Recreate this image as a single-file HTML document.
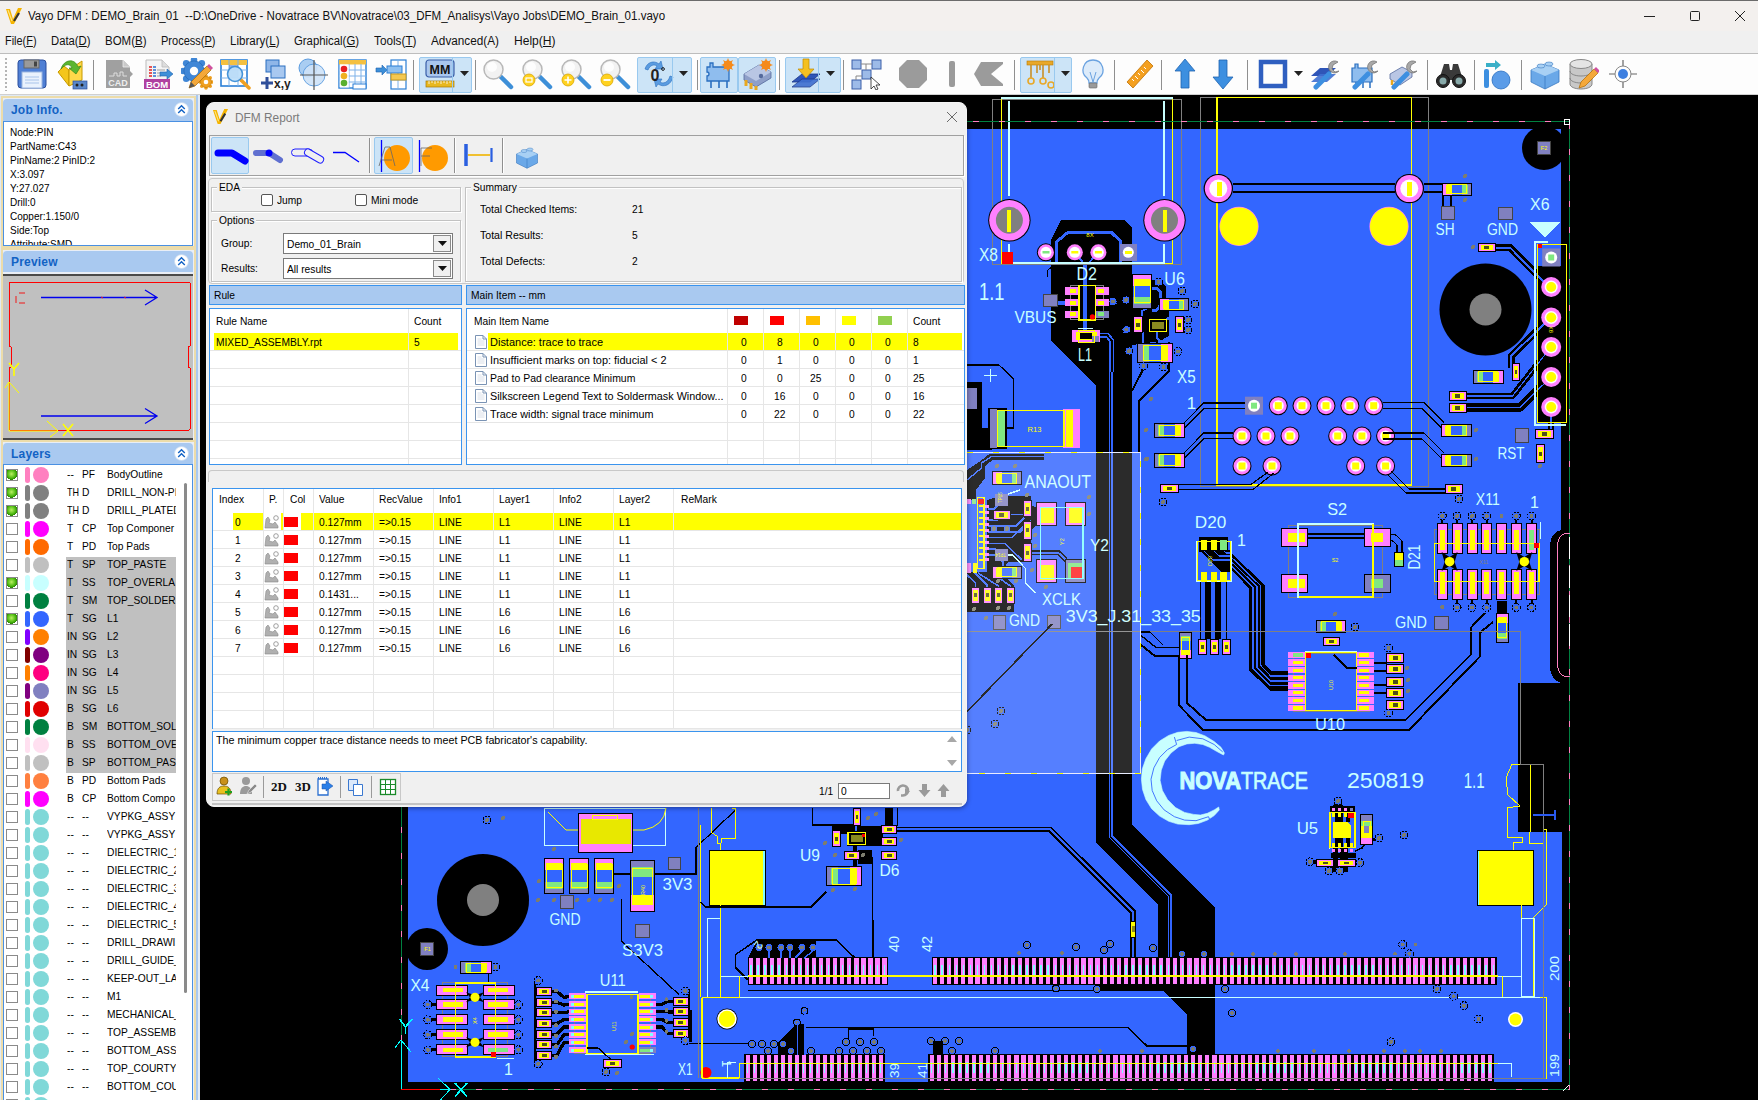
<!DOCTYPE html>
<html><head><meta charset="utf-8"><title>Vayo DFM</title><style>
*{box-sizing:border-box;margin:0;padding:0}
html,body{width:1758px;height:1100px;overflow:hidden;background:#000;font-family:"Liberation Sans",sans-serif;font-size:11px;color:#000}
.abs{position:absolute}
#title{position:absolute;left:0;top:0;width:1758px;height:31px;background:#f3f0ee;border-top:1px solid #6b6b6b}
#title .t{position:absolute;left:28px;top:8px;font-size:12.4px;white-space:nowrap;color:#111}
#menu{position:absolute;left:0;top:31px;width:1758px;height:22px;background:#f0f0f0}
#menu span{position:absolute;top:3px;font-size:12.3px;white-space:nowrap;color:#111}
#menu u{text-decoration:underline}
#tb{position:absolute;left:0;top:53px;width:1758px;height:42px;background:#fdfdfd;border-top:1px solid #bdbdbd;border-bottom:1px solid #d0d0d0}
#tb .sep{position:absolute;top:6px;width:1px;height:30px;background:#8f8f8f}
#tb .hl{position:absolute;top:3px;height:36px;background:#cce4f7;border:1px solid #99c9ef;border-radius:2px}
#tb svg{position:absolute;top:4px}
#left{position:absolute;left:0;top:95px;width:200px;height:1005px;background:#dfe9f5}
#canvas{position:absolute;left:200px;top:95px;width:1558px;height:1005px;background:#000;overflow:hidden}
</style></head><body>
<div id="title"><svg class="abs" style="left:5px;top:6px" width="18" height="18" viewBox="0 0 18 18"><path d="M1 2 L5 2 L8 12 L13 1 L17 1 L9 17 L6 17Z" fill="#f5b400"/><path d="M3 3 L7 14" stroke="#ffe680" stroke-width="1.2"/><path d="M9 14 L14 6" stroke="#333" stroke-width="2.2"/></svg><span class="abs" style="left:28px;top:8px;font-size:12.5px;line-height:15px;color:#111;white-space:nowrap;transform-origin:0 0;transform:scaleX(0.9241);">Vayo DFM : DEMO_Brain_01&nbsp; --D:\OneDrive - Novatrace BV\Novatrace\03_DFM_Analisys\Vayo Jobs\DEMO_Brain_01.vayo</span><svg class="abs" style="left:1630px;top:0" width="128" height="30" viewBox="0 0 128 30"><path d="M14 15.5h11" stroke="#222" stroke-width="1"/><rect x="60.5" y="10.5" width="9" height="9" rx="1" fill="none" stroke="#222" stroke-width="1"/><path d="M105 10l10 10M115 10l-10 10" stroke="#222" stroke-width="1"/></svg></div><div id="menu"><span class="abs" style="left:5px;top:3px;font-size:12.5px;line-height:15px;color:#111;white-space:nowrap;transform-origin:0 0;transform:scaleX(0.8726);">File(<u>F</u>)</span><span class="abs" style="left:51px;top:3px;font-size:12.5px;line-height:15px;color:#111;white-space:nowrap;transform-origin:0 0;transform:scaleX(0.9028);">Data(<u>D</u>)</span><span class="abs" style="left:105px;top:3px;font-size:12.5px;line-height:15px;color:#111;white-space:nowrap;transform-origin:0 0;transform:scaleX(0.9195);">BOM(<u>B</u>)</span><span class="abs" style="left:161px;top:3px;font-size:12.5px;line-height:15px;color:#111;white-space:nowrap;transform-origin:0 0;transform:scaleX(0.8817);">Process(<u>P</u>)</span><span class="abs" style="left:230px;top:3px;font-size:12.5px;line-height:15px;color:#111;white-space:nowrap;transform-origin:0 0;transform:scaleX(0.9256);">Library(<u>L</u>)</span><span class="abs" style="left:294px;top:3px;font-size:12.5px;line-height:15px;color:#111;white-space:nowrap;transform-origin:0 0;transform:scaleX(0.9086);">Graphical(<u>G</u>)</span><span class="abs" style="left:373.5px;top:3px;font-size:12.5px;line-height:15px;color:#111;white-space:nowrap;transform-origin:0 0;transform:scaleX(0.9415);">Tools(<u>T</u>)</span><span class="abs" style="left:431px;top:3px;font-size:12.5px;line-height:15px;color:#111;white-space:nowrap;transform-origin:0 0;transform:scaleX(0.9411);">Advanced(A)</span><span class="abs" style="left:513.5px;top:3px;font-size:12.5px;line-height:15px;color:#111;white-space:nowrap;transform-origin:0 0;transform:scaleX(0.9638);">Help(<u>H</u>)</span></div><div id="tb"><div class="abs" style="left:5px;top:4px;width:2px;height:33px;background:repeating-linear-gradient(#b5b5b5 0 2px,transparent 2px 4px)"></div><div class="hl" style="left:419px;width:53px"></div><div class="hl" style="left:637px;width:55px"></div><div class="hl" style="left:700px;width:38px"></div><div class="hl" style="left:738px;width:38px"></div><div class="hl" style="left:785px;width:56px"></div><div class="hl" style="left:1020px;width:52px"></div><div class="sep" style="left:93px"></div><div class="sep" style="left:413px"></div><div class="sep" style="left:475px"></div><div class="sep" style="left:697px"></div><div class="sep" style="left:779px"></div><div class="sep" style="left:843px"></div><div class="sep" style="left:1014px"></div><div class="sep" style="left:1114px"></div><div class="sep" style="left:1161px"></div><div class="sep" style="left:1247px"></div><div class="sep" style="left:1427px"></div><div class="sep" style="left:1474px"></div><div class="sep" style="left:1521px"></div><svg viewBox="0 0 32 32" width="32" height="32" style="left:16px;"><rect x="2" y="2" width="28" height="28" rx="3" fill="#4f7fd4" stroke="#2b4f9e"/><rect x="8" y="2" width="15" height="8" fill="#9a9a9a" stroke="#666"/><rect x="18" y="3.5" width="3" height="5" fill="#444"/><rect x="6" y="14" width="20" height="16" fill="#eaf2fd" stroke="#9db7e0"/><path d="M9 19h14M9 22h14M9 25h14" stroke="#a9c4ea" stroke-width="1"/></svg><svg viewBox="0 0 32 32" width="32" height="32" style="left:56px;"><path d="M2 14 L13 28 L13 12 L8 8 Z" fill="#f4c61c" stroke="#c79a00"/><path d="M13 28 L26 22 L26 3 L13 12 Z" fill="#ffd94a" stroke="#c79a00"/><path d="M5 11 C8 1 19 0 22 9 L25 8 L20 16 L13 10 L16 10 C14 5 9 6 5 11Z" fill="#5cb531" stroke="#3a8a17" stroke-width=".7"/><rect x="17" y="23" width="14" height="8" fill="#5b88c9" stroke="#2b4f9e" stroke-width=".7"/><circle cx="21" cy="27" r="1.5" fill="#222"/><circle cx="26" cy="27" r="1.5" fill="#222"/></svg><svg viewBox="0 0 32 32" width="32" height="32" style="left:103px;"><path d="M3 2 H20 L27 9 V13 L30 16 L27 19 V30 H3Z" fill="#a0a0a0"/><path d="M20 2 V9 H27" fill="#c9c9c9" stroke="#eee" stroke-width=".8"/><text x="15" y="28" font-size="9" font-weight="bold" fill="#eee" text-anchor="middle" font-family="Liberation Sans">CAD</text><path d="M6 18h5v-3h3v3h3v-4h3v4h4" stroke="#ddd" fill="none"/></svg><svg viewBox="0 0 32 32" width="32" height="32" style="left:142px;"><path d="M4 2 H20 L27 9 V22 H4Z" fill="#f4f4f4" stroke="#bbb"/><path d="M20 2 V9 H27" fill="#ddd" stroke="#bbb" stroke-width=".8"/><path d="M7 9h3M7 12h3M7 15h3M7 18h3" stroke="#e02020" stroke-width="1.5"/><path d="M11 9h3M11 12h3M11 15h3M11 18h3" stroke="#2a6fd0" stroke-width="1.5"/><path d="M15 12h8M15 15h4M15 18h4" stroke="#bbb" stroke-width="1.5"/><path d="M18 14h7v-3l6 5-6 5v-3h-7z" fill="#3d8fd8" stroke="#1f63b0" stroke-width=".6"/><rect x="2" y="21" width="26" height="10" fill="#b040a0"/><text x="15" y="29.5" font-size="9.5" font-weight="bold" fill="#fff" text-anchor="middle" font-family="Liberation Sans">BOM</text></svg><svg viewBox="0 0 32 32" width="32" height="32" style="left:181px;"><circle cx="24.0" cy="13.0" r="3.3" fill="#3f86d6"/><circle cx="20.8" cy="20.8" r="3.3" fill="#3f86d6"/><circle cx="13.0" cy="24.0" r="3.3" fill="#3f86d6"/><circle cx="5.2" cy="20.8" r="3.3" fill="#3f86d6"/><circle cx="2.0" cy="13.0" r="3.3" fill="#3f86d6"/><circle cx="5.2" cy="5.2" r="3.3" fill="#3f86d6"/><circle cx="13.0" cy="2.0" r="3.3" fill="#3f86d6"/><circle cx="20.8" cy="5.2" r="3.3" fill="#3f86d6"/><circle cx="13" cy="13" r="10.1" fill="#3f86d6" stroke="#1f63b0" stroke-width=".6"/><circle cx="13" cy="13" r="4.2" fill="#fdfdfd"/><circle cx="31.0" cy="24.0" r="1.8" fill="#f0a020"/><circle cx="29.2" cy="28.2" r="1.8" fill="#f0a020"/><circle cx="25.0" cy="30.0" r="1.8" fill="#f0a020"/><circle cx="20.8" cy="28.2" r="1.8" fill="#f0a020"/><circle cx="19.0" cy="24.0" r="1.8" fill="#f0a020"/><circle cx="20.8" cy="19.8" r="1.8" fill="#f0a020"/><circle cx="25.0" cy="18.0" r="1.8" fill="#f0a020"/><circle cx="29.2" cy="19.8" r="1.8" fill="#f0a020"/><circle cx="25" cy="24" r="5.5" fill="#f0a020" stroke="#c07800" stroke-width=".6"/><circle cx="25" cy="24" r="2.3" fill="#fdfdfd"/><path d="M8 30 L10 24 L26 8 L30 12 L14 28Z" fill="#f4a83a" stroke="#b06a00" stroke-width=".7"/><path d="M26 8 L28 6 L32 10 L30 12Z" fill="#d050a0"/><path d="M8 30 L10 24 L14 28Z" fill="#555"/></svg><svg viewBox="0 0 32 32" width="32" height="32" style="left:219px;"><rect x="2" y="2" width="26" height="26" fill="#fff" stroke="#2a7fd6" stroke-width="1.6"/><rect x="2" y="2" width="26" height="5" fill="#f4c040"/><path d="M10 2v26M19 2v26M2 12h26M2 20h26" stroke="#7fb2e8" stroke-width="1"/><rect x="10" y="7" width="9" height="13" fill="#3f6fc0" opacity=".55"/><line x1="22" y1="22" x2="30" y2="30" stroke="#f0a020" stroke-width="3.5" stroke-linecap="round"/><circle cx="16" cy="16" r="7.5" fill="#bfe0fa" stroke="#3d8fd8" stroke-width="1.6" opacity=".95"/></svg><svg viewBox="0 0 32 32" width="32" height="32" style="left:259px;"><rect x="7" y="2" width="13" height="12" fill="#8fb6e8" stroke="#2a6fc0"/><rect x="12" y="8" width="14" height="12" fill="#a8c8f0" stroke="#2a6fc0"/><path d="M8 19v12M2 25h12" stroke="#2f4f9a" stroke-width="3"/><text x="15" y="30" font-size="12" font-weight="bold" fill="#222" font-family="Liberation Sans">x,y</text></svg><svg viewBox="0 0 32 32" width="32" height="32" style="left:297px;"><circle cx="11" cy="10" r="9" fill="#a9cdf2" stroke="#5b9ce0"/><circle cx="17" cy="17" r="11" fill="#cfe3f8" stroke="#5b9ce0" opacity=".9"/><path d="M17 2v30M3 17h28" stroke="#555" stroke-width="1.2"/></svg><svg viewBox="0 0 32 32" width="32" height="32" style="left:336px;"><rect x="3" y="2" width="27" height="28" fill="#fff" stroke="#2a7fd6" stroke-width="1.4"/><rect x="3" y="2" width="27" height="4.5" fill="#f4c040"/><path d="M13 6v24M19 6v24M25 6v24M3 12h27M3 18h27M3 24h27" stroke="#7fb2e8" stroke-width="1"/><rect x="3.7" y="6.5" width="9" height="23" fill="#fff"/><circle cx="8" cy="11" r="3.3" fill="#e82020"/><circle cx="8" cy="18" r="3.3" fill="#f0b020"/><circle cx="8" cy="25" r="3.3" fill="#58b030"/><rect x="17" y="26" width="13" height="5" fill="#fff" stroke="#2a7fd6"/></svg><svg viewBox="0 0 32 32" width="32" height="32" style="left:375px;"><path d="M1 10h6v-3l5 5-5 5v-3h-6z" fill="#3d8fd8" stroke="#1f63b0" stroke-width=".6"/><rect x="16" y="2" width="15" height="29" fill="#fff" stroke="#2a7fd6" stroke-width="1.2"/><path d="M23 2v29M16 22h15" stroke="#7fb2e8"/><rect x="12" y="8" width="15" height="7" fill="#8ec0f0" stroke="#2a7fd6"/><rect x="16" y="16" width="15" height="6" fill="#f4c850" stroke="#c89a20"/></svg><svg viewBox="0 0 32 32" width="32" height="32" style="left:424px;"><rect x="2" y="2" width="28" height="17" rx="3" fill="#a9c6ee" stroke="#3a5fa8" stroke-width="1.2"/><text x="16" y="15.5" font-size="12.5" font-weight="bold" fill="#111" text-anchor="middle" font-family="Liberation Sans">MM</text><rect x="2" y="23" width="28" height="6" fill="#e8b820" stroke="#a87800" stroke-width=".7"/><path d="M5 23v3M8 23v2M11 23v3M14 23v2M17 23v3M20 23v2M23 23v3M26 23v2" stroke="#fff" stroke-width=".8"/></svg><svg viewBox="0 0 32 32" width="32" height="32" style="left:482px;"><line x1="17" y1="17" x2="29" y2="29" stroke="#3d8fd8" stroke-width="4.5" stroke-linecap="round"/><circle cx="11.5" cy="11.5" r="9.5" fill="#f2f2f2" stroke="#b8b8b8" stroke-width="1.5"/><circle cx="10" cy="9" r="5" fill="#fff" opacity=".8"/></svg><svg viewBox="0 0 32 32" width="32" height="32" style="left:521px;"><line x1="17" y1="17" x2="29" y2="29" stroke="#3d8fd8" stroke-width="4.5" stroke-linecap="round"/><circle cx="11.5" cy="11.5" r="9.5" fill="#f2f2f2" stroke="#b8b8b8" stroke-width="1.5"/><circle cx="10" cy="9" r="5" fill="#fff" opacity=".8"/><circle cx="8" cy="22" r="6" fill="#ffd21f" stroke="#d9a400" stroke-width=".8"/><rect x="5" y="20" width="6" height="4" fill="none" stroke="#fff" stroke-width="1.2"/></svg><svg viewBox="0 0 32 32" width="32" height="32" style="left:560px;"><line x1="17" y1="17" x2="29" y2="29" stroke="#3d8fd8" stroke-width="4.5" stroke-linecap="round"/><circle cx="11.5" cy="11.5" r="9.5" fill="#f2f2f2" stroke="#b8b8b8" stroke-width="1.5"/><circle cx="10" cy="9" r="5" fill="#fff" opacity=".8"/><circle cx="8" cy="22" r="6" fill="#ffd21f" stroke="#d9a400" stroke-width=".8"/><path d="M8 18.5v7M4.5 22h7" stroke="#fff" stroke-width="1.6"/></svg><svg viewBox="0 0 32 32" width="32" height="32" style="left:599px;"><line x1="17" y1="17" x2="29" y2="29" stroke="#3d8fd8" stroke-width="4.5" stroke-linecap="round"/><circle cx="11.5" cy="11.5" r="9.5" fill="#f2f2f2" stroke="#b8b8b8" stroke-width="1.5"/><circle cx="10" cy="9" r="5" fill="#fff" opacity=".8"/><circle cx="8" cy="22" r="6" fill="#ffd21f" stroke="#d9a400" stroke-width=".8"/><path d="M4.5 22h7" stroke="#fff" stroke-width="1.8"/></svg><svg viewBox="0 0 32 32" width="32" height="32" style="left:642px;"><path d="M3 11 C5 4 12 2 17 6 L19 3 L21 11 L13 11 L15 8 C12 6 8 7 6 12Z" fill="#5b9ce0" stroke="#2a6fc0" stroke-width=".6"/><path d="M31 19 C29 27 22 30 16 26 L14 29 L12 21 L20 21 L18 24 C21 26 26 25 28 18Z" fill="#5b9ce0" stroke="#2a6fc0" stroke-width=".6"/><text x="13" y="23" font-size="16" font-weight="bold" fill="#222" text-anchor="middle" font-family="Liberation Sans">0</text><circle cx="21" cy="11" r="1.4" fill="none" stroke="#222" stroke-width="1"/></svg><svg viewBox="0 0 32 32" width="32" height="32" style="left:703px;"><path d="M4 9h3v-4h3v4h16v14h-16v0h-6v-5a2 2 0 0 0 0-4z" fill="#8fbdee" stroke="#2a6fc0" stroke-width="1.3"/><path d="M8 23v7M16 23v7M24 23v7" stroke="#2a6fc0" stroke-width="1.6"/><g fill="#f58a1a"><circle cx="25" cy="7" r="4.5"/><path d="M25 0l1.5 4h-3zM25 14l1.5-4h-3zM18 7l4-1.5v3zM32 7l-4-1.5v3zM20 2l4 2-2 2zM30 2l-4 2 2 2zM20 12l4-2-2-2zM30 12l-4-2 2-2z"/></g></svg><svg viewBox="0 0 32 32" width="32" height="32" style="left:741px;"><path d="M3 16 L18 7 L30 14 L30 20 L15 29 L3 22Z" fill="#8e9fc8" stroke="#556a9c" stroke-width=".8"/><path d="M3 16 L18 7 L30 14 L15 23Z" fill="#b9c6e4"/><path d="M5 22v6M10 25v6M15 28v4" stroke="#e8a820" stroke-width="3"/><circle cx="20" cy="18" r="2.2" fill="#556a9c"/><g fill="#f58a1a"><circle cx="25" cy="7" r="4.5"/><path d="M25 0l1.5 4h-3zM25 14l1.5-4h-3zM18 7l4-1.5v3zM32 7l-4-1.5v3zM20 2l4 2-2 2zM30 2l-4 2 2 2zM20 12l4-2-2-2zM30 12l-4-2 2-2z"/></g></svg><svg viewBox="0 0 32 32" width="32" height="32" style="left:790px;"><path d="M2 24 L12 16 L30 16 L20 24Z" fill="#2f55b8" stroke="#1b3688" stroke-width=".8"/><path d="M2 29 L12 21 L30 21 L20 29Z" fill="#3f6fd0" stroke="#1b3688" stroke-width=".8" opacity=".9"/><path d="M13 1h6v10h5l-8 9-8-9h5z" fill="#f4c020" stroke="#c08a00" stroke-width=".7"/></svg><svg viewBox="0 0 32 32" width="32" height="32" style="left:850px;"><rect x="2" y="2" width="9" height="9" fill="#9dbbe8" stroke="#3a5fa8"/><rect x="22" y="2" width="9" height="9" fill="#9dbbe8" stroke="#3a5fa8"/><rect x="12" y="12" width="9" height="9" fill="#9dbbe8" stroke="#3a5fa8"/><rect x="2" y="22" width="9" height="9" fill="#9dbbe8" stroke="#3a5fa8"/><path d="M11 6h11M16 6v6M6 22v-4h6" stroke="#888" fill="none"/><path d="M21 19 L21 31 L24 28 L26 32 L28 31 L26 27 L30 27Z" fill="#fff" stroke="#222" stroke-width=".8"/></svg><svg viewBox="0 0 32 32" width="32" height="32" style="left:897px;"><path d="M10 2h12l8 8v12l-8 8h-12l-8-8v-12z" fill="#9b9b9b"/></svg><svg viewBox="0 0 32 32" width="32" height="32" style="left:936px;"><rect x="13" y="3" width="6" height="26" rx="2" fill="#9b9b9b"/></svg><svg viewBox="0 0 32 32" width="32" height="32" style="left:973px;"><path d="M8 4h22v24h-22l-7-12z" fill="#9b9b9b"/><path d="M18 16 L30 6 V26Z" fill="#fdfdfd"/></svg><svg viewBox="0 0 32 32" width="32" height="32" style="left:1024px;"><rect x="3" y="3" width="26" height="4" fill="#e8a828" stroke="#b87800" stroke-width=".6"/><path d="M7 7v13M13 7v8M19 7v13M25 7v8M16 7v5" stroke="#c89028" stroke-width="1.6" fill="none"/><circle cx="7" cy="23" r="3" fill="none" stroke="#e8a828" stroke-width="1.6"/><circle cx="19" cy="23" r="3" fill="none" stroke="#e8a828" stroke-width="1.6"/><circle cx="27" cy="27" r="3" fill="none" stroke="#e8a828" stroke-width="1.6"/></svg><svg viewBox="0 0 32 32" width="32" height="32" style="left:1077px;"><path d="M16 2a10 10 0 0 0-6 18c1 1 2 3 2 5h8c0-2 1-4 2-5a10 10 0 0 0-6-18z" fill="#dcebfa" stroke="#6aa2e0" stroke-width="1.3"/><path d="M13 14l3 10 3-10" stroke="#6aa2e0" fill="none"/><rect x="12" y="25" width="8" height="5" rx="1" fill="#9a9a9a" stroke="#666" stroke-width=".6"/></svg><svg viewBox="0 0 32 32" width="32" height="32" style="left:1123px;"><path d="M4 24 L24 2 L30 8 L10 30Z" fill="#f4a020" stroke="#c07000" stroke-width=".8"/><path d="M9 21l2 2M12 18l3 3M15 15l2 2M18 12l3 3M21 9l2 2" stroke="#fff" stroke-width="1"/></svg><svg viewBox="0 0 32 32" width="32" height="32" style="left:1169px;"><path d="M16 1 L26 13 H20 V30 H12 V13 H6Z" fill="#3d8fe0" stroke="#1f63b0" stroke-width=".8"/></svg><svg viewBox="0 0 32 32" width="32" height="32" style="left:1207px;"><path d="M16 31 L26 19 H20 V2 H12 V19 H6Z" fill="#3d8fe0" stroke="#1f63b0" stroke-width=".8"/></svg><svg viewBox="0 0 32 32" width="32" height="32" style="left:1257px;"><rect x="4" y="4" width="24" height="24" fill="#fdfdfd" stroke="#2f5fc0" stroke-width="4.5"/></svg><svg viewBox="0 0 32 32" width="32" height="32" style="left:1310px;"><path d="M1 18 L10 10 L26 10 L17 18Z" fill="#2f55b8"/><path d="M1 24 L10 16 L26 16 L17 24Z" fill="#3f6fd0" opacity=".9"/><path d="M30 5 a7 7 0 1 0 -9 9 L8 28 a2.5 2.5 0 0 0 4 4 L25 18" fill="none"/><path d="M19 16 L6 29" stroke="#3d8fe0" stroke-width="5" stroke-linecap="round"/><path d="M28 4 a6 6 0 1 0 1 9 l-4 1 l-3-3 l1-4z" fill="#a8a8a8" stroke="#777" stroke-width=".8"/></svg><svg viewBox="0 0 32 32" width="32" height="32" style="left:1349px;"><path d="M3 10h3v-4h3v4h14v14h-20z" fill="#8fbdee" stroke="#2a6fc0" stroke-width="1.2"/><path d="M7 24v6M14 24v6M21 24v6" stroke="#2a6fc0" stroke-width="1.5"/><path d="M30 5 a7 7 0 1 0 -9 9 L8 28 a2.5 2.5 0 0 0 4 4 L25 18" fill="none"/><path d="M19 16 L6 29" stroke="#3d8fe0" stroke-width="5" stroke-linecap="round"/><path d="M28 4 a6 6 0 1 0 1 9 l-4 1 l-3-3 l1-4z" fill="#a8a8a8" stroke="#777" stroke-width=".8"/></svg><svg viewBox="0 0 32 32" width="32" height="32" style="left:1388px;"><path d="M2 16 L14 9 L24 14 L24 19 L12 27 L2 21Z" fill="#b9c6e4" stroke="#556a9c" stroke-width=".8"/><path d="M4 22v5M8 24v5" stroke="#e8a820" stroke-width="2.5"/><path d="M30 5 a7 7 0 1 0 -9 9 L8 28 a2.5 2.5 0 0 0 4 4 L25 18" fill="none"/><path d="M19 16 L6 29" stroke="#3d8fe0" stroke-width="5" stroke-linecap="round"/><path d="M28 4 a6 6 0 1 0 1 9 l-4 1 l-3-3 l1-4z" fill="#a8a8a8" stroke="#777" stroke-width=".8"/></svg><svg viewBox="0 0 32 32" width="32" height="32" style="left:1435px;"><path d="M4 22 L9 6 L14 6 L15 12 L17 12 L18 6 L23 6 L28 22Z" fill="#3a3a3a"/><circle cx="8" cy="23" r="6.5" fill="#2a2a2a" stroke="#111"/><circle cx="24" cy="23" r="6.5" fill="#2a2a2a" stroke="#111"/><circle cx="8" cy="23" r="3.5" fill="#8aa"/><circle cx="24" cy="23" r="3.5" fill="#8aa"/></svg><svg viewBox="0 0 32 32" width="32" height="32" style="left:1481px;"><rect x="3" y="11" width="5" height="19" rx="2" fill="#3d8fe0"/><path d="M5 5h9v-3l6 5-6 5v-3h-9z" fill="#3ab0c8"/><circle cx="20" cy="22" r="9" fill="#5b9ce8" stroke="#2a6fc0" stroke-width=".8"/></svg><svg viewBox="0 0 32 32" width="32" height="32" style="left:1529px;"><path d="M2 12 L16 6 L30 12 L30 24 L16 31 L2 24Z" fill="#6aa8e8" stroke="#3a78c0" stroke-width=".8"/><path d="M2 12 L16 18 L30 12 L16 6Z" fill="#a8d0f4"/><path d="M16 18V31" stroke="#3a78c0" stroke-width=".8"/><ellipse cx="12" cy="8" rx="4" ry="2" fill="#a8d0f4" stroke="#3a78c0" stroke-width=".6"/><ellipse cx="20" cy="6" rx="4" ry="2" fill="#a8d0f4" stroke="#3a78c0" stroke-width=".6"/></svg><svg viewBox="0 0 32 32" width="32" height="32" style="left:1567px;"><path d="M3 6v20c0 3 5 5 11 5s11-2 11-5V6" fill="#c8c8c8" stroke="#888"/><ellipse cx="14" cy="6" rx="11" ry="4.5" fill="#e4e4e4" stroke="#888"/><path d="M3 13c0 3 5 5 11 5s11-2 11-5M3 20c0 3 5 5 11 5s11-2 11-5" stroke="#888" fill="none"/><path d="M12 30 L14 24 L27 11 L31 15 L18 28Z" fill="#f4a83a" stroke="#b06a00" stroke-width=".7"/><path d="M27 11l2-2 4 4-2 2z" fill="#d050a0"/></svg><svg viewBox="0 0 32 32" width="32" height="32" style="left:1607px;"><path d="M16 2v28M2 16h28" stroke="#666" stroke-width="1.2"/><circle cx="16" cy="16" r="8" fill="#fdfdfd" stroke="#888" stroke-width="1"/><circle cx="16" cy="16" r="5" fill="#3d7fe0"/></svg><svg class="abs" style="left:460px;top:17px" width="9" height="6"><path d="M0 0h9L4.5 5z" fill="#222"/></svg><svg class="abs" style="left:679px;top:17px" width="9" height="6"><path d="M0 0h9L4.5 5z" fill="#222"/></svg><svg class="abs" style="left:826px;top:17px" width="9" height="6"><path d="M0 0h9L4.5 5z" fill="#222"/></svg><svg class="abs" style="left:1061px;top:17px" width="9" height="6"><path d="M0 0h9L4.5 5z" fill="#222"/></svg><svg class="abs" style="left:1294px;top:17px" width="9" height="6"><path d="M0 0h9L4.5 5z" fill="#222"/></svg><div class="abs" style="left:452px;top:4px;width:1px;height:34px;background:#99c9ef"></div><div class="abs" style="left:672px;top:4px;width:1px;height:34px;background:#99c9ef"></div><div class="abs" style="left:818px;top:4px;width:1px;height:34px;background:#99c9ef"></div><div class="abs" style="left:1054px;top:4px;width:1px;height:34px;background:#99c9ef"></div></div>
<div id="left"><div class="abs" style="left:196px;top:0;width:2px;height:1005px;background:#a9c9f0"></div><div class="abs" style="left:1px;top:1px;width:195px;height:152px;border:2px solid #ecdcaa;background:#e9eef6"></div><div class="abs" style="left:3px;top:4px;width:190px;height:22px;background:#a9c9f0;border-radius:4px 4px 0 0"></div><span class="abs" style="left:11px;top:8px;font-size:12px;font-weight:bold;color:#1262c4;white-space:nowrap;letter-spacing:.2px">Job Info.</span><svg class="abs" style="left:174px;top:7px" width="15" height="15" viewBox="0 0 15 15"><circle cx="7.5" cy="7.5" r="7" fill="#fff" stroke="#c5d8f0" stroke-width=".8"/><path d="M4.2 7 L7.5 3.8 L10.8 7M4.2 11 L7.5 7.8 L10.8 11" fill="none" stroke="#1262c4" stroke-width="1.4"/></svg><div class="abs" style="left:3px;top:26px;width:190px;height:125px;background:#fff;border:1px solid #4a90e2;overflow:hidden"><div class="abs" style="left:6px;top:4px;white-space:nowrap;line-height:13px;transform-origin:0 0;transform:scaleX(.91)">Node:PIN</div><div class="abs" style="left:6px;top:18px;white-space:nowrap;line-height:13px;transform-origin:0 0;transform:scaleX(.91)">PartName:C43</div><div class="abs" style="left:6px;top:32px;white-space:nowrap;line-height:13px;transform-origin:0 0;transform:scaleX(.91)">PinName:2 PinID:2</div><div class="abs" style="left:6px;top:46px;white-space:nowrap;line-height:13px;transform-origin:0 0;transform:scaleX(.91)">X:3.097</div><div class="abs" style="left:6px;top:60px;white-space:nowrap;line-height:13px;transform-origin:0 0;transform:scaleX(.91)">Y:27.027</div><div class="abs" style="left:6px;top:74px;white-space:nowrap;line-height:13px;transform-origin:0 0;transform:scaleX(.91)">Drill:0</div><div class="abs" style="left:6px;top:88px;white-space:nowrap;line-height:13px;transform-origin:0 0;transform:scaleX(.91)">Copper:1.150/0</div><div class="abs" style="left:6px;top:102px;white-space:nowrap;line-height:13px;transform-origin:0 0;transform:scaleX(.91)">Side:Top</div><div class="abs" style="left:6px;top:116px;white-space:nowrap;line-height:13px;transform-origin:0 0;transform:scaleX(.91)">Attribute:SMD</div></div><div class="abs" style="left:1px;top:153px;width:195px;height:194px;border:2px solid #ecdcaa;background:#e9eef6"></div><div class="abs" style="left:3px;top:156px;width:190px;height:21px;background:#a9c9f0;border-radius:4px 4px 0 0"></div><span class="abs" style="left:11px;top:160px;font-size:12px;font-weight:bold;color:#1262c4;white-space:nowrap;letter-spacing:.2px">Preview</span><svg class="abs" style="left:174px;top:159px" width="15" height="15" viewBox="0 0 15 15"><circle cx="7.5" cy="7.5" r="7" fill="#fff" stroke="#c5d8f0" stroke-width=".8"/><path d="M4.2 7 L7.5 3.8 L10.8 7M4.2 11 L7.5 7.8 L10.8 11" fill="none" stroke="#1262c4" stroke-width="1.4"/></svg><div class="abs" style="left:3px;top:179px;width:190px;height:166px;background:#c0c0c0;border-top:2px solid #4a4a4a;border-bottom:2px solid #4a4a4a"><svg width="190" height="162" viewBox="3 276 190 162" class="abs" style="left:0;top:0"><path d="M10 282 H189 a1 1 0 0 1 1 1 V346 l-2 1 V367 l2 1 V429 a1 1 0 0 1 -1 1 H10 a1 1 0 0 1 -1 -1 V368 l2-1 V347 l-2-1 V283 a1 1 0 0 1 1-1z" fill="none" stroke="#ff0000" stroke-width="1" shape-rendering="crispEdges"/><path d="M41 297.5H157M145 290l12 7.5-12 7.5M41 416H157M145 408.500l12 7.500-12 7.500" fill="none" stroke="#0000ee" stroke-width="1.3"/><path d="M16 296v7M19 293h6M19 303h6M101 297l2 1M124 297l2 1" stroke="#f01818" stroke-width="1" fill="none"/><path d="M9 431V382M5 388l4-6 10 11M9 431H58M47 421l11 10-8 6" fill="none" stroke="#ffff00" stroke-width="1"/><path d="M9 363l5 6 5-6M14 369v7" fill="none" stroke="#ffff00" stroke-width="1.6"/><path d="M63 424l10 12M73 424l-10 12" fill="none" stroke="#ffff00" stroke-width="1.6"/></svg></div><div class="abs" style="left:1px;top:345px;width:195px;height:670px;border:2px solid #ecdcaa;background:#e9eef6"></div><div class="abs" style="left:3px;top:348px;width:190px;height:21px;background:#a9c9f0;border-radius:4px 4px 0 0"></div><span class="abs" style="left:11px;top:352px;font-size:12px;font-weight:bold;color:#1262c4;white-space:nowrap;letter-spacing:.2px">Layers</span><svg class="abs" style="left:174px;top:351px" width="15" height="15" viewBox="0 0 15 15"><circle cx="7.5" cy="7.5" r="7" fill="#fff" stroke="#c5d8f0" stroke-width=".8"/><path d="M4.2 7 L7.5 3.8 L10.8 7M4.2 11 L7.5 7.8 L10.8 11" fill="none" stroke="#1262c4" stroke-width="1.4"/></svg><div class="abs" style="left:3px;top:369px;width:190px;height:640px;background:#fff;border-left:1px solid #4a90e2;border-right:1px solid #4a90e2;border-top:1px solid #4a90e2;overflow:hidden"><div class="abs" style="left:62px;top:92px;width:110px;height:216px;background:#c0c0c0"></div><div class="abs" style="left:2px;top:4px;width:12px;height:12px;border:1px solid #8a8a8a;background:radial-gradient(circle at 45% 40%,#b8f060 0,#58c018 45%,#2a8a00 70%,#fff 72%)"></div><div class="abs" style="left:21px;top:2px;width:5px;height:16px;border-radius:2.5px;background:#ff80c0"></div><div class="abs" style="left:29px;top:2px;width:16px;height:16px;border-radius:8px;background:#ff80c0"></div><span class="abs" style="left:63px;top:3px;line-height:13px;white-space:nowrap;transform-origin:0 0;transform:scaleX(.93)">--</span><span class="abs" style="left:78px;top:3px;line-height:13px;white-space:nowrap;transform-origin:0 0;transform:scaleX(.93)">PF</span><span class="abs" style="left:103px;top:3px;line-height:13px;white-space:nowrap;width:74px;overflow:hidden;transform-origin:0 0;transform:scaleX(.93)">BodyOutline</span><div class="abs" style="left:2px;top:22px;width:12px;height:12px;border:1px solid #8a8a8a;background:radial-gradient(circle at 45% 40%,#b8f060 0,#58c018 45%,#2a8a00 70%,#fff 72%)"></div><div class="abs" style="left:21px;top:20px;width:5px;height:16px;border-radius:2.5px;background:#808080"></div><div class="abs" style="left:29px;top:20px;width:16px;height:16px;border-radius:8px;background:#808080"></div><span class="abs" style="left:63px;top:21px;line-height:13px;white-space:nowrap;transform-origin:0 0;transform:scaleX(.82)">TH</span><span class="abs" style="left:78px;top:21px;line-height:13px;white-space:nowrap;transform-origin:0 0;transform:scaleX(.93)">D</span><span class="abs" style="left:103px;top:21px;line-height:13px;white-space:nowrap;width:74px;overflow:hidden;transform-origin:0 0;transform:scaleX(.93)">DRILL_NON-PL</span><div class="abs" style="left:2px;top:40px;width:12px;height:12px;border:1px solid #8a8a8a;background:radial-gradient(circle at 45% 40%,#b8f060 0,#58c018 45%,#2a8a00 70%,#fff 72%)"></div><div class="abs" style="left:21px;top:38px;width:5px;height:16px;border-radius:2.5px;background:#808080"></div><div class="abs" style="left:29px;top:38px;width:16px;height:16px;border-radius:8px;background:#808080"></div><span class="abs" style="left:63px;top:39px;line-height:13px;white-space:nowrap;transform-origin:0 0;transform:scaleX(.82)">TH</span><span class="abs" style="left:78px;top:39px;line-height:13px;white-space:nowrap;transform-origin:0 0;transform:scaleX(.93)">D</span><span class="abs" style="left:103px;top:39px;line-height:13px;white-space:nowrap;width:74px;overflow:hidden;transform-origin:0 0;transform:scaleX(.93)">DRILL_PLATED</span><div class="abs" style="left:2px;top:58px;width:12px;height:12px;border:1px solid #8a8a8a;background:#fff"></div><div class="abs" style="left:21px;top:56px;width:5px;height:16px;border-radius:2.5px;background:#ff00ff"></div><div class="abs" style="left:29px;top:56px;width:16px;height:16px;border-radius:8px;background:#ff00ff"></div><span class="abs" style="left:63px;top:57px;line-height:13px;white-space:nowrap;transform-origin:0 0;transform:scaleX(.93)">T</span><span class="abs" style="left:78px;top:57px;line-height:13px;white-space:nowrap;transform-origin:0 0;transform:scaleX(.93)">CP</span><span class="abs" style="left:103px;top:57px;line-height:13px;white-space:nowrap;width:74px;overflow:hidden;transform-origin:0 0;transform:scaleX(.93)">Top Componer</span><div class="abs" style="left:2px;top:76px;width:12px;height:12px;border:1px solid #8a8a8a;background:#fff"></div><div class="abs" style="left:21px;top:74px;width:5px;height:16px;border-radius:2.5px;background:#ff6a00"></div><div class="abs" style="left:29px;top:74px;width:16px;height:16px;border-radius:8px;background:#ff6a00"></div><span class="abs" style="left:63px;top:75px;line-height:13px;white-space:nowrap;transform-origin:0 0;transform:scaleX(.93)">T</span><span class="abs" style="left:78px;top:75px;line-height:13px;white-space:nowrap;transform-origin:0 0;transform:scaleX(.93)">PD</span><span class="abs" style="left:103px;top:75px;line-height:13px;white-space:nowrap;width:74px;overflow:hidden;transform-origin:0 0;transform:scaleX(.93)">Top Pads</span><div class="abs" style="left:2px;top:94px;width:12px;height:12px;border:1px solid #8a8a8a;background:#fff"></div><div class="abs" style="left:21px;top:92px;width:5px;height:16px;border-radius:2.5px;background:#c0c0c0"></div><div class="abs" style="left:29px;top:92px;width:16px;height:16px;border-radius:8px;background:#c0c0c0"></div><span class="abs" style="left:63px;top:93px;line-height:13px;white-space:nowrap;transform-origin:0 0;transform:scaleX(.93)">T</span><span class="abs" style="left:78px;top:93px;line-height:13px;white-space:nowrap;transform-origin:0 0;transform:scaleX(.93)">SP</span><span class="abs" style="left:103px;top:93px;line-height:13px;white-space:nowrap;width:74px;overflow:hidden;transform-origin:0 0;transform:scaleX(.93)">TOP_PASTE</span><div class="abs" style="left:2px;top:112px;width:12px;height:12px;border:1px solid #8a8a8a;background:radial-gradient(circle at 45% 40%,#b8f060 0,#58c018 45%,#2a8a00 70%,#fff 72%)"></div><div class="abs" style="left:21px;top:110px;width:5px;height:16px;border-radius:2.5px;background:#c8ffff"></div><div class="abs" style="left:29px;top:110px;width:16px;height:16px;border-radius:8px;background:#c8ffff"></div><span class="abs" style="left:63px;top:111px;line-height:13px;white-space:nowrap;transform-origin:0 0;transform:scaleX(.93)">T</span><span class="abs" style="left:78px;top:111px;line-height:13px;white-space:nowrap;transform-origin:0 0;transform:scaleX(.93)">SS</span><span class="abs" style="left:103px;top:111px;line-height:13px;white-space:nowrap;width:74px;overflow:hidden;transform-origin:0 0;transform:scaleX(.93)">TOP_OVERLA</span><div class="abs" style="left:2px;top:130px;width:12px;height:12px;border:1px solid #8a8a8a;background:#fff"></div><div class="abs" style="left:21px;top:128px;width:5px;height:16px;border-radius:2.5px;background:#008040"></div><div class="abs" style="left:29px;top:128px;width:16px;height:16px;border-radius:8px;background:#008040"></div><span class="abs" style="left:63px;top:129px;line-height:13px;white-space:nowrap;transform-origin:0 0;transform:scaleX(.93)">T</span><span class="abs" style="left:78px;top:129px;line-height:13px;white-space:nowrap;transform-origin:0 0;transform:scaleX(.93)">SM</span><span class="abs" style="left:103px;top:129px;line-height:13px;white-space:nowrap;width:74px;overflow:hidden;transform-origin:0 0;transform:scaleX(.93)">TOP_SOLDER</span><div class="abs" style="left:2px;top:148px;width:12px;height:12px;border:1px solid #8a8a8a;background:radial-gradient(circle at 45% 40%,#b8f060 0,#58c018 45%,#2a8a00 70%,#fff 72%)"></div><div class="abs" style="left:21px;top:146px;width:5px;height:16px;border-radius:2.5px;background:#3366ff"></div><div class="abs" style="left:29px;top:146px;width:16px;height:16px;border-radius:8px;background:#3366ff"></div><span class="abs" style="left:63px;top:147px;line-height:13px;white-space:nowrap;transform-origin:0 0;transform:scaleX(.93)">T</span><span class="abs" style="left:78px;top:147px;line-height:13px;white-space:nowrap;transform-origin:0 0;transform:scaleX(.93)">SG</span><span class="abs" style="left:103px;top:147px;line-height:13px;white-space:nowrap;width:74px;overflow:hidden;transform-origin:0 0;transform:scaleX(.93)">L1</span><div class="abs" style="left:2px;top:166px;width:12px;height:12px;border:1px solid #8a8a8a;background:#fff"></div><div class="abs" style="left:21px;top:164px;width:5px;height:16px;border-radius:2.5px;background:#8000ff"></div><div class="abs" style="left:29px;top:164px;width:16px;height:16px;border-radius:8px;background:#ff8000"></div><span class="abs" style="left:63px;top:165px;line-height:13px;white-space:nowrap;transform-origin:0 0;transform:scaleX(.93)">IN</span><span class="abs" style="left:78px;top:165px;line-height:13px;white-space:nowrap;transform-origin:0 0;transform:scaleX(.93)">SG</span><span class="abs" style="left:103px;top:165px;line-height:13px;white-space:nowrap;width:74px;overflow:hidden;transform-origin:0 0;transform:scaleX(.93)">L2</span><div class="abs" style="left:2px;top:184px;width:12px;height:12px;border:1px solid #8a8a8a;background:#fff"></div><div class="abs" style="left:21px;top:182px;width:5px;height:16px;border-radius:2.5px;background:#800000"></div><div class="abs" style="left:29px;top:182px;width:16px;height:16px;border-radius:8px;background:#800080"></div><span class="abs" style="left:63px;top:183px;line-height:13px;white-space:nowrap;transform-origin:0 0;transform:scaleX(.93)">IN</span><span class="abs" style="left:78px;top:183px;line-height:13px;white-space:nowrap;transform-origin:0 0;transform:scaleX(.93)">SG</span><span class="abs" style="left:103px;top:183px;line-height:13px;white-space:nowrap;width:74px;overflow:hidden;transform-origin:0 0;transform:scaleX(.93)">L3</span><div class="abs" style="left:2px;top:202px;width:12px;height:12px;border:1px solid #8a8a8a;background:#fff"></div><div class="abs" style="left:21px;top:200px;width:5px;height:16px;border-radius:2.5px;background:#ff8000"></div><div class="abs" style="left:29px;top:200px;width:16px;height:16px;border-radius:8px;background:#ff0080"></div><span class="abs" style="left:63px;top:201px;line-height:13px;white-space:nowrap;transform-origin:0 0;transform:scaleX(.93)">IN</span><span class="abs" style="left:78px;top:201px;line-height:13px;white-space:nowrap;transform-origin:0 0;transform:scaleX(.93)">SG</span><span class="abs" style="left:103px;top:201px;line-height:13px;white-space:nowrap;width:74px;overflow:hidden;transform-origin:0 0;transform:scaleX(.93)">L4</span><div class="abs" style="left:2px;top:220px;width:12px;height:12px;border:1px solid #8a8a8a;background:#fff"></div><div class="abs" style="left:21px;top:218px;width:5px;height:16px;border-radius:2.5px;background:#800080"></div><div class="abs" style="left:29px;top:218px;width:16px;height:16px;border-radius:8px;background:#8080c0"></div><span class="abs" style="left:63px;top:219px;line-height:13px;white-space:nowrap;transform-origin:0 0;transform:scaleX(.93)">IN</span><span class="abs" style="left:78px;top:219px;line-height:13px;white-space:nowrap;transform-origin:0 0;transform:scaleX(.93)">SG</span><span class="abs" style="left:103px;top:219px;line-height:13px;white-space:nowrap;width:74px;overflow:hidden;transform-origin:0 0;transform:scaleX(.93)">L5</span><div class="abs" style="left:2px;top:238px;width:12px;height:12px;border:1px solid #8a8a8a;background:#fff"></div><div class="abs" style="left:21px;top:236px;width:5px;height:16px;border-radius:2.5px;background:#e00000"></div><div class="abs" style="left:29px;top:236px;width:16px;height:16px;border-radius:8px;background:#e00000"></div><span class="abs" style="left:63px;top:237px;line-height:13px;white-space:nowrap;transform-origin:0 0;transform:scaleX(.93)">B</span><span class="abs" style="left:78px;top:237px;line-height:13px;white-space:nowrap;transform-origin:0 0;transform:scaleX(.93)">SG</span><span class="abs" style="left:103px;top:237px;line-height:13px;white-space:nowrap;width:74px;overflow:hidden;transform-origin:0 0;transform:scaleX(.93)">L6</span><div class="abs" style="left:2px;top:256px;width:12px;height:12px;border:1px solid #8a8a8a;background:#fff"></div><div class="abs" style="left:21px;top:254px;width:5px;height:16px;border-radius:2.5px;background:#008040"></div><div class="abs" style="left:29px;top:254px;width:16px;height:16px;border-radius:8px;background:#008040"></div><span class="abs" style="left:63px;top:255px;line-height:13px;white-space:nowrap;transform-origin:0 0;transform:scaleX(.93)">B</span><span class="abs" style="left:78px;top:255px;line-height:13px;white-space:nowrap;transform-origin:0 0;transform:scaleX(.93)">SM</span><span class="abs" style="left:103px;top:255px;line-height:13px;white-space:nowrap;width:74px;overflow:hidden;transform-origin:0 0;transform:scaleX(.93)">BOTTOM_SOL</span><div class="abs" style="left:2px;top:274px;width:12px;height:12px;border:1px solid #8a8a8a;background:#fff"></div><div class="abs" style="left:21px;top:272px;width:5px;height:16px;border-radius:2.5px;background:#ffe0f0"></div><div class="abs" style="left:29px;top:272px;width:16px;height:16px;border-radius:8px;background:#ffe0f0"></div><span class="abs" style="left:63px;top:273px;line-height:13px;white-space:nowrap;transform-origin:0 0;transform:scaleX(.93)">B</span><span class="abs" style="left:78px;top:273px;line-height:13px;white-space:nowrap;transform-origin:0 0;transform:scaleX(.93)">SS</span><span class="abs" style="left:103px;top:273px;line-height:13px;white-space:nowrap;width:74px;overflow:hidden;transform-origin:0 0;transform:scaleX(.93)">BOTTOM_OVE</span><div class="abs" style="left:2px;top:292px;width:12px;height:12px;border:1px solid #8a8a8a;background:#fff"></div><div class="abs" style="left:21px;top:290px;width:5px;height:16px;border-radius:2.5px;background:#c0c0c0"></div><div class="abs" style="left:29px;top:290px;width:16px;height:16px;border-radius:8px;background:#c0c0c0"></div><span class="abs" style="left:63px;top:291px;line-height:13px;white-space:nowrap;transform-origin:0 0;transform:scaleX(.93)">B</span><span class="abs" style="left:78px;top:291px;line-height:13px;white-space:nowrap;transform-origin:0 0;transform:scaleX(.93)">SP</span><span class="abs" style="left:103px;top:291px;line-height:13px;white-space:nowrap;width:74px;overflow:hidden;transform-origin:0 0;transform:scaleX(.93)">BOTTOM_PAS</span><div class="abs" style="left:2px;top:310px;width:12px;height:12px;border:1px solid #8a8a8a;background:#fff"></div><div class="abs" style="left:21px;top:308px;width:5px;height:16px;border-radius:2.5px;background:#ff8040"></div><div class="abs" style="left:29px;top:308px;width:16px;height:16px;border-radius:8px;background:#ff8040"></div><span class="abs" style="left:63px;top:309px;line-height:13px;white-space:nowrap;transform-origin:0 0;transform:scaleX(.93)">B</span><span class="abs" style="left:78px;top:309px;line-height:13px;white-space:nowrap;transform-origin:0 0;transform:scaleX(.93)">PD</span><span class="abs" style="left:103px;top:309px;line-height:13px;white-space:nowrap;width:74px;overflow:hidden;transform-origin:0 0;transform:scaleX(.93)">Bottom Pads</span><div class="abs" style="left:2px;top:328px;width:12px;height:12px;border:1px solid #8a8a8a;background:#fff"></div><div class="abs" style="left:21px;top:326px;width:5px;height:16px;border-radius:2.5px;background:#ff00ff"></div><div class="abs" style="left:29px;top:326px;width:16px;height:16px;border-radius:8px;background:#ff00ff"></div><span class="abs" style="left:63px;top:327px;line-height:13px;white-space:nowrap;transform-origin:0 0;transform:scaleX(.93)">B</span><span class="abs" style="left:78px;top:327px;line-height:13px;white-space:nowrap;transform-origin:0 0;transform:scaleX(.93)">CP</span><span class="abs" style="left:103px;top:327px;line-height:13px;white-space:nowrap;width:74px;overflow:hidden;transform-origin:0 0;transform:scaleX(.93)">Bottom Compo</span><div class="abs" style="left:2px;top:346px;width:12px;height:12px;border:1px solid #8a8a8a;background:#fff"></div><div class="abs" style="left:21px;top:344px;width:5px;height:16px;border-radius:2.5px;background:#80d8d8"></div><div class="abs" style="left:29px;top:344px;width:16px;height:16px;border-radius:8px;background:#80d8d8"></div><span class="abs" style="left:63px;top:345px;line-height:13px;white-space:nowrap;transform-origin:0 0;transform:scaleX(.93)">--</span><span class="abs" style="left:78px;top:345px;line-height:13px;white-space:nowrap;transform-origin:0 0;transform:scaleX(.93)">--</span><span class="abs" style="left:103px;top:345px;line-height:13px;white-space:nowrap;width:74px;overflow:hidden;transform-origin:0 0;transform:scaleX(.93)">VYPKG_ASSY</span><div class="abs" style="left:2px;top:364px;width:12px;height:12px;border:1px solid #8a8a8a;background:#fff"></div><div class="abs" style="left:21px;top:362px;width:5px;height:16px;border-radius:2.5px;background:#80d8d8"></div><div class="abs" style="left:29px;top:362px;width:16px;height:16px;border-radius:8px;background:#80d8d8"></div><span class="abs" style="left:63px;top:363px;line-height:13px;white-space:nowrap;transform-origin:0 0;transform:scaleX(.93)">--</span><span class="abs" style="left:78px;top:363px;line-height:13px;white-space:nowrap;transform-origin:0 0;transform:scaleX(.93)">--</span><span class="abs" style="left:103px;top:363px;line-height:13px;white-space:nowrap;width:74px;overflow:hidden;transform-origin:0 0;transform:scaleX(.93)">VYPKG_ASSY</span><div class="abs" style="left:2px;top:382px;width:12px;height:12px;border:1px solid #8a8a8a;background:#fff"></div><div class="abs" style="left:21px;top:380px;width:5px;height:16px;border-radius:2.5px;background:#80d8d8"></div><div class="abs" style="left:29px;top:380px;width:16px;height:16px;border-radius:8px;background:#80d8d8"></div><span class="abs" style="left:63px;top:381px;line-height:13px;white-space:nowrap;transform-origin:0 0;transform:scaleX(.93)">--</span><span class="abs" style="left:78px;top:381px;line-height:13px;white-space:nowrap;transform-origin:0 0;transform:scaleX(.93)">--</span><span class="abs" style="left:103px;top:381px;line-height:13px;white-space:nowrap;width:74px;overflow:hidden;transform-origin:0 0;transform:scaleX(.93)">DIELECTRIC_1</span><div class="abs" style="left:2px;top:400px;width:12px;height:12px;border:1px solid #8a8a8a;background:#fff"></div><div class="abs" style="left:21px;top:398px;width:5px;height:16px;border-radius:2.5px;background:#80d8d8"></div><div class="abs" style="left:29px;top:398px;width:16px;height:16px;border-radius:8px;background:#80d8d8"></div><span class="abs" style="left:63px;top:399px;line-height:13px;white-space:nowrap;transform-origin:0 0;transform:scaleX(.93)">--</span><span class="abs" style="left:78px;top:399px;line-height:13px;white-space:nowrap;transform-origin:0 0;transform:scaleX(.93)">--</span><span class="abs" style="left:103px;top:399px;line-height:13px;white-space:nowrap;width:74px;overflow:hidden;transform-origin:0 0;transform:scaleX(.93)">DIELECTRIC_2</span><div class="abs" style="left:2px;top:418px;width:12px;height:12px;border:1px solid #8a8a8a;background:#fff"></div><div class="abs" style="left:21px;top:416px;width:5px;height:16px;border-radius:2.5px;background:#80d8d8"></div><div class="abs" style="left:29px;top:416px;width:16px;height:16px;border-radius:8px;background:#80d8d8"></div><span class="abs" style="left:63px;top:417px;line-height:13px;white-space:nowrap;transform-origin:0 0;transform:scaleX(.93)">--</span><span class="abs" style="left:78px;top:417px;line-height:13px;white-space:nowrap;transform-origin:0 0;transform:scaleX(.93)">--</span><span class="abs" style="left:103px;top:417px;line-height:13px;white-space:nowrap;width:74px;overflow:hidden;transform-origin:0 0;transform:scaleX(.93)">DIELECTRIC_3</span><div class="abs" style="left:2px;top:436px;width:12px;height:12px;border:1px solid #8a8a8a;background:#fff"></div><div class="abs" style="left:21px;top:434px;width:5px;height:16px;border-radius:2.5px;background:#80d8d8"></div><div class="abs" style="left:29px;top:434px;width:16px;height:16px;border-radius:8px;background:#80d8d8"></div><span class="abs" style="left:63px;top:435px;line-height:13px;white-space:nowrap;transform-origin:0 0;transform:scaleX(.93)">--</span><span class="abs" style="left:78px;top:435px;line-height:13px;white-space:nowrap;transform-origin:0 0;transform:scaleX(.93)">--</span><span class="abs" style="left:103px;top:435px;line-height:13px;white-space:nowrap;width:74px;overflow:hidden;transform-origin:0 0;transform:scaleX(.93)">DIELECTRIC_4</span><div class="abs" style="left:2px;top:454px;width:12px;height:12px;border:1px solid #8a8a8a;background:#fff"></div><div class="abs" style="left:21px;top:452px;width:5px;height:16px;border-radius:2.5px;background:#80d8d8"></div><div class="abs" style="left:29px;top:452px;width:16px;height:16px;border-radius:8px;background:#80d8d8"></div><span class="abs" style="left:63px;top:453px;line-height:13px;white-space:nowrap;transform-origin:0 0;transform:scaleX(.93)">--</span><span class="abs" style="left:78px;top:453px;line-height:13px;white-space:nowrap;transform-origin:0 0;transform:scaleX(.93)">--</span><span class="abs" style="left:103px;top:453px;line-height:13px;white-space:nowrap;width:74px;overflow:hidden;transform-origin:0 0;transform:scaleX(.93)">DIELECTRIC_5</span><div class="abs" style="left:2px;top:472px;width:12px;height:12px;border:1px solid #8a8a8a;background:#fff"></div><div class="abs" style="left:21px;top:470px;width:5px;height:16px;border-radius:2.5px;background:#80d8d8"></div><div class="abs" style="left:29px;top:470px;width:16px;height:16px;border-radius:8px;background:#80d8d8"></div><span class="abs" style="left:63px;top:471px;line-height:13px;white-space:nowrap;transform-origin:0 0;transform:scaleX(.93)">--</span><span class="abs" style="left:78px;top:471px;line-height:13px;white-space:nowrap;transform-origin:0 0;transform:scaleX(.93)">--</span><span class="abs" style="left:103px;top:471px;line-height:13px;white-space:nowrap;width:74px;overflow:hidden;transform-origin:0 0;transform:scaleX(.93)">DRILL_DRAWI</span><div class="abs" style="left:2px;top:490px;width:12px;height:12px;border:1px solid #8a8a8a;background:#fff"></div><div class="abs" style="left:21px;top:488px;width:5px;height:16px;border-radius:2.5px;background:#80d8d8"></div><div class="abs" style="left:29px;top:488px;width:16px;height:16px;border-radius:8px;background:#80d8d8"></div><span class="abs" style="left:63px;top:489px;line-height:13px;white-space:nowrap;transform-origin:0 0;transform:scaleX(.93)">--</span><span class="abs" style="left:78px;top:489px;line-height:13px;white-space:nowrap;transform-origin:0 0;transform:scaleX(.93)">--</span><span class="abs" style="left:103px;top:489px;line-height:13px;white-space:nowrap;width:74px;overflow:hidden;transform-origin:0 0;transform:scaleX(.93)">DRILL_GUIDE_</span><div class="abs" style="left:2px;top:508px;width:12px;height:12px;border:1px solid #8a8a8a;background:#fff"></div><div class="abs" style="left:21px;top:506px;width:5px;height:16px;border-radius:2.5px;background:#80d8d8"></div><div class="abs" style="left:29px;top:506px;width:16px;height:16px;border-radius:8px;background:#80d8d8"></div><span class="abs" style="left:63px;top:507px;line-height:13px;white-space:nowrap;transform-origin:0 0;transform:scaleX(.93)">--</span><span class="abs" style="left:78px;top:507px;line-height:13px;white-space:nowrap;transform-origin:0 0;transform:scaleX(.93)">--</span><span class="abs" style="left:103px;top:507px;line-height:13px;white-space:nowrap;width:74px;overflow:hidden;transform-origin:0 0;transform:scaleX(.93)">KEEP-OUT_LA</span><div class="abs" style="left:2px;top:526px;width:12px;height:12px;border:1px solid #8a8a8a;background:#fff"></div><div class="abs" style="left:21px;top:524px;width:5px;height:16px;border-radius:2.5px;background:#80d8d8"></div><div class="abs" style="left:29px;top:524px;width:16px;height:16px;border-radius:8px;background:#80d8d8"></div><span class="abs" style="left:63px;top:525px;line-height:13px;white-space:nowrap;transform-origin:0 0;transform:scaleX(.93)">--</span><span class="abs" style="left:78px;top:525px;line-height:13px;white-space:nowrap;transform-origin:0 0;transform:scaleX(.93)">--</span><span class="abs" style="left:103px;top:525px;line-height:13px;white-space:nowrap;width:74px;overflow:hidden;transform-origin:0 0;transform:scaleX(.93)">M1</span><div class="abs" style="left:2px;top:544px;width:12px;height:12px;border:1px solid #8a8a8a;background:#fff"></div><div class="abs" style="left:21px;top:542px;width:5px;height:16px;border-radius:2.5px;background:#80d8d8"></div><div class="abs" style="left:29px;top:542px;width:16px;height:16px;border-radius:8px;background:#80d8d8"></div><span class="abs" style="left:63px;top:543px;line-height:13px;white-space:nowrap;transform-origin:0 0;transform:scaleX(.93)">--</span><span class="abs" style="left:78px;top:543px;line-height:13px;white-space:nowrap;transform-origin:0 0;transform:scaleX(.93)">--</span><span class="abs" style="left:103px;top:543px;line-height:13px;white-space:nowrap;width:74px;overflow:hidden;transform-origin:0 0;transform:scaleX(.93)">MECHANICAL_</span><div class="abs" style="left:2px;top:562px;width:12px;height:12px;border:1px solid #8a8a8a;background:#fff"></div><div class="abs" style="left:21px;top:560px;width:5px;height:16px;border-radius:2.5px;background:#80d8d8"></div><div class="abs" style="left:29px;top:560px;width:16px;height:16px;border-radius:8px;background:#80d8d8"></div><span class="abs" style="left:63px;top:561px;line-height:13px;white-space:nowrap;transform-origin:0 0;transform:scaleX(.93)">--</span><span class="abs" style="left:78px;top:561px;line-height:13px;white-space:nowrap;transform-origin:0 0;transform:scaleX(.93)">--</span><span class="abs" style="left:103px;top:561px;line-height:13px;white-space:nowrap;width:74px;overflow:hidden;transform-origin:0 0;transform:scaleX(.93)">TOP_ASSEMB</span><div class="abs" style="left:2px;top:580px;width:12px;height:12px;border:1px solid #8a8a8a;background:#fff"></div><div class="abs" style="left:21px;top:578px;width:5px;height:16px;border-radius:2.5px;background:#80d8d8"></div><div class="abs" style="left:29px;top:578px;width:16px;height:16px;border-radius:8px;background:#80d8d8"></div><span class="abs" style="left:63px;top:579px;line-height:13px;white-space:nowrap;transform-origin:0 0;transform:scaleX(.93)">--</span><span class="abs" style="left:78px;top:579px;line-height:13px;white-space:nowrap;transform-origin:0 0;transform:scaleX(.93)">--</span><span class="abs" style="left:103px;top:579px;line-height:13px;white-space:nowrap;width:74px;overflow:hidden;transform-origin:0 0;transform:scaleX(.93)">BOTTOM_ASS</span><div class="abs" style="left:2px;top:598px;width:12px;height:12px;border:1px solid #8a8a8a;background:#fff"></div><div class="abs" style="left:21px;top:596px;width:5px;height:16px;border-radius:2.5px;background:#80d8d8"></div><div class="abs" style="left:29px;top:596px;width:16px;height:16px;border-radius:8px;background:#80d8d8"></div><span class="abs" style="left:63px;top:597px;line-height:13px;white-space:nowrap;transform-origin:0 0;transform:scaleX(.93)">--</span><span class="abs" style="left:78px;top:597px;line-height:13px;white-space:nowrap;transform-origin:0 0;transform:scaleX(.93)">--</span><span class="abs" style="left:103px;top:597px;line-height:13px;white-space:nowrap;width:74px;overflow:hidden;transform-origin:0 0;transform:scaleX(.93)">TOP_COURTY</span><div class="abs" style="left:2px;top:616px;width:12px;height:12px;border:1px solid #8a8a8a;background:#fff"></div><div class="abs" style="left:21px;top:614px;width:5px;height:16px;border-radius:2.5px;background:#80d8d8"></div><div class="abs" style="left:29px;top:614px;width:16px;height:16px;border-radius:8px;background:#80d8d8"></div><span class="abs" style="left:63px;top:615px;line-height:13px;white-space:nowrap;transform-origin:0 0;transform:scaleX(.93)">--</span><span class="abs" style="left:78px;top:615px;line-height:13px;white-space:nowrap;transform-origin:0 0;transform:scaleX(.93)">--</span><span class="abs" style="left:103px;top:615px;line-height:13px;white-space:nowrap;width:74px;overflow:hidden;transform-origin:0 0;transform:scaleX(.93)">BOTTOM_COU</span><div class="abs" style="left:2px;top:634px;width:12px;height:12px;border:1px solid #8a8a8a;background:#fff"></div><div class="abs" style="left:21px;top:632px;width:5px;height:16px;border-radius:2.5px;background:#80d8d8"></div><div class="abs" style="left:29px;top:632px;width:16px;height:16px;border-radius:8px;background:#80d8d8"></div><span class="abs" style="left:63px;top:633px;line-height:13px;white-space:nowrap;transform-origin:0 0;transform:scaleX(.93)">--</span><span class="abs" style="left:78px;top:633px;line-height:13px;white-space:nowrap;transform-origin:0 0;transform:scaleX(.93)">--</span><span class="abs" style="left:103px;top:633px;line-height:13px;white-space:nowrap;width:74px;overflow:hidden;transform-origin:0 0;transform:scaleX(.93)">X</span><div class="abs" style="left:180px;top:18px;width:3px;height:510px;background:#8a8a8a;border-radius:1.5px"></div></div></div>
<div id="canvas"><svg class="abs" style="left:0;top:0" width="1558" height="1005" viewBox="200 95 1558 1005" shape-rendering="crispEdges" font-family="Liberation Sans, sans-serif"><path d="M408 129 H1561 V530 Q1551 532 1550 545 V668 Q1551 680 1561 683 H1518 V832 H1562 V1082 H408Z" fill="#3366ff"/><g shape-rendering="auto"><circle cx="1544" cy="148" r="22" fill="#000"/><circle cx="427" cy="949" r="21" fill="#000"/><rect x="1561" y="120" width="12" height="60" fill="#000"/><rect x="395" y="920" width="13" height="60" fill="#000"/><circle cx="1485.500" cy="309.500" r="46" fill="#000"/><circle cx="1485.500" cy="309.500" r="16" fill="#808080"/><circle cx="483" cy="900" r="46" fill="#000"/><circle cx="483" cy="900" r="16" fill="#808080"/></g><path d="M1061 220 H1124 L1132 228 V825 L1215 908 V1054 H1187 V1014 L1164 992 V985 H1158 V905 L1096 843 V386 L1051 341 V240Z" fill="#000"/><rect x="1096" y="983" width="70" height="8" fill="#000"/><path d="M1109 372 V838 L1168 897 V958 H1172 V895 L1113 836 V372Z" fill="#3366ff"/><path d="M1110.500 372 V837 L1169.500 896 V958" fill="none" stroke="#000" stroke-width="1"/><path d="M1132.0 275.0 L1153.0 277.0 L1168.0 285.0 L1169.0 336.0 L1160.0 341.0 L1132.0 345.0Z" fill="#000"/><path d="M1158.0 340.0 L1132.0 391.0" fill="none" stroke="#000" stroke-width="2"/><path d="M1169.0 342.0 L1169.0 371.0 L1139.0 401.0 L1139.0 452.0" fill="none" stroke="#000" stroke-width="2"/><path d="M1062.0 258.0 L1047.0 271.0 L1047.0 277.0" fill="none" stroke="#000" stroke-width="1"/><path d="M1150.0 278.5 L1161.0 278.5 L1167.7 285.5 L1167.7 298.0" fill="none" stroke="#3366ff" stroke-width="3.5"/><path d="M1150.0 288.0 L1156.5 288.0 L1160.0 291.5 L1160.0 306.0 L1156.5 310.0 L1152.0 310.0" fill="none" stroke="#3366ff" stroke-width="3"/><path d="M1166.0 320.0 L1172.0 316.0 L1176.0 316.0" fill="none" stroke="#3366ff" stroke-width="2.5"/><path d="M1157.0 332.0 L1157.0 338.0 L1162.0 343.0" fill="none" stroke="#3366ff" stroke-width="2.5"/><path d="M1142.0 317.0 L1142.0 311.0 L1150.0 307.0" fill="none" stroke="#3366ff" stroke-width="2"/><path d="M1143.0 332.0 L1143.0 343.0" fill="none" stroke="#3366ff" stroke-width="2"/><rect x="1082.5" y="264.0" width="4.5" height="68.0" fill="#3366ff"/><path d="M1056.8 264.0 L1056.8 241.5 L1067.8 232.5 L1111.5 232.5 L1120.8 241.5 L1120.8 264.0" fill="none" stroke="#3366ff" stroke-width="3"/><path d="M1074.8 252.0 L1084.0 264.0" fill="none" stroke="#3366ff" stroke-width="2"/><path d="M1098.4 252.0 L1088.0 264.0" fill="none" stroke="#3366ff" stroke-width="2"/><path d="M1056.0 302.7 L1066.0 302.7" fill="none" stroke="#3366ff" stroke-width="4"/><path d="M1100.0 333.6 L1108.0 333.6 L1113.6 340.0 L1113.6 372.0" fill="none" stroke="#3366ff" stroke-width="1.6"/><path d="M1100.0 337.0 L1106.4 337.0 L1110.0 341.3 L1110.0 372.0" fill="none" stroke="#3366ff" stroke-width="1.6"/><rect x="992.5" y="99.5" width="189.0" height="165.0" fill="none" stroke="#808080" stroke-width="1"/><rect x="1001.5" y="98.5" width="171.0" height="165.0" fill="none" stroke="#ffff00" stroke-width="1.4"/><rect x="1008.0" y="101.0" width="2.0" height="95.0" fill="#c8ffff"/><rect x="1163.0" y="101.0" width="2.0" height="95.0" fill="#c8ffff"/><rect x="1001.0" y="97.0" width="172.0" height="2.0" fill="#c8ffff"/><rect x="1009.0" y="262.0" width="156.0" height="2.0" fill="#c8ffff"/><rect x="1008.0" y="244.0" width="2.0" height="19.0" fill="#c8ffff"/><rect x="1163.0" y="244.0" width="2.0" height="19.0" fill="#c8ffff"/><g shape-rendering="auto"><circle cx="1009.4" cy="220.3" r="21.2" fill="#000"/><circle cx="1009.4" cy="220.3" r="20.2" fill="#ff80ff"/><circle cx="1009.4" cy="220.3" r="13.5" fill="#808080"/></g><rect x="1007.4" y="209.5" width="4.0" height="22.0" fill="#ffff00"/><g shape-rendering="auto"><circle cx="1164.5" cy="220.3" r="21.2" fill="#000"/><circle cx="1164.5" cy="220.3" r="20.2" fill="#ff80ff"/><circle cx="1164.5" cy="220.3" r="13.5" fill="#808080"/></g><rect x="1162.5" y="209.5" width="4.0" height="22.0" fill="#ffff00"/><g shape-rendering="auto"><circle cx="1045.9" cy="252.3" r="9.0" fill="#000"/><circle cx="1045.9" cy="252.3" r="8.0" fill="#ff80ff"/><circle cx="1045.9" cy="252.3" r="5.5" fill="#fff"/><rect x="1042.5" y="251.0" width="7.0" height="2.5" fill="#80e880"/><circle cx="1074.8" cy="252.3" r="8.0" fill="#ff80ff"/><circle cx="1074.8" cy="252.3" r="5.5" fill="#fff"/><rect x="1071.3" y="251.0" width="7.0" height="2.5" fill="#ffff00"/><circle cx="1098.4" cy="252.3" r="8.0" fill="#ff80ff"/><circle cx="1098.4" cy="252.3" r="5.5" fill="#fff"/><rect x="1094.9" y="251.0" width="7.0" height="2.5" fill="#ffff00"/></g><rect x="1120.0" y="244.0" width="17.0" height="17.0" fill="#8080c0"/><g shape-rendering="auto"><circle cx="1128.3" cy="252.3" r="5.5" fill="#fff"/></g><rect x="1125.0" y="251.0" width="7.0" height="2.5" fill="#ffff00"/><rect x="1002.0" y="252.3" width="11.0" height="11.7" fill="#ff0000"/><text x="979.0" y="261.0" font-size="18" fill="#c8ffff" textLength="19.0" lengthAdjust="spacingAndGlyphs" shape-rendering="auto">X8</text><text x="1076.5" y="280.0" font-size="18" fill="#c8ffff" textLength="20.5" lengthAdjust="spacingAndGlyphs" shape-rendering="auto">D2</text><text x="1164.3" y="284.5" font-size="18" fill="#c8ffff" textLength="20.5" lengthAdjust="spacingAndGlyphs" shape-rendering="auto">U6</text><text x="1078.0" y="361.0" font-size="18" fill="#c8ffff" textLength="14.0" lengthAdjust="spacingAndGlyphs" shape-rendering="auto">L1</text><text x="979.0" y="300.0" font-size="24" fill="#c8ffff" textLength="25.5" lengthAdjust="spacingAndGlyphs" shape-rendering="auto">1.1</text><text x="1014.5" y="323.0" font-size="16.5" fill="#c8ffff" textLength="42.0" lengthAdjust="spacingAndGlyphs" shape-rendering="auto">VBUS</text><text x="1177.0" y="383.0" font-size="18" fill="#c8ffff" textLength="18.6" lengthAdjust="spacingAndGlyphs" shape-rendering="auto">X5</text><text x="1186.8" y="409.0" font-size="17" fill="#c8ffff" shape-rendering="auto">1</text><text x="1090.0" y="237.0" font-size="6" fill="#ffff00" text-anchor="middle" shape-rendering="auto">8X</text><rect x="1070.5" y="285.8" width="32.6" height="34.1" fill="none" stroke="#808080" stroke-width="1"/><rect x="1064.8" y="287.3" width="12.9" height="7.4" fill="#ff80ff"/><rect x="1070.0" y="289.0" width="6.0" height="4.0" fill="#ffff00"/><rect x="1096.0" y="287.3" width="12.8" height="7.4" fill="#ff80ff"/><rect x="1098.0" y="289.0" width="6.0" height="4.0" fill="#ffff00"/><rect x="1064.8" y="299.0" width="12.9" height="7.4" fill="#ff80ff"/><rect x="1070.0" y="300.7" width="6.0" height="4.0" fill="#ffff00"/><rect x="1096.0" y="299.0" width="12.8" height="7.4" fill="#ff80ff"/><rect x="1098.0" y="300.7" width="6.0" height="4.0" fill="#ffff00"/><rect x="1064.8" y="310.6" width="12.9" height="7.4" fill="#ff80ff"/><rect x="1070.0" y="312.3" width="6.0" height="4.0" fill="#ffff00"/><rect x="1096.0" y="310.6" width="12.8" height="7.4" fill="#8080c0"/><rect x="1098.0" y="312.3" width="6.0" height="4.0" fill="#80e880"/><rect x="1078.9" y="285.8" width="16.4" height="34.1" fill="none" stroke="#ffff00" stroke-width="1.3"/><g shape-rendering="auto"><circle cx="1092.4" cy="316.9" r="2.6" fill="#ff0000"/></g><rect x="1044.0" y="295.0" width="12.6" height="11.4" fill="#8080c0"/><rect x="1043.5" y="294.5" width="13.6" height="12.4" fill="none" stroke="#444" stroke-width="1"/><rect x="1072.3" y="330.0" width="27.7" height="12.0" fill="#ff80ff"/><rect x="1076.0" y="332.0" width="21.0" height="8.0" fill="#ffff00"/><rect x="1080.0" y="333.0" width="12.0" height="6.0" fill="#000"/><rect x="1092.0" y="336.0" width="7.0" height="6.0" fill="#8080c0"/><rect x="1078.5" y="330.5" width="16.0" height="12.0" fill="none" stroke="#ffff00" stroke-width="1"/><rect x="1078.0" y="327.5" width="15.0" height="1.2" fill="#c8ffff"/><rect x="1132.0" y="274.0" width="20.0" height="35.0" fill="#000"/><rect x="1133.0" y="285.6" width="18.0" height="11.9" fill="#3366ff"/><rect x="1133.0" y="275.0" width="18.0" height="10.6" fill="#ff80ff"/><rect x="1134.0" y="278.7" width="16.0" height="6.9" fill="#ffff00"/><rect x="1133.0" y="297.4" width="18.0" height="10.6" fill="#8080c0"/><rect x="1134.0" y="297.4" width="16.0" height="6.3" fill="#80e880"/><rect x="1134.0" y="280.3" width="16.0" height="22.5" fill="none" stroke="#ffff00" stroke-width="1"/><rect x="1159.0" y="298.0" width="30.0" height="13.0" fill="#000"/><rect x="1169.0" y="299.0" width="10.1" height="11.0" fill="#3366ff"/><rect x="1160.0" y="299.0" width="9.0" height="11.0" fill="#ff80ff"/><rect x="1163.1" y="300.0" width="5.8" height="9.0" fill="#ffff00"/><rect x="1179.0" y="299.0" width="9.0" height="11.0" fill="#8080c0"/><rect x="1179.0" y="300.0" width="5.4" height="9.0" fill="#80e880"/><rect x="1164.5" y="300.0" width="18.9" height="9.0" fill="none" stroke="#ffff00" stroke-width="1"/><rect x="1133.3" y="316.3" width="9.7" height="17.0" fill="#000"/><rect x="1134.3" y="317.3" width="7.7" height="15.0" fill="#ff80ff"/><rect x="1135.3" y="319.3" width="5.7" height="11.0" fill="#ffff00"/><rect x="1136.3" y="322.8" width="3.7" height="4.0" fill="#50501a"/><rect x="1174.9" y="316.0" width="8.8" height="17.0" fill="#000"/><rect x="1175.9" y="317.0" width="6.8" height="15.0" fill="#ff80ff"/><rect x="1176.9" y="319.0" width="4.8" height="11.0" fill="#ffff00"/><rect x="1177.9" y="322.5" width="2.8" height="4.0" fill="#50501a"/><rect x="1149.3" y="319.4" width="17.4" height="12.2" fill="#000"/><rect x="1149.8" y="319.9" width="16.4" height="11.2" fill="none" stroke="#ffff00" stroke-width="1.2"/><rect x="1152.0" y="322.0" width="12.0" height="7.0" fill="#8a8a20"/><rect x="1137.4" y="343.0" width="35.4" height="19.6" fill="#000"/><rect x="1149.1" y="344.0" width="12.0" height="17.6" fill="#3366ff"/><rect x="1138.4" y="344.0" width="10.7" height="17.6" fill="#8080c0"/><rect x="1142.7" y="345.0" width="6.4" height="15.6" fill="#80e880"/><rect x="1161.1" y="344.0" width="10.7" height="17.6" fill="#ff80ff"/><rect x="1161.1" y="345.0" width="6.9" height="15.6" fill="#ffff00"/><rect x="1143.7" y="345.0" width="22.8" height="15.6" fill="none" stroke="#ffff00" stroke-width="1"/><circle cx="1113.0" cy="301.5" r="4" fill="#3366ff" stroke="#000" stroke-width="1" stroke-dasharray="2 1.2"/><circle cx="1113.0" cy="301.5" r="2.0" fill="#7d7d6e"/><circle cx="1126.0" cy="300.0" r="4" fill="#3366ff" stroke="#000" stroke-width="1" stroke-dasharray="2 1.2"/><circle cx="1126.0" cy="300.0" r="2.0" fill="#7d7d6e"/><circle cx="1126.5" cy="329.5" r="4" fill="#3366ff" stroke="#000" stroke-width="1" stroke-dasharray="2 1.2"/><circle cx="1126.5" cy="329.5" r="2.0" fill="#7d7d6e"/><circle cx="1158.5" cy="282.0" r="4" fill="#3366ff" stroke="#000" stroke-width="1" stroke-dasharray="2 1.2"/><circle cx="1158.5" cy="282.0" r="2.0" fill="#7d7d6e"/><circle cx="1182.0" cy="291.0" r="4" fill="#3366ff" stroke="#000" stroke-width="1" stroke-dasharray="2 1.2"/><circle cx="1182.0" cy="291.0" r="2.0" fill="#7d7d6e"/><circle cx="1195.0" cy="304.0" r="4" fill="#3366ff" stroke="#000" stroke-width="1" stroke-dasharray="2 1.2"/><circle cx="1195.0" cy="304.0" r="2.0" fill="#7d7d6e"/><circle cx="1188.0" cy="320.0" r="4" fill="#3366ff" stroke="#000" stroke-width="1" stroke-dasharray="2 1.2"/><circle cx="1188.0" cy="320.0" r="2.0" fill="#7d7d6e"/><circle cx="1188.0" cy="330.0" r="4" fill="#3366ff" stroke="#000" stroke-width="1" stroke-dasharray="2 1.2"/><circle cx="1188.0" cy="330.0" r="2.0" fill="#7d7d6e"/><circle cx="1129.0" cy="351.0" r="4" fill="#3366ff" stroke="#000" stroke-width="1" stroke-dasharray="2 1.2"/><circle cx="1129.0" cy="351.0" r="2.0" fill="#7d7d6e"/><circle cx="1178.0" cy="351.5" r="4" fill="#3366ff" stroke="#000" stroke-width="1" stroke-dasharray="2 1.2"/><circle cx="1178.0" cy="351.5" r="2.0" fill="#7d7d6e"/><circle cx="1143.5" cy="366.0" r="4" fill="#3366ff" stroke="#000" stroke-width="1" stroke-dasharray="2 1.2"/><circle cx="1143.5" cy="366.0" r="2.0" fill="#7d7d6e"/><circle cx="1163.5" cy="367.0" r="4" fill="#3366ff" stroke="#000" stroke-width="1" stroke-dasharray="2 1.2"/><circle cx="1163.5" cy="367.0" r="2.0" fill="#7d7d6e"/><rect x="1200.2" y="97.5" width="227.8" height="389.0" fill="none" stroke="#808080" stroke-width="1"/><rect x="1217.0" y="97.5" width="194.8" height="387.5" fill="none" stroke="#ffff00" stroke-width="1.3"/><rect x="1233.0" y="183.4" width="161.6" height="2.0" fill="#000"/><rect x="1233.0" y="190.9" width="161.6" height="2.0" fill="#000"/><rect x="1423.5" y="183.4" width="19.0" height="2.0" fill="#000"/><rect x="1423.5" y="190.9" width="19.0" height="2.0" fill="#000"/><g shape-rendering="auto"><circle cx="1218.3" cy="188.6" r="14.7" fill="#000"/><circle cx="1218.3" cy="188.6" r="13.5" fill="#ff80ff"/><circle cx="1218.3" cy="188.6" r="9.0" fill="#fff"/><circle cx="1409.3" cy="188.6" r="14.7" fill="#000"/><circle cx="1409.3" cy="188.6" r="13.5" fill="#ff80ff"/><circle cx="1409.3" cy="188.6" r="9.0" fill="#fff"/><circle cx="1239.0" cy="226.4" r="19.6" fill="#ff80ff"/><circle cx="1239.0" cy="226.4" r="19.0" fill="#ffff00"/><circle cx="1389.0" cy="226.4" r="19.6" fill="#ff80ff"/><circle cx="1389.0" cy="226.4" r="19.0" fill="#ffff00"/></g><rect x="1216.5" y="181.5" width="5.5" height="14.0" fill="#ffff00"/><rect x="1406.7" y="181.5" width="5.6" height="14.0" fill="#ffff00"/><rect x="1441.5" y="182.5" width="30.9" height="13.2" fill="#000"/><rect x="1451.7" y="183.5" width="10.4" height="11.2" fill="#3366ff"/><rect x="1442.5" y="183.5" width="9.2" height="11.2" fill="#ff80ff"/><rect x="1445.7" y="184.5" width="6.0" height="9.2" fill="#ffff00"/><rect x="1462.2" y="183.5" width="9.2" height="11.2" fill="#8080c0"/><rect x="1462.2" y="184.5" width="5.5" height="9.2" fill="#80e880"/><rect x="1447.2" y="184.5" width="19.6" height="9.2" fill="none" stroke="#ffff00" stroke-width="1"/><rect x="1442.4" y="195.0" width="2.0" height="11.0" fill="#000"/><rect x="1449.9" y="195.0" width="2.0" height="11.0" fill="#000"/><rect x="1441.5" y="206.5" width="12.0" height="12.0" fill="#8080c0"/><rect x="1441.0" y="206.0" width="13.0" height="13.0" fill="none" stroke="#444" stroke-width="1"/><rect x="1499.0" y="207.5" width="12.7" height="11.2" fill="#8080c0"/><rect x="1498.5" y="207.0" width="13.7" height="12.2" fill="none" stroke="#444" stroke-width="1"/><text x="1435.6" y="234.5" font-size="16" fill="#c8ffff" textLength="19.0" lengthAdjust="spacingAndGlyphs" shape-rendering="auto">SH</text><text x="1487.0" y="235.0" font-size="16" fill="#c8ffff" textLength="31.0" lengthAdjust="spacingAndGlyphs" shape-rendering="auto">GND</text><text x="1530.0" y="210.0" font-size="16" fill="#c8ffff" textLength="19.5" lengthAdjust="spacingAndGlyphs" shape-rendering="auto">X6</text><path d="M1529.0 222.0 L1560.0 222.0 L1544.5 237.5Z" fill="#c8ffff"/><circle cx="1465.0" cy="176.0" r="2.0" fill="#7d7d6e"/><circle cx="1465.0" cy="200.0" r="2.0" fill="#7d7d6e"/><circle cx="1473.0" cy="247.0" r="2.0" fill="#7d7d6e"/><rect x="1538.0" y="266.0" width="24.0" height="157.0" fill="#000"/><path d="M1495.0 247.5 L1510.0 247.5 L1543.0 281.0 L1551.0 287.0" fill="none" stroke="#000" stroke-width="7.0" stroke-linejoin="round"/><path d="M1495.0 247.5 L1510.0 247.5 L1543.0 281.0 L1551.0 287.0" fill="none" stroke="#3366ff" stroke-width="2" stroke-linejoin="round"/><path d="M1551.0 317.5 L1511.0 356.0 L1511.0 368.0" fill="none" stroke="#000" stroke-width="7.0" stroke-linejoin="round"/><path d="M1551.0 317.5 L1511.0 356.0 L1511.0 368.0" fill="none" stroke="#3366ff" stroke-width="2" stroke-linejoin="round"/><path d="M1466.0 396.0 L1512.5 396.0 L1551.0 347.0" fill="none" stroke="#000" stroke-width="6.4" stroke-linejoin="round"/><path d="M1466.0 396.0 L1512.5 396.0 L1551.0 347.0" fill="none" stroke="#3366ff" stroke-width="1.2" stroke-linejoin="round"/><path d="M1466.0 407.5 L1520.0 407.5 L1551.0 377.0" fill="none" stroke="#000" stroke-width="8.4" stroke-linejoin="round"/><path d="M1466.0 407.5 L1520.0 407.5 L1551.0 377.0" fill="none" stroke="#3366ff" stroke-width="1.2" stroke-linejoin="round"/><path d="M1551.0 407.0 L1551.0 432.0" fill="none" stroke="#000" stroke-width="6" stroke-linejoin="round"/><path d="M1551.0 407.0 L1551.0 432.0" fill="none" stroke="#3366ff" stroke-width="2" stroke-linejoin="round"/><rect x="1534.0" y="241.0" width="2.0" height="184.0" fill="#c8ffff"/><rect x="1534.0" y="423.5" width="32.0" height="2.0" fill="#c8ffff"/><rect x="1534.0" y="241.0" width="14.0" height="2.0" fill="#c8ffff"/><rect x="1537.5" y="244.2" width="29.0" height="178.3" fill="none" stroke="#ffff00" stroke-width="1.2"/><g shape-rendering="auto"><rect x="1542.2" y="248.5" width="18.0" height="18.0" fill="#8080c0"/><circle cx="1551.2" cy="257.5" r="6.0" fill="#fff"/><rect x="1548.2" y="254.5" width="6.0" height="6.0" fill="#80e880"/><circle cx="1551.2" cy="287.0" r="10.0" fill="#ff80ff"/><circle cx="1551.2" cy="287.0" r="6.5" fill="#fff"/><circle cx="1551.2" cy="287.0" r="5.0" fill="#ffff00"/><circle cx="1551.2" cy="317.5" r="10.0" fill="#ff80ff"/><circle cx="1551.2" cy="317.5" r="6.5" fill="#fff"/><circle cx="1551.2" cy="317.5" r="5.0" fill="#ffff00"/><circle cx="1551.2" cy="347.0" r="10.0" fill="#ff80ff"/><circle cx="1551.2" cy="347.0" r="6.5" fill="#fff"/><circle cx="1551.2" cy="347.0" r="5.0" fill="#ffff00"/><circle cx="1551.2" cy="377.0" r="10.0" fill="#ff80ff"/><circle cx="1551.2" cy="377.0" r="6.5" fill="#fff"/><circle cx="1551.2" cy="377.0" r="5.0" fill="#ffff00"/><circle cx="1551.2" cy="407.0" r="10.0" fill="#ff80ff"/><circle cx="1551.2" cy="407.0" r="6.5" fill="#fff"/><circle cx="1551.2" cy="407.0" r="5.0" fill="#ffff00"/></g><rect x="1538.0" y="244.0" width="4.0" height="4.0" fill="#ff0000"/><text x="1553.0" y="333.0" font-size="6" fill="#ffff00" transform="rotate(-90 1553.0 333.0)" shape-rendering="auto">9X</text><rect x="1477.7" y="242.7" width="18.3" height="9.3" fill="#000"/><rect x="1478.7" y="243.7" width="16.3" height="7.3" fill="#ff80ff"/><rect x="1480.7" y="244.7" width="12.3" height="5.3" fill="#ffff00"/><rect x="1484.3" y="245.7" width="5.0" height="3.3" fill="#50501a"/><rect x="1472.7" y="369.5" width="30.8" height="14.0" fill="#000"/><rect x="1482.9" y="370.5" width="10.4" height="12.0" fill="#3366ff"/><rect x="1473.7" y="370.5" width="9.2" height="12.0" fill="#8080c0"/><rect x="1477.4" y="371.5" width="5.5" height="10.0" fill="#80e880"/><rect x="1493.3" y="370.5" width="9.2" height="12.0" fill="#ff80ff"/><rect x="1493.3" y="371.5" width="6.0" height="10.0" fill="#ffff00"/><rect x="1478.3" y="371.5" width="19.5" height="10.0" fill="none" stroke="#ffff00" stroke-width="1"/><rect x="1511.5" y="362.7" width="8.2" height="18.3" fill="#000"/><rect x="1512.5" y="363.7" width="6.2" height="16.3" fill="#ff80ff"/><rect x="1513.5" y="365.7" width="4.2" height="12.3" fill="#ffff00"/><rect x="1514.5" y="369.9" width="2.2" height="4.0" fill="#50501a"/><rect x="1448.5" y="391.0" width="18.5" height="10.0" fill="#000"/><rect x="1449.5" y="392.0" width="16.5" height="8.0" fill="#ff80ff"/><rect x="1451.5" y="393.0" width="12.5" height="6.0" fill="#ffff00"/><rect x="1455.2" y="394.0" width="5.0" height="4.0" fill="#50501a"/><rect x="1448.5" y="403.0" width="18.5" height="10.0" fill="#000"/><rect x="1449.5" y="404.0" width="16.5" height="8.0" fill="#ff80ff"/><rect x="1451.5" y="405.0" width="12.5" height="6.0" fill="#ffff00"/><rect x="1455.2" y="406.0" width="5.0" height="4.0" fill="#50501a"/><rect x="1441.0" y="423.5" width="31.0" height="13.5" fill="#000"/><rect x="1451.3" y="424.5" width="10.4" height="11.5" fill="#3366ff"/><rect x="1442.0" y="424.5" width="9.3" height="11.5" fill="#ff80ff"/><rect x="1445.2" y="425.5" width="6.0" height="9.5" fill="#ffff00"/><rect x="1461.7" y="424.5" width="9.3" height="11.5" fill="#8080c0"/><rect x="1461.7" y="425.5" width="5.6" height="9.5" fill="#80e880"/><rect x="1446.7" y="425.5" width="19.6" height="9.5" fill="none" stroke="#ffff00" stroke-width="1"/><rect x="1516.0" y="429.0" width="12.0" height="13.0" fill="#8080c0"/><rect x="1515.5" y="428.5" width="13.0" height="14.0" fill="none" stroke="#444" stroke-width="1"/><rect x="1535.0" y="429.0" width="19.0" height="10.0" fill="#000"/><rect x="1536.0" y="430.0" width="17.0" height="8.0" fill="#ff80ff"/><rect x="1538.0" y="431.0" width="13.0" height="6.0" fill="#ffff00"/><rect x="1542.0" y="432.0" width="5.0" height="4.0" fill="#50501a"/><text x="1497.5" y="459.0" font-size="16" fill="#c8ffff" textLength="27.0" lengthAdjust="spacingAndGlyphs" shape-rendering="auto">RST</text><rect x="1536.0" y="444.0" width="9.0" height="19.0" fill="#000"/><rect x="1537.0" y="445.0" width="7.0" height="17.0" fill="#ff80ff"/><rect x="1538.0" y="447.0" width="5.0" height="13.0" fill="#ffff00"/><rect x="1539.0" y="451.5" width="3.0" height="4.0" fill="#50501a"/><circle cx="1540.0" cy="466.0" r="2.0" fill="#7d7d6e"/><g shape-rendering="auto"><rect x="1245.0" y="396.7" width="18.0" height="18.0" fill="#8080c0"/><circle cx="1254.0" cy="405.7" r="6.0" fill="#fff"/><rect x="1251.0" y="402.7" width="6.0" height="6.0" fill="#80e880"/><circle cx="1278.3" cy="405.7" r="9.5" fill="#000"/><circle cx="1278.3" cy="405.7" r="8.5" fill="#ff80ff"/><circle cx="1278.3" cy="405.7" r="5.5" fill="#fff"/><rect x="1274.8" y="402.2" width="7.0" height="7.0" fill="#ffff00"/><circle cx="1302.0" cy="405.7" r="9.5" fill="#000"/><circle cx="1302.0" cy="405.7" r="8.5" fill="#ff80ff"/><circle cx="1302.0" cy="405.7" r="5.5" fill="#fff"/><rect x="1298.5" y="402.2" width="7.0" height="7.0" fill="#ffff00"/><circle cx="1326.0" cy="405.7" r="9.5" fill="#000"/><circle cx="1326.0" cy="405.7" r="8.5" fill="#ff80ff"/><circle cx="1326.0" cy="405.7" r="5.5" fill="#fff"/><rect x="1322.5" y="402.2" width="7.0" height="7.0" fill="#ffff00"/><circle cx="1349.9" cy="405.7" r="9.5" fill="#000"/><circle cx="1349.9" cy="405.7" r="8.5" fill="#ff80ff"/><circle cx="1349.9" cy="405.7" r="5.5" fill="#fff"/><rect x="1346.4" y="402.2" width="7.0" height="7.0" fill="#ffff00"/><circle cx="1373.7" cy="405.7" r="9.5" fill="#000"/><circle cx="1373.7" cy="405.7" r="8.5" fill="#ff80ff"/><circle cx="1373.7" cy="405.7" r="5.5" fill="#fff"/><rect x="1370.2" y="402.2" width="7.0" height="7.0" fill="#ffff00"/><circle cx="1242.0" cy="436.0" r="9.5" fill="#000"/><circle cx="1242.0" cy="436.0" r="8.5" fill="#ff80ff"/><circle cx="1242.0" cy="436.0" r="5.5" fill="#fff"/><rect x="1238.5" y="432.5" width="7.0" height="7.0" fill="#ffff00"/><circle cx="1266.0" cy="436.0" r="9.5" fill="#000"/><circle cx="1266.0" cy="436.0" r="8.5" fill="#ff80ff"/><circle cx="1266.0" cy="436.0" r="5.5" fill="#fff"/><rect x="1262.5" y="432.5" width="7.0" height="7.0" fill="#ffff00"/><circle cx="1290.0" cy="436.0" r="9.5" fill="#000"/><circle cx="1290.0" cy="436.0" r="8.5" fill="#ff80ff"/><circle cx="1290.0" cy="436.0" r="5.5" fill="#fff"/><rect x="1286.5" y="432.5" width="7.0" height="7.0" fill="#ffff00"/><circle cx="1337.7" cy="436.0" r="9.5" fill="#000"/><circle cx="1337.7" cy="436.0" r="8.5" fill="#ff80ff"/><circle cx="1337.7" cy="436.0" r="5.5" fill="#fff"/><rect x="1334.2" y="432.5" width="7.0" height="7.0" fill="#ffff00"/><circle cx="1361.9" cy="436.0" r="9.5" fill="#000"/><circle cx="1361.9" cy="436.0" r="8.5" fill="#ff80ff"/><circle cx="1361.9" cy="436.0" r="5.5" fill="#fff"/><rect x="1358.4" y="432.5" width="7.0" height="7.0" fill="#ffff00"/><circle cx="1385.6" cy="436.0" r="9.5" fill="#000"/><circle cx="1385.6" cy="436.0" r="8.5" fill="#ff80ff"/><circle cx="1385.6" cy="436.0" r="5.5" fill="#fff"/><rect x="1382.1" y="432.5" width="7.0" height="7.0" fill="#ffff00"/><circle cx="1242.0" cy="466.0" r="9.5" fill="#000"/><circle cx="1242.0" cy="466.0" r="8.5" fill="#ff80ff"/><circle cx="1242.0" cy="466.0" r="5.5" fill="#fff"/><rect x="1238.5" y="462.5" width="7.0" height="7.0" fill="#ffff00"/><circle cx="1272.0" cy="466.0" r="9.5" fill="#000"/><circle cx="1272.0" cy="466.0" r="8.5" fill="#ff80ff"/><circle cx="1272.0" cy="466.0" r="5.5" fill="#fff"/><rect x="1268.5" y="462.5" width="7.0" height="7.0" fill="#ffff00"/><circle cx="1355.7" cy="466.0" r="9.5" fill="#000"/><circle cx="1355.7" cy="466.0" r="8.5" fill="#ff80ff"/><circle cx="1355.7" cy="466.0" r="5.5" fill="#fff"/><rect x="1352.2" y="462.5" width="7.0" height="7.0" fill="#ffff00"/><circle cx="1385.6" cy="466.0" r="9.5" fill="#000"/><circle cx="1385.6" cy="466.0" r="8.5" fill="#ff80ff"/><circle cx="1385.6" cy="466.0" r="5.5" fill="#fff"/><rect x="1382.1" y="462.5" width="7.0" height="7.0" fill="#ffff00"/></g><path d="M1245.0 403.0 L1203.8 403.0 L1183.0 424.0" fill="none" stroke="#000" stroke-width="1.2"/><path d="M1245.0 408.6 L1203.8 408.6 L1183.0 429.6" fill="none" stroke="#000" stroke-width="1.2"/><path d="M1233.0 433.0 L1203.8 433.0 L1183.0 454.0" fill="none" stroke="#000" stroke-width="1.2"/><path d="M1233.0 438.6 L1203.8 438.6 L1183.0 459.6" fill="none" stroke="#000" stroke-width="1.2"/><path d="M1178.0 484.5 L1251.0 484.5 L1268.0 472.0" fill="none" stroke="#000" stroke-width="1.2"/><path d="M1178.0 489.5 L1253.0 489.5 L1274.0 473.0" fill="none" stroke="#000" stroke-width="1.2"/><path d="M1383.0 402.7 L1424.0 402.7 L1444.0 422.7" fill="none" stroke="#000" stroke-width="1.4"/><path d="M1383.0 408.7 L1422.0 408.7 L1442.0 428.7" fill="none" stroke="#000" stroke-width="1.4"/><path d="M1383.0 433.0 L1424.0 433.0 L1444.0 453.0" fill="none" stroke="#000" stroke-width="1.4"/><path d="M1383.0 439.0 L1422.0 439.0 L1442.0 459.0" fill="none" stroke="#000" stroke-width="1.4"/><path d="M1391.0 471.0 L1409.0 489.0 L1446.0 489.0" fill="none" stroke="#000" stroke-width="1.4"/><path d="M1388.0 475.0 L1406.0 493.0 L1446.0 493.0" fill="none" stroke="#000" stroke-width="1.4"/><path d="M1385.6 466.0 L1310.0 466.0 L1290.0 486.0" fill="none" stroke="#000" stroke-width="0"/><rect x="1153.5" y="423.0" width="31.5" height="14.5" fill="#000"/><rect x="1163.9" y="424.0" width="10.6" height="12.5" fill="#3366ff"/><rect x="1154.5" y="424.0" width="9.4" height="12.5" fill="#8080c0"/><rect x="1158.3" y="425.0" width="5.7" height="10.5" fill="#80e880"/><rect x="1174.6" y="424.0" width="9.4" height="12.5" fill="#ff80ff"/><rect x="1174.6" y="425.0" width="6.1" height="10.5" fill="#ffff00"/><rect x="1159.2" y="425.0" width="20.0" height="10.5" fill="none" stroke="#ffff00" stroke-width="1"/><rect x="1153.5" y="452.5" width="31.5" height="15.0" fill="#000"/><rect x="1163.9" y="453.5" width="10.6" height="13.0" fill="#3366ff"/><rect x="1154.5" y="453.5" width="9.4" height="13.0" fill="#8080c0"/><rect x="1158.3" y="454.5" width="5.7" height="11.0" fill="#80e880"/><rect x="1174.6" y="453.5" width="9.4" height="13.0" fill="#ff80ff"/><rect x="1174.6" y="454.5" width="6.1" height="11.0" fill="#ffff00"/><rect x="1159.2" y="454.5" width="20.0" height="11.0" fill="none" stroke="#ffff00" stroke-width="1"/><rect x="1160.3" y="484.0" width="18.4" height="9.0" fill="#000"/><rect x="1161.3" y="485.0" width="16.4" height="7.0" fill="#ff80ff"/><rect x="1163.3" y="486.0" width="12.4" height="5.0" fill="#ffff00"/><rect x="1167.0" y="487.0" width="5.0" height="3.0" fill="#50501a"/><circle cx="1163.0" cy="502.0" r="4" fill="#3366ff" stroke="#000" stroke-width="1" stroke-dasharray="2 1.2"/><circle cx="1163.0" cy="502.0" r="2.0" fill="#7d7d6e"/><rect x="1440.7" y="423.5" width="31.3" height="13.5" fill="#000"/><rect x="1451.1" y="424.5" width="10.5" height="11.5" fill="#3366ff"/><rect x="1441.7" y="424.5" width="9.4" height="11.5" fill="#ff80ff"/><rect x="1445.0" y="425.5" width="6.1" height="9.5" fill="#ffff00"/><rect x="1461.6" y="424.5" width="9.4" height="11.5" fill="#8080c0"/><rect x="1461.6" y="425.5" width="5.6" height="9.5" fill="#80e880"/><rect x="1446.4" y="425.5" width="19.9" height="9.5" fill="none" stroke="#ffff00" stroke-width="1"/><rect x="1440.7" y="453.5" width="31.3" height="13.5" fill="#000"/><rect x="1451.1" y="454.5" width="10.5" height="11.5" fill="#3366ff"/><rect x="1441.7" y="454.5" width="9.4" height="11.5" fill="#ff80ff"/><rect x="1445.0" y="455.5" width="6.1" height="9.5" fill="#ffff00"/><rect x="1461.6" y="454.5" width="9.4" height="11.5" fill="#8080c0"/><rect x="1461.6" y="455.5" width="5.6" height="9.5" fill="#80e880"/><rect x="1446.4" y="455.5" width="19.9" height="9.5" fill="none" stroke="#ffff00" stroke-width="1"/><rect x="1444.6" y="484.0" width="18.4" height="10.0" fill="#000"/><rect x="1445.6" y="485.0" width="16.4" height="8.0" fill="#ff80ff"/><rect x="1447.6" y="486.0" width="12.4" height="6.0" fill="#ffff00"/><rect x="1451.3" y="487.0" width="5.0" height="4.0" fill="#50501a"/><circle cx="1459.0" cy="499.0" r="4" fill="#3366ff" stroke="#000" stroke-width="1" stroke-dasharray="2 1.2"/><circle cx="1459.0" cy="499.0" r="2.0" fill="#7d7d6e"/><circle cx="1146.0" cy="430.0" r="2.0" fill="#7d7d6e"/><circle cx="1146.0" cy="459.0" r="2.0" fill="#7d7d6e"/><circle cx="1476.0" cy="430.0" r="2.0" fill="#7d7d6e"/><circle cx="1476.0" cy="459.0" r="2.0" fill="#7d7d6e"/><circle cx="1151.0" cy="399.0" r="2.0" fill="#7d7d6e"/><rect x="1199.4" y="537.0" width="28.2" height="15.0" fill="#000"/><path d="M1201.0 550.0 L1230.8 550.0 L1230.8 572.0 L1222.0 572.0 L1202.0 553.0Z" fill="#000"/><path d="M1204.0 551.0 L1213.0 560.0 L1231.0 560.0" fill="none" stroke="#3366ff" stroke-width="1.3"/><path d="M1214.0 551.0 L1219.0 556.0 L1231.0 556.0" fill="none" stroke="#3366ff" stroke-width="1.3"/><path d="M1224.0 551.0 L1226.0 553.0 L1231.0 553.0" fill="none" stroke="#3366ff" stroke-width="1.3"/><rect x="1200.3" y="581.0" width="27.0" height="57.5" fill="#000"/><rect x="1201.3" y="581.0" width="3.9" height="57.5" fill="#3366ff"/><rect x="1211.0" y="581.0" width="4.0" height="57.5" fill="#3366ff"/><rect x="1221.0" y="581.0" width="4.6" height="57.5" fill="#3366ff"/><path d="M1230.8 552.7 L1264.5 584.6 L1264.5 664.0 L1271.4 671.3 L1288.0 671.3 L1288.0 690.5 L1269.8 690.5 L1249.3 670.5 L1249.3 588.7 L1230.8 569.0Z" fill="#000"/><path d="M1230.8 564.9 L1253.1 587.7 L1253.1 668.9 L1270.2 685.7 L1288.0 685.7" fill="none" stroke="#3366ff" stroke-width="1.3"/><path d="M1230.8 560.9 L1256.9 586.7 L1256.9 667.2 L1270.6 680.9 L1288.0 680.9" fill="none" stroke="#3366ff" stroke-width="1.3"/><path d="M1230.8 556.8 L1260.7 585.6 L1260.7 665.6 L1271.0 676.1 L1288.0 676.1" fill="none" stroke="#3366ff" stroke-width="1.3"/><rect x="1196.0" y="541.0" width="35.0" height="40.5" fill="none" stroke="#c8ffff" stroke-width="1"/><rect x="1197.5" y="541.8" width="32.8" height="39.0" fill="none" stroke="#ffff00" stroke-width="1.2"/><rect x="1200.7" y="539.6" width="6.2" height="10.7" fill="#ffff00"/><rect x="1200.7" y="572.0" width="6.2" height="10.0" fill="#ffff00"/><rect x="1210.6" y="539.6" width="6.2" height="10.7" fill="#ffff00"/><rect x="1210.6" y="572.0" width="6.2" height="10.0" fill="#ffff00"/><rect x="1220.4" y="539.6" width="6.2" height="10.7" fill="#80e880"/><rect x="1220.4" y="572.0" width="6.2" height="10.0" fill="#ffff00"/><text x="1194.8" y="527.5" font-size="17" fill="#c8ffff" textLength="31.5" lengthAdjust="spacingAndGlyphs" shape-rendering="auto">D20</text><text x="1237.0" y="546.0" font-size="16" fill="#c8ffff" shape-rendering="auto">1</text><text x="1212.0" y="566.0" font-size="5.5" fill="#ffff00" transform="rotate(-90 1212.0 566.0)" shape-rendering="auto">D20</text><rect x="1179.0" y="632.0" width="12.7" height="27.0" fill="#000"/><rect x="1180.0" y="641.0" width="10.7" height="9.0" fill="#3366ff"/><rect x="1180.0" y="633.0" width="10.7" height="8.0" fill="#8080c0"/><rect x="1181.0" y="636.2" width="8.7" height="4.8" fill="#80e880"/><rect x="1180.0" y="650.0" width="10.7" height="8.0" fill="#ff80ff"/><rect x="1181.0" y="650.0" width="8.7" height="5.2" fill="#ffff00"/><rect x="1181.0" y="637.1" width="8.7" height="16.8" fill="none" stroke="#ffff00" stroke-width="1"/><rect x="1198.0" y="639.2" width="8.8" height="15.8" fill="#000"/><rect x="1199.0" y="640.2" width="6.8" height="13.8" fill="#ff80ff"/><rect x="1200.0" y="642.2" width="4.8" height="9.8" fill="#ffff00"/><rect x="1201.0" y="645.1" width="2.8" height="4.0" fill="#50501a"/><rect x="1209.9" y="639.2" width="8.8" height="15.8" fill="#000"/><rect x="1210.9" y="640.2" width="6.8" height="13.8" fill="#ff80ff"/><rect x="1211.9" y="642.2" width="4.8" height="9.8" fill="#ffff00"/><rect x="1212.9" y="645.1" width="2.8" height="4.0" fill="#50501a"/><rect x="1221.7" y="639.2" width="8.8" height="15.8" fill="#000"/><rect x="1222.7" y="640.2" width="6.8" height="13.8" fill="#ff80ff"/><rect x="1223.7" y="642.2" width="4.8" height="9.8" fill="#ffff00"/><rect x="1224.7" y="645.1" width="2.8" height="4.0" fill="#50501a"/><rect x="1306.7" y="533.4" width="58.7" height="2.0" fill="#000"/><rect x="1306.7" y="537.2" width="58.7" height="2.0" fill="#000"/><path d="M1389.0 534.0 L1396.0 535.0 L1402.0 541.0 L1402.0 553.0" fill="none" stroke="#000" stroke-width="1.4"/><path d="M1389.0 540.0 L1393.0 541.0 L1397.0 545.0 L1397.0 553.0" fill="none" stroke="#000" stroke-width="1.4"/><rect x="1288.5" y="525.1" width="94.2" height="71.9" fill="none" stroke="#808080" stroke-width="1"/><rect x="1281.4" y="527.7" width="26.5" height="19.5" fill="#000"/><rect x="1282.4" y="528.7" width="24.5" height="17.5" fill="#ff80ff"/><rect x="1288.4" y="533.2" width="16.5" height="9.0" fill="#ffff00"/><rect x="1364.4" y="527.7" width="26.5" height="19.5" fill="#000"/><rect x="1365.4" y="528.7" width="24.5" height="17.5" fill="#ff80ff"/><rect x="1371.4" y="533.2" width="12.0" height="9.0" fill="#ffff00"/><rect x="1281.4" y="573.6" width="26.5" height="19.5" fill="#000"/><rect x="1282.4" y="574.6" width="24.5" height="17.5" fill="#ff80ff"/><rect x="1288.4" y="579.1" width="16.5" height="9.0" fill="#ffff00"/><rect x="1364.4" y="573.6" width="26.5" height="19.5" fill="#000"/><rect x="1365.4" y="574.6" width="24.5" height="17.5" fill="#8080c0"/><rect x="1371.4" y="579.1" width="12.0" height="9.0" fill="#80e880"/><rect x="1298.0" y="523.5" width="75.0" height="73.5" fill="none" stroke="#c8ffff" stroke-width="2"/><path d="M1299.0 597.0 L1373.0 597.0 L1373.0 524.0" fill="none" stroke="#ffff00" stroke-width="1.3"/><text x="1327.2" y="514.8" font-size="16.5" fill="#c8ffff" textLength="20.0" lengthAdjust="spacingAndGlyphs" shape-rendering="auto">S2</text><text x="1335.0" y="562.0" font-size="5.5" fill="#ffff00" text-anchor="middle" shape-rendering="auto">S2</text><rect x="1394.0" y="552.3" width="10.0" height="14.5" fill="#000"/><rect x="1395.0" y="553.3" width="8.0" height="6.7" fill="#ffff00"/><rect x="1395.0" y="560.0" width="8.0" height="5.8" fill="#80e880"/><text x="1420.0" y="569.6" font-size="16.5" fill="#c8ffff" transform="rotate(-90 1420.0 569.6)" textLength="25.0" lengthAdjust="spacingAndGlyphs" shape-rendering="auto">D21</text><rect x="1434.5" y="529.5" width="104.5" height="65.0" fill="none" stroke="#808080" stroke-width="1"/><rect x="1436.8" y="522.7" width="11.0" height="30.9" fill="#000"/><rect x="1437.8" y="523.7" width="9.0" height="28.9" fill="#ff80ff"/><rect x="1439.8" y="529.8" width="5.0" height="20.5" fill="#ffff00"/><rect x="1436.8" y="568.6" width="11.0" height="31.6" fill="#000"/><rect x="1437.8" y="569.6" width="9.0" height="29.6" fill="#ff80ff"/><rect x="1439.8" y="572.4" width="5.0" height="21.1" fill="#ffff00"/><rect x="1441.3" y="512.0" width="2.0" height="11.0" fill="#000"/><circle cx="1442.3" cy="516.0" r="4" fill="#3366ff" stroke="#000" stroke-width="1" stroke-dasharray="2 1.2"/><circle cx="1442.3" cy="516.0" r="2.0" fill="#7d7d6e"/><rect x="1451.5" y="522.7" width="11.0" height="30.9" fill="#000"/><rect x="1452.5" y="523.7" width="9.0" height="28.9" fill="#ff80ff"/><rect x="1454.5" y="529.8" width="5.0" height="20.5" fill="#ffff00"/><rect x="1451.5" y="568.6" width="11.0" height="31.6" fill="#000"/><rect x="1452.5" y="569.6" width="9.0" height="29.6" fill="#ff80ff"/><rect x="1454.5" y="572.4" width="5.0" height="21.1" fill="#ffff00"/><rect x="1456.0" y="512.0" width="2.0" height="11.0" fill="#000"/><circle cx="1457.0" cy="516.0" r="4" fill="#3366ff" stroke="#000" stroke-width="1" stroke-dasharray="2 1.2"/><circle cx="1457.0" cy="516.0" r="2.0" fill="#7d7d6e"/><rect x="1456.0" y="600.0" width="2.0" height="10.0" fill="#000"/><circle cx="1457.0" cy="607.5" r="4" fill="#3366ff" stroke="#000" stroke-width="1" stroke-dasharray="2 1.2"/><circle cx="1457.0" cy="607.5" r="2.0" fill="#7d7d6e"/><rect x="1466.5" y="522.7" width="11.0" height="30.9" fill="#000"/><rect x="1467.5" y="523.7" width="9.0" height="28.9" fill="#ff80ff"/><rect x="1469.5" y="529.8" width="5.0" height="20.5" fill="#ffff00"/><rect x="1466.5" y="568.6" width="11.0" height="31.6" fill="#000"/><rect x="1467.5" y="569.6" width="9.0" height="29.6" fill="#ff80ff"/><rect x="1469.5" y="572.4" width="5.0" height="21.1" fill="#ffff00"/><rect x="1471.0" y="512.0" width="2.0" height="11.0" fill="#000"/><circle cx="1472.0" cy="516.0" r="4" fill="#3366ff" stroke="#000" stroke-width="1" stroke-dasharray="2 1.2"/><circle cx="1472.0" cy="516.0" r="2.0" fill="#7d7d6e"/><rect x="1471.0" y="600.0" width="2.0" height="10.0" fill="#000"/><circle cx="1472.0" cy="607.5" r="4" fill="#3366ff" stroke="#000" stroke-width="1" stroke-dasharray="2 1.2"/><circle cx="1472.0" cy="607.5" r="2.0" fill="#7d7d6e"/><rect x="1481.2" y="522.7" width="11.0" height="30.9" fill="#000"/><rect x="1482.2" y="523.7" width="9.0" height="28.9" fill="#ff80ff"/><rect x="1484.2" y="529.8" width="5.0" height="20.5" fill="#ffff00"/><rect x="1481.2" y="568.6" width="11.0" height="31.6" fill="#000"/><rect x="1482.2" y="569.6" width="9.0" height="29.6" fill="#ff80ff"/><rect x="1484.2" y="572.4" width="5.0" height="21.1" fill="#ffff00"/><rect x="1485.7" y="512.0" width="2.0" height="11.0" fill="#000"/><circle cx="1486.7" cy="516.0" r="4" fill="#3366ff" stroke="#000" stroke-width="1" stroke-dasharray="2 1.2"/><circle cx="1486.7" cy="516.0" r="2.0" fill="#7d7d6e"/><rect x="1485.7" y="600.0" width="2.0" height="10.0" fill="#000"/><circle cx="1486.7" cy="607.5" r="4" fill="#3366ff" stroke="#000" stroke-width="1" stroke-dasharray="2 1.2"/><circle cx="1486.7" cy="607.5" r="2.0" fill="#7d7d6e"/><rect x="1496.0" y="522.7" width="11.0" height="30.9" fill="#000"/><rect x="1497.0" y="523.7" width="9.0" height="28.9" fill="#ff80ff"/><rect x="1499.0" y="529.8" width="5.0" height="20.5" fill="#ffff00"/><rect x="1496.0" y="568.6" width="11.0" height="31.6" fill="#000"/><rect x="1497.0" y="569.6" width="9.0" height="29.6" fill="#ff80ff"/><rect x="1499.0" y="572.4" width="5.0" height="21.1" fill="#ffff00"/><rect x="1510.8" y="522.7" width="11.0" height="30.9" fill="#000"/><rect x="1511.8" y="523.7" width="9.0" height="28.9" fill="#ff80ff"/><rect x="1513.8" y="529.8" width="5.0" height="20.5" fill="#ffff00"/><rect x="1510.8" y="568.6" width="11.0" height="31.6" fill="#000"/><rect x="1511.8" y="569.6" width="9.0" height="29.6" fill="#ff80ff"/><rect x="1513.8" y="572.4" width="5.0" height="21.1" fill="#ffff00"/><rect x="1515.3" y="512.0" width="2.0" height="11.0" fill="#000"/><circle cx="1516.3" cy="516.0" r="4" fill="#3366ff" stroke="#000" stroke-width="1" stroke-dasharray="2 1.2"/><circle cx="1516.3" cy="516.0" r="2.0" fill="#7d7d6e"/><rect x="1515.3" y="600.0" width="2.0" height="10.0" fill="#000"/><circle cx="1516.3" cy="607.5" r="4" fill="#3366ff" stroke="#000" stroke-width="1" stroke-dasharray="2 1.2"/><circle cx="1516.3" cy="607.5" r="2.0" fill="#7d7d6e"/><rect x="1526.0" y="522.7" width="11.0" height="30.9" fill="#000"/><rect x="1527.0" y="523.7" width="9.0" height="28.9" fill="#ff80ff"/><rect x="1529.0" y="529.8" width="5.0" height="20.5" fill="#80e880"/><rect x="1526.0" y="568.6" width="11.0" height="31.6" fill="#000"/><rect x="1527.0" y="569.6" width="9.0" height="29.6" fill="#ff80ff"/><rect x="1529.0" y="572.4" width="5.0" height="21.1" fill="#ffff00"/><rect x="1530.5" y="512.0" width="2.0" height="11.0" fill="#000"/><circle cx="1531.5" cy="516.0" r="4" fill="#3366ff" stroke="#000" stroke-width="1" stroke-dasharray="2 1.2"/><circle cx="1531.5" cy="516.0" r="2.0" fill="#7d7d6e"/><rect x="1530.5" y="600.0" width="2.0" height="10.0" fill="#000"/><circle cx="1531.5" cy="607.5" r="4" fill="#3366ff" stroke="#000" stroke-width="1" stroke-dasharray="2 1.2"/><circle cx="1531.5" cy="607.5" r="2.0" fill="#7d7d6e"/><circle cx="1501.5" cy="516.0" r="2.0" fill="#7d7d6e"/><circle cx="1442.3" cy="607.0" r="2.0" fill="#7d7d6e"/><rect x="1434.5" y="543.3" width="104.5" height="38.2" fill="none" stroke="#ffff00" stroke-width="1.2"/><g shape-rendering="auto"><path d="M1441.6 552.0 L1449.6 557.0 L1457.6 552.0 L1454.6 562.0 L1457.6 571.0 L1449.6 566.0 L1441.6 571.0 L1444.6 562.0Z" fill="#000"/><circle cx="1449.6" cy="561.7" r="4.8" fill="#ffff00"/><path d="M1516.3 552.0 L1524.3 557.0 L1532.3 552.0 L1529.3 562.0 L1532.3 571.0 L1524.3 566.0 L1516.3 571.0 L1519.3 562.0Z" fill="#000"/><circle cx="1524.3" cy="561.7" r="4.8" fill="#ffff00"/></g><rect x="1534.0" y="543.0" width="5.0" height="5.0" fill="#ff0000"/><rect x="1539.5" y="522.0" width="1.2" height="17.0" fill="#c8ffff"/><text x="1475.8" y="505.0" font-size="16.5" fill="#c8ffff" textLength="24.0" lengthAdjust="spacingAndGlyphs" shape-rendering="auto">X11</text><text x="1530.0" y="508.0" font-size="16" fill="#c8ffff" shape-rendering="auto">1</text><text x="1479.0" y="564.0" font-size="5.5" fill="#808080" shape-rendering="auto">X11</text><text x="1395.0" y="628.3" font-size="16" fill="#c8ffff" textLength="32.0" lengthAdjust="spacingAndGlyphs" shape-rendering="auto">GND</text><rect x="1435.3" y="616.7" width="12.7" height="12.5" fill="#8080c0"/><rect x="1434.8" y="616.2" width="13.7" height="13.5" fill="none" stroke="#444" stroke-width="1"/><rect x="1497.0" y="601.0" width="10.0" height="15.0" fill="#000"/><rect x="1495.7" y="613.0" width="12.9" height="30.4" fill="#000"/><rect x="1496.7" y="623.1" width="10.9" height="10.2" fill="#3366ff"/><rect x="1496.7" y="614.0" width="10.9" height="9.1" fill="#ff80ff"/><rect x="1497.7" y="617.2" width="8.9" height="5.9" fill="#ffff00"/><rect x="1496.7" y="633.3" width="10.9" height="9.1" fill="#8080c0"/><rect x="1497.7" y="633.3" width="8.9" height="5.5" fill="#80e880"/><rect x="1497.7" y="618.6" width="8.9" height="19.2" fill="none" stroke="#ffff00" stroke-width="1"/><path d="M1489.0 611.0 L1470.0 628.0 L1470.0 702.0 L1405.5 720.0 L1206.0 720.0 L1187.0 703.0 L1187.0 655.0" fill="none" stroke="#000" stroke-width="0"/><path d="M1141.0 645.0 L1155.0 656.0 L1178.7 656.0 L1178.7 705.0 L1202.5 729.5 L1409.5 729.5 L1479.5 657.0 L1479.5 633.0 L1493.0 622.0" fill="none" stroke="#000" stroke-width="2"/><path d="M1141.0 635.5 L1156.0 647.5 L1180.0 647.5" fill="none" stroke="#000" stroke-width="1.5"/><path d="M1187.0 655.0 L1187.0 703.0 L1206.0 720.0 L1405.5 720.0 L1470.5 655.0 L1470.5 628.0 L1485.0 613.0" fill="none" stroke="#000" stroke-width="2"/><rect x="1293.5" y="653.5" width="75.5" height="58.0" fill="none" stroke="#808080" stroke-width="1"/><rect x="1288.0" y="651.8" width="17.0" height="6.4" fill="#ff80ff"/><rect x="1293.0" y="653.4" width="10.0" height="3.2" fill="#80e880"/><rect x="1357.0" y="651.8" width="17.0" height="6.4" fill="#ff80ff"/><rect x="1359.0" y="653.4" width="10.0" height="3.2" fill="#ffff00"/><rect x="1288.0" y="659.4" width="17.0" height="6.4" fill="#ff80ff"/><rect x="1293.0" y="661.0" width="10.0" height="3.2" fill="#ffff00"/><rect x="1357.0" y="659.4" width="17.0" height="6.4" fill="#ff80ff"/><rect x="1359.0" y="661.0" width="10.0" height="3.2" fill="#ffff00"/><rect x="1288.0" y="666.9" width="17.0" height="6.4" fill="#ff80ff"/><rect x="1293.0" y="668.5" width="10.0" height="3.2" fill="#ffff00"/><rect x="1357.0" y="666.9" width="17.0" height="6.4" fill="#ff80ff"/><rect x="1359.0" y="668.5" width="10.0" height="3.2" fill="#ffff00"/><rect x="1288.0" y="674.5" width="17.0" height="6.4" fill="#ff80ff"/><rect x="1293.0" y="676.1" width="10.0" height="3.2" fill="#ffff00"/><rect x="1357.0" y="674.5" width="17.0" height="6.4" fill="#ff80ff"/><rect x="1359.0" y="676.1" width="10.0" height="3.2" fill="#ffff00"/><rect x="1288.0" y="682.1" width="17.0" height="6.4" fill="#ff80ff"/><rect x="1293.0" y="683.7" width="10.0" height="3.2" fill="#ffff00"/><rect x="1357.0" y="682.1" width="17.0" height="6.4" fill="#ff80ff"/><rect x="1359.0" y="683.7" width="10.0" height="3.2" fill="#ffff00"/><rect x="1288.0" y="689.6" width="17.0" height="6.4" fill="#ff80ff"/><rect x="1293.0" y="691.2" width="10.0" height="3.2" fill="#ffff00"/><rect x="1357.0" y="689.6" width="17.0" height="6.4" fill="#ff80ff"/><rect x="1359.0" y="691.2" width="10.0" height="3.2" fill="#ffff00"/><rect x="1288.0" y="697.2" width="17.0" height="6.4" fill="#ff80ff"/><rect x="1293.0" y="698.8" width="10.0" height="3.2" fill="#ffff00"/><rect x="1357.0" y="697.2" width="17.0" height="6.4" fill="#ff80ff"/><rect x="1359.0" y="698.8" width="10.0" height="3.2" fill="#ffff00"/><rect x="1288.0" y="704.8" width="17.0" height="6.4" fill="#ff80ff"/><rect x="1293.0" y="706.4" width="10.0" height="3.2" fill="#ffff00"/><rect x="1357.0" y="704.8" width="17.0" height="6.4" fill="#ff80ff"/><rect x="1359.0" y="706.4" width="10.0" height="3.2" fill="#ffff00"/><rect x="1305.5" y="652.5" width="51.0" height="58.0" fill="none" stroke="#ffff00" stroke-width="1.3"/><rect x="1305.0" y="651.0" width="52.0" height="1.2" fill="#c8ffff"/><rect x="1305.5" y="653.0" width="5.5" height="5.0" fill="#ff0000"/><text x="1315.0" y="729.5" font-size="16" fill="#c8ffff" textLength="30.0" lengthAdjust="spacingAndGlyphs" shape-rendering="auto">U10</text><text x="1333.0" y="690.0" font-size="5.5" fill="#ffff00" transform="rotate(-90 1333.0 690.0)" shape-rendering="auto">U10</text><rect x="1386.0" y="653.0" width="18.0" height="10.0" fill="#000"/><rect x="1387.0" y="654.0" width="16.0" height="8.0" fill="#ff80ff"/><rect x="1389.0" y="655.0" width="12.0" height="6.0" fill="#ffff00"/><rect x="1392.5" y="656.0" width="5.0" height="4.0" fill="#50501a"/><rect x="1386.0" y="664.0" width="18.0" height="10.0" fill="#000"/><rect x="1387.0" y="665.0" width="16.0" height="8.0" fill="#ff80ff"/><rect x="1389.0" y="666.0" width="12.0" height="6.0" fill="#ffff00"/><rect x="1392.5" y="667.0" width="5.0" height="4.0" fill="#50501a"/><rect x="1386.0" y="676.5" width="18.0" height="10.0" fill="#000"/><rect x="1387.0" y="677.5" width="16.0" height="8.0" fill="#ff80ff"/><rect x="1389.0" y="678.5" width="12.0" height="6.0" fill="#ffff00"/><rect x="1392.5" y="679.5" width="5.0" height="4.0" fill="#50501a"/><rect x="1386.0" y="688.0" width="18.0" height="10.0" fill="#000"/><rect x="1387.0" y="689.0" width="16.0" height="8.0" fill="#ff80ff"/><rect x="1389.0" y="690.0" width="12.0" height="6.0" fill="#ffff00"/><rect x="1392.5" y="691.0" width="5.0" height="4.0" fill="#50501a"/><rect x="1386.0" y="699.7" width="18.0" height="10.0" fill="#000"/><rect x="1387.0" y="700.7" width="16.0" height="8.0" fill="#ff80ff"/><rect x="1389.0" y="701.7" width="12.0" height="6.0" fill="#ffff00"/><rect x="1392.5" y="702.7" width="5.0" height="4.0" fill="#50501a"/><rect x="1374.0" y="662.0" width="13.0" height="2.0" fill="#000"/><rect x="1374.0" y="670.0" width="13.0" height="2.0" fill="#000"/><rect x="1374.0" y="684.0" width="13.0" height="2.0" fill="#000"/><rect x="1374.0" y="692.0" width="13.0" height="2.0" fill="#000"/><path d="M1334.0 655.0 L1347.0 668.0 L1357.0 668.0" fill="none" stroke="#000" stroke-width="1.5"/><circle cx="1388.5" cy="648.0" r="4" fill="#3366ff" stroke="#000" stroke-width="1" stroke-dasharray="2 1.2"/><circle cx="1388.5" cy="648.0" r="2.0" fill="#7d7d6e"/><circle cx="1388.5" cy="713.0" r="4" fill="#3366ff" stroke="#000" stroke-width="1" stroke-dasharray="2 1.2"/><circle cx="1388.5" cy="713.0" r="2.0" fill="#7d7d6e"/><circle cx="1407.0" cy="668.0" r="2.0" fill="#7d7d6e"/><circle cx="1408.0" cy="680.0" r="2.0" fill="#7d7d6e"/><circle cx="1408.0" cy="691.0" r="2.0" fill="#7d7d6e"/><rect x="1322.7" y="637.0" width="17.0" height="9.0" fill="#000"/><rect x="1323.7" y="638.0" width="15.0" height="7.0" fill="#ff80ff"/><rect x="1325.7" y="639.0" width="11.0" height="5.0" fill="#ffff00"/><rect x="1328.7" y="640.0" width="5.0" height="3.0" fill="#50501a"/><rect x="1315.5" y="619.8" width="30.9" height="13.4" fill="#000"/><rect x="1325.7" y="620.8" width="10.4" height="11.4" fill="#3366ff"/><rect x="1316.5" y="620.8" width="9.2" height="11.4" fill="#8080c0"/><rect x="1320.2" y="621.8" width="5.5" height="9.4" fill="#80e880"/><rect x="1336.2" y="620.8" width="9.2" height="11.4" fill="#ff80ff"/><rect x="1336.2" y="621.8" width="6.0" height="9.4" fill="#ffff00"/><rect x="1321.2" y="621.8" width="19.6" height="9.4" fill="none" stroke="#ffff00" stroke-width="1"/><circle cx="1355.0" cy="627.0" r="4" fill="#3366ff" stroke="#000" stroke-width="1" stroke-dasharray="2 1.2"/><circle cx="1355.0" cy="627.0" r="2.0" fill="#7d7d6e"/><circle cx="1335.0" cy="614.0" r="2.0" fill="#7d7d6e"/><g shape-rendering="auto"><path d="M1224.4 753.0 L1221.0 747.3 L1214.2 741.6 L1205.1 735.9 L1196.0 732.5 L1186.9 731.4 L1177.8 732.3 L1168.7 735.4 L1159.6 741.0 L1151.6 749.0 L1145.9 758.7 L1142.3 768.9 L1141.4 779.2 L1142.5 789.4 L1145.9 799.6 L1151.6 808.7 L1159.6 816.1 L1168.7 821.3 L1177.8 824.1 L1189.2 824.7 L1198.3 823.5 L1207.4 820.1 L1214.2 815.6 L1219.3 809.9 L1218.7 807.0 L1214.2 809.9 L1207.4 813.3 L1200.5 815.0 L1193.7 814.4 L1184.6 812.4 L1175.5 807.6 L1167.5 799.6 L1162.4 790.5 L1160.1 780.3 L1161.3 770.1 L1164.7 761.0 L1171.0 753.0 L1178.9 746.7 L1186.9 743.9 L1194.8 743.3 L1202.8 744.5 L1209.6 747.3 L1216.5 751.3 L1223.5 755.0Z" fill="#c8ffff" stroke="#c8ffff" stroke-width=".6" stroke-linejoin="round"/><path d="M1174.4 737.1 L1176.6 744.5 L1167.5 749.6 L1159.6 757.5 L1153.9 767.8 L1151.0 779.2 L1152.2 790.5 L1156.7 800.8 L1164.1 809.9 L1174.4 816.7 L1184.6 820.1 L1196.0 820.7 L1208.5 816.7 L1209.6 819.5" fill="none" stroke="#3366ff" stroke-width=".9"/><path d="M1176.6 740.5 L1189.2 737.1 L1202.8 738.8 L1214.2 744.5 L1222.7 751.9" fill="none" stroke="#3366ff" stroke-width=".9"/></g><g stroke="#c8ffff" stroke-width="1.1"><text x="1179.5" y="788.8" font-size="23.7" fill="#c8ffff" font-weight="bold" textLength="61.5" lengthAdjust="spacingAndGlyphs" shape-rendering="auto">NOVA</text></g><g stroke="#c8ffff" stroke-width=".7"><text x="1241.0" y="788.8" font-size="23.7" fill="#c8ffff" textLength="67.0" lengthAdjust="spacingAndGlyphs" shape-rendering="auto">TRACE</text></g><text x="1347.0" y="788.0" font-size="22.5" fill="#c8ffff" textLength="77.0" lengthAdjust="spacingAndGlyphs" shape-rendering="auto">250819</text><text x="1463.7" y="788.0" font-size="22.5" fill="#c8ffff" textLength="21.0" lengthAdjust="spacingAndGlyphs" shape-rendering="auto">1.1</text><rect x="1330.0" y="805.5" width="24.5" height="6.5" fill="#000"/><rect x="1334.5" y="812.0" width="8.2" height="10.0" fill="#000"/><rect x="1346.0" y="812.0" width="4.0" height="10.0" fill="#000"/><rect x="1334.5" y="838.0" width="8.2" height="10.0" fill="#000"/><rect x="1346.0" y="838.0" width="4.0" height="10.0" fill="#000"/><rect x="1332.7" y="848.0" width="4.8" height="24.0" fill="#000"/><rect x="1340.0" y="848.0" width="8.0" height="24.0" fill="#000"/><rect x="1331.0" y="853.0" width="25.0" height="5.0" fill="#000"/><path d="M1333.0 805.5 L1338.0 797.0 L1343.0 805.5Z" fill="#000"/><path d="M1355.0 851.0 L1362.0 848.0 L1366.0 843.5" fill="none" stroke="#000" stroke-width="1.5"/><path d="M1372.0 840.0 L1380.0 838.0" fill="none" stroke="#000" stroke-width="3"/><path d="M1310.0 862.0 L1318.0 862.0" fill="none" stroke="#000" stroke-width="4"/><path d="M1354.0 862.7 L1362.0 862.7" fill="none" stroke="#000" stroke-width="4"/><path d="M1330.0 868.0 L1340.0 868.0" fill="none" stroke="#000" stroke-width="4"/><rect x="1332.7" y="821.8" width="18.3" height="16.2" fill="#ffff00"/><path d="M1347.0 821.8 L1351.0 821.8 L1351.0 825.5Z" fill="#3366ff"/><rect x="1332.0" y="807.7" width="3.2" height="3.6" fill="#ff80ff"/><rect x="1332.0" y="813.0" width="3.2" height="4.0" fill="#ffff00"/><rect x="1332.0" y="843.0" width="3.2" height="4.5" fill="#ffff00"/><rect x="1332.0" y="849.0" width="3.2" height="3.3" fill="#ff80ff"/><rect x="1338.0" y="807.7" width="3.2" height="3.6" fill="#ff80ff"/><rect x="1338.0" y="813.0" width="3.2" height="4.0" fill="#ffff00"/><rect x="1338.0" y="843.0" width="3.2" height="4.5" fill="#ffff00"/><rect x="1338.0" y="849.0" width="3.2" height="3.3" fill="#ff80ff"/><rect x="1343.8" y="807.7" width="3.2" height="3.6" fill="#ff80ff"/><rect x="1343.8" y="813.0" width="3.2" height="4.0" fill="#ffff00"/><rect x="1343.8" y="843.0" width="3.2" height="4.5" fill="#ffff00"/><rect x="1343.8" y="849.0" width="3.2" height="3.3" fill="#ff80ff"/><rect x="1349.7" y="807.7" width="3.2" height="3.6" fill="#8080c0"/><rect x="1349.7" y="813.0" width="3.2" height="4.0" fill="#ffff00"/><rect x="1349.7" y="843.0" width="3.2" height="4.5" fill="#ffff00"/><rect x="1349.7" y="849.0" width="3.2" height="3.3" fill="#ff80ff"/><rect x="1328.5" y="811.5" width="1.5" height="37.0" fill="#c8ffff"/><rect x="1329.8" y="812.5" width="25.0" height="35.3" fill="none" stroke="#ffff00" stroke-width="1.4"/><rect x="1348.0" y="813.0" width="5.6" height="4.7" fill="#ff0000"/><text x="1296.7" y="833.5" font-size="17" fill="#c8ffff" textLength="21.5" lengthAdjust="spacingAndGlyphs" shape-rendering="auto">U5</text><rect x="1360.0" y="814.0" width="13.0" height="30.6" fill="#000"/><rect x="1361.0" y="815.0" width="10.8" height="5.5" fill="#8080c0"/><rect x="1361.0" y="820.5" width="10.8" height="5.5" fill="#80e880"/><rect x="1361.0" y="826.0" width="10.8" height="12.0" fill="#ffff00"/><rect x="1361.0" y="838.0" width="10.8" height="5.6" fill="#ff80ff"/><rect x="1363.0" y="821.5" width="7.0" height="14.0" fill="none" stroke="#ffff00" stroke-width="1"/><rect x="1364.0" y="826.0" width="5.0" height="7.0" fill="#8080c0"/><rect x="1316.3" y="859.0" width="17.4" height="8.4" fill="#000"/><rect x="1317.3" y="860.0" width="15.4" height="6.4" fill="#ff80ff"/><rect x="1319.3" y="861.0" width="11.4" height="4.4" fill="#ffff00"/><rect x="1322.5" y="862.0" width="5.0" height="2.4" fill="#50501a"/><rect x="1337.0" y="859.0" width="19.0" height="8.4" fill="#000"/><rect x="1338.0" y="860.0" width="17.0" height="6.4" fill="#ff80ff"/><rect x="1340.0" y="861.0" width="13.0" height="4.4" fill="#ffff00"/><rect x="1344.0" y="862.0" width="5.0" height="2.4" fill="#50501a"/><circle cx="1338.0" cy="801.0" r="4" fill="#3366ff" stroke="#000" stroke-width="1" stroke-dasharray="2 1.2"/><circle cx="1338.0" cy="801.0" r="2.0" fill="#7d7d6e"/><circle cx="1310.0" cy="861.8" r="4" fill="#3366ff" stroke="#000" stroke-width="1" stroke-dasharray="2 1.2"/><circle cx="1310.0" cy="861.8" r="2.0" fill="#7d7d6e"/><circle cx="1360.0" cy="862.7" r="4" fill="#3366ff" stroke="#000" stroke-width="1" stroke-dasharray="2 1.2"/><circle cx="1360.0" cy="862.7" r="2.0" fill="#7d7d6e"/><circle cx="1329.0" cy="871.0" r="4" fill="#3366ff" stroke="#000" stroke-width="1" stroke-dasharray="2 1.2"/><circle cx="1329.0" cy="871.0" r="2.0" fill="#7d7d6e"/><circle cx="1339.8" cy="871.0" r="4" fill="#3366ff" stroke="#000" stroke-width="1" stroke-dasharray="2 1.2"/><circle cx="1339.8" cy="871.0" r="2.0" fill="#7d7d6e"/><circle cx="1379.0" cy="838.0" r="4" fill="#3366ff" stroke="#000" stroke-width="1" stroke-dasharray="2 1.2"/><circle cx="1379.0" cy="838.0" r="2.0" fill="#7d7d6e"/><circle cx="1404.0" cy="835.0" r="4" fill="#3366ff" stroke="#000" stroke-width="1" stroke-dasharray="2 1.2"/><circle cx="1404.0" cy="835.0" r="2.0" fill="#7d7d6e"/><rect x="1477.0" y="849.5" width="57.0" height="56.5" fill="#000"/><rect x="1478.0" y="850.5" width="55.0" height="54.5" fill="#ffff00"/><rect x="1478.0" y="850.5" width="1.2" height="54.5" fill="#80ffff"/><path d="M1530.0 764.0 L1512.0 764.0 L1506.0 778.0 L1508.0 795.0 L1520.0 806.0 L1507.0 808.0 L1507.0 837.0 L1522.0 837.0 L1522.0 842.0 L1513.0 842.0 L1513.0 850.0" fill="none" stroke="#ffff00" stroke-width="1"/><path d="M1530.0 764.0 L1530.0 832.0 L1529.0 837.0 L1529.0 843.0 L1543.0 843.0 L1543.0 829.0 L1546.0 829.0 L1546.0 905.0 L1533.0 918.0 L1533.0 997.0" fill="none" stroke="#ffff00" stroke-width="1"/><path d="M1521.6 905.0 L1521.6 997.0" fill="none" stroke="#ffff00" stroke-width="1"/><rect x="1521.5" y="918.5" width="13.0" height="78.0" fill="none" stroke="#c8ffff" stroke-width="1"/><path d="M1498.0 976.0 L1521.6 976.0" fill="none" stroke="#c8ffff" stroke-width="1"/><path d="M1502.0 976.0 L1502.0 997.0 L1546.0 997.0 L1546.0 1078.0 L1498.0 1078.0" fill="none" stroke="#ffff00" stroke-width="1"/><path d="M1520.5 631.5 L1520.5 764.0 L1543.5 764.0 L1543.5 1078.0" fill="none" stroke="#808080" stroke-width="1"/><path d="M1498.0 1063.5 L1511.0 1063.5 L1511.0 1077.0" fill="none" stroke="#c8ffff" stroke-width="1"/><path d="M1532.5 815.0 L1555.0 815.0" fill="none" stroke="#2a5af0" stroke-width="1.6"/><path d="M1555.0 810.0 L1555.0 820.0" fill="none" stroke="#2a5af0" stroke-width="1.6"/><text x="1559.0" y="981.0" font-size="13.5" fill="#c8ffff" transform="rotate(-90 1559.0 981.0)" textLength="25.0" lengthAdjust="spacingAndGlyphs" shape-rendering="auto">200</text><text x="1559.0" y="1077.0" font-size="13.5" fill="#c8ffff" transform="rotate(-90 1559.0 1077.0)" textLength="23.0" lengthAdjust="spacingAndGlyphs" shape-rendering="auto">199</text><g shape-rendering="auto"><circle cx="1515.5" cy="1019.5" r="7.5" fill="#fff"/><circle cx="1515.5" cy="1019.5" r="6.0" fill="#ffff00"/><circle cx="727.0" cy="1019.0" r="10.5" fill="#000"/><circle cx="727.0" cy="1019.0" r="9.7" fill="#fff"/><circle cx="727.0" cy="1019.0" r="8.2" fill="#ffff00"/></g><path d="M757.0 940.0 L816.0 940.0 L816.0 958.0 L748.0 958.0Z" fill="#000"/><path d="M757.0 940.0 L836.5 940.0 L855.0 958.0" fill="none" stroke="#000" stroke-width="1.5"/><path d="M757.0 940.0 L735.5 954.5 L735.5 967.5 L748.0 980.0" fill="none" stroke="#000" stroke-width="1.5"/><rect x="747.5" y="957.0" width="140.9" height="27.5" fill="#000"/><path d="M749.00 958.0h4.2v25.5h-4.2zM756.02 958.0h4.2v25.5h-4.2zM763.04 958.0h4.2v25.5h-4.2zM770.06 958.0h4.2v25.5h-4.2zM777.08 958.0h4.2v25.5h-4.2zM784.10 958.0h4.2v25.5h-4.2zM791.12 958.0h4.2v25.5h-4.2zM798.14 958.0h4.2v25.5h-4.2zM805.16 958.0h4.2v25.5h-4.2zM812.18 958.0h4.2v25.5h-4.2zM819.20 958.0h4.2v25.5h-4.2zM826.22 958.0h4.2v25.5h-4.2zM833.24 958.0h4.2v25.5h-4.2zM840.26 958.0h4.2v25.5h-4.2zM847.28 958.0h4.2v25.5h-4.2zM854.30 958.0h4.2v25.5h-4.2zM861.32 958.0h4.2v25.5h-4.2zM868.34 958.0h4.2v25.5h-4.2zM875.36 958.0h4.2v25.5h-4.2zM882.38 958.0h4.2v25.5h-4.2z" fill="#ff80ff"/><path d="M750.40 965.0h1.4v10.5h-1.4zM757.42 965.0h1.4v10.5h-1.4zM764.44 965.0h1.4v10.5h-1.4zM771.46 965.0h1.4v10.5h-1.4zM778.48 965.0h1.4v10.5h-1.4zM785.50 965.0h1.4v10.5h-1.4zM792.52 965.0h1.4v10.5h-1.4zM799.54 965.0h1.4v10.5h-1.4zM806.56 965.0h1.4v10.5h-1.4zM813.58 965.0h1.4v10.5h-1.4zM820.60 965.0h1.4v10.5h-1.4zM827.62 965.0h1.4v10.5h-1.4zM834.64 965.0h1.4v10.5h-1.4zM841.66 965.0h1.4v10.5h-1.4zM848.68 965.0h1.4v10.5h-1.4zM855.70 965.0h1.4v10.5h-1.4zM862.72 965.0h1.4v10.5h-1.4zM869.74 965.0h1.4v10.5h-1.4zM876.76 965.0h1.4v10.5h-1.4zM883.78 965.0h1.4v10.5h-1.4z" fill="#80ffff"/><rect x="931.5" y="957.0" width="565.7" height="27.5" fill="#000"/><path d="M933.00 958.0h4.2v25.5h-4.2zM940.07 958.0h4.2v25.5h-4.2zM947.13 958.0h4.2v25.5h-4.2zM954.20 958.0h4.2v25.5h-4.2zM961.26 958.0h4.2v25.5h-4.2zM968.33 958.0h4.2v25.5h-4.2zM975.39 958.0h4.2v25.5h-4.2zM982.46 958.0h4.2v25.5h-4.2zM989.52 958.0h4.2v25.5h-4.2zM996.59 958.0h4.2v25.5h-4.2zM1003.65 958.0h4.2v25.5h-4.2zM1010.72 958.0h4.2v25.5h-4.2zM1017.78 958.0h4.2v25.5h-4.2zM1024.85 958.0h4.2v25.5h-4.2zM1031.91 958.0h4.2v25.5h-4.2zM1038.97 958.0h4.2v25.5h-4.2zM1046.04 958.0h4.2v25.5h-4.2zM1053.11 958.0h4.2v25.5h-4.2zM1060.17 958.0h4.2v25.5h-4.2zM1067.24 958.0h4.2v25.5h-4.2zM1074.30 958.0h4.2v25.5h-4.2zM1081.37 958.0h4.2v25.5h-4.2zM1088.43 958.0h4.2v25.5h-4.2zM1095.49 958.0h4.2v25.5h-4.2zM1102.56 958.0h4.2v25.5h-4.2zM1109.62 958.0h4.2v25.5h-4.2zM1116.69 958.0h4.2v25.5h-4.2zM1123.76 958.0h4.2v25.5h-4.2zM1130.82 958.0h4.2v25.5h-4.2zM1137.88 958.0h4.2v25.5h-4.2zM1144.95 958.0h4.2v25.5h-4.2zM1152.02 958.0h4.2v25.5h-4.2zM1159.08 958.0h4.2v25.5h-4.2zM1166.14 958.0h4.2v25.5h-4.2zM1173.21 958.0h4.2v25.5h-4.2zM1180.28 958.0h4.2v25.5h-4.2zM1187.34 958.0h4.2v25.5h-4.2zM1194.40 958.0h4.2v25.5h-4.2zM1201.47 958.0h4.2v25.5h-4.2zM1208.54 958.0h4.2v25.5h-4.2zM1215.60 958.0h4.2v25.5h-4.2zM1222.66 958.0h4.2v25.5h-4.2zM1229.73 958.0h4.2v25.5h-4.2zM1236.80 958.0h4.2v25.5h-4.2zM1243.86 958.0h4.2v25.5h-4.2zM1250.92 958.0h4.2v25.5h-4.2zM1257.99 958.0h4.2v25.5h-4.2zM1265.06 958.0h4.2v25.5h-4.2zM1272.12 958.0h4.2v25.5h-4.2zM1279.18 958.0h4.2v25.5h-4.2zM1286.25 958.0h4.2v25.5h-4.2zM1293.32 958.0h4.2v25.5h-4.2zM1300.38 958.0h4.2v25.5h-4.2zM1307.44 958.0h4.2v25.5h-4.2zM1314.51 958.0h4.2v25.5h-4.2zM1321.58 958.0h4.2v25.5h-4.2zM1328.64 958.0h4.2v25.5h-4.2zM1335.70 958.0h4.2v25.5h-4.2zM1342.77 958.0h4.2v25.5h-4.2zM1349.84 958.0h4.2v25.5h-4.2zM1356.90 958.0h4.2v25.5h-4.2zM1363.97 958.0h4.2v25.5h-4.2zM1371.03 958.0h4.2v25.5h-4.2zM1378.10 958.0h4.2v25.5h-4.2zM1385.16 958.0h4.2v25.5h-4.2zM1392.22 958.0h4.2v25.5h-4.2zM1399.29 958.0h4.2v25.5h-4.2zM1406.36 958.0h4.2v25.5h-4.2zM1413.42 958.0h4.2v25.5h-4.2zM1420.49 958.0h4.2v25.5h-4.2zM1427.55 958.0h4.2v25.5h-4.2zM1434.62 958.0h4.2v25.5h-4.2zM1441.68 958.0h4.2v25.5h-4.2zM1448.74 958.0h4.2v25.5h-4.2zM1455.81 958.0h4.2v25.5h-4.2zM1462.88 958.0h4.2v25.5h-4.2zM1469.94 958.0h4.2v25.5h-4.2zM1477.01 958.0h4.2v25.5h-4.2zM1484.07 958.0h4.2v25.5h-4.2zM1491.13 958.0h4.2v25.5h-4.2z" fill="#ff80ff"/><path d="M934.40 965.0h1.4v10.5h-1.4zM941.47 965.0h1.4v10.5h-1.4zM948.53 965.0h1.4v10.5h-1.4zM955.60 965.0h1.4v10.5h-1.4zM962.66 965.0h1.4v10.5h-1.4zM969.73 965.0h1.4v10.5h-1.4zM976.79 965.0h1.4v10.5h-1.4zM983.86 965.0h1.4v10.5h-1.4zM990.92 965.0h1.4v10.5h-1.4zM997.99 965.0h1.4v10.5h-1.4zM1005.05 965.0h1.4v10.5h-1.4zM1012.12 965.0h1.4v10.5h-1.4zM1019.18 965.0h1.4v10.5h-1.4zM1026.25 965.0h1.4v10.5h-1.4zM1033.31 965.0h1.4v10.5h-1.4zM1040.38 965.0h1.4v10.5h-1.4zM1047.44 965.0h1.4v10.5h-1.4zM1054.51 965.0h1.4v10.5h-1.4zM1061.57 965.0h1.4v10.5h-1.4zM1068.64 965.0h1.4v10.5h-1.4zM1075.70 965.0h1.4v10.5h-1.4zM1082.77 965.0h1.4v10.5h-1.4zM1089.83 965.0h1.4v10.5h-1.4zM1096.89 965.0h1.4v10.5h-1.4zM1103.96 965.0h1.4v10.5h-1.4zM1111.03 965.0h1.4v10.5h-1.4zM1118.09 965.0h1.4v10.5h-1.4zM1125.16 965.0h1.4v10.5h-1.4zM1132.22 965.0h1.4v10.5h-1.4zM1139.29 965.0h1.4v10.5h-1.4zM1146.35 965.0h1.4v10.5h-1.4zM1153.42 965.0h1.4v10.5h-1.4zM1160.48 965.0h1.4v10.5h-1.4zM1167.55 965.0h1.4v10.5h-1.4zM1174.61 965.0h1.4v10.5h-1.4zM1181.68 965.0h1.4v10.5h-1.4zM1188.74 965.0h1.4v10.5h-1.4zM1195.81 965.0h1.4v10.5h-1.4zM1202.87 965.0h1.4v10.5h-1.4zM1209.94 965.0h1.4v10.5h-1.4zM1217.00 965.0h1.4v10.5h-1.4zM1224.07 965.0h1.4v10.5h-1.4zM1231.13 965.0h1.4v10.5h-1.4zM1238.20 965.0h1.4v10.5h-1.4zM1245.26 965.0h1.4v10.5h-1.4zM1252.33 965.0h1.4v10.5h-1.4zM1259.39 965.0h1.4v10.5h-1.4zM1266.46 965.0h1.4v10.5h-1.4zM1273.52 965.0h1.4v10.5h-1.4zM1280.59 965.0h1.4v10.5h-1.4zM1287.65 965.0h1.4v10.5h-1.4zM1294.72 965.0h1.4v10.5h-1.4zM1301.78 965.0h1.4v10.5h-1.4zM1308.85 965.0h1.4v10.5h-1.4zM1315.91 965.0h1.4v10.5h-1.4zM1322.98 965.0h1.4v10.5h-1.4zM1330.04 965.0h1.4v10.5h-1.4zM1337.11 965.0h1.4v10.5h-1.4zM1344.17 965.0h1.4v10.5h-1.4zM1351.24 965.0h1.4v10.5h-1.4zM1358.30 965.0h1.4v10.5h-1.4zM1365.37 965.0h1.4v10.5h-1.4zM1372.43 965.0h1.4v10.5h-1.4zM1379.50 965.0h1.4v10.5h-1.4zM1386.56 965.0h1.4v10.5h-1.4zM1393.62 965.0h1.4v10.5h-1.4zM1400.69 965.0h1.4v10.5h-1.4zM1407.76 965.0h1.4v10.5h-1.4zM1414.82 965.0h1.4v10.5h-1.4zM1421.89 965.0h1.4v10.5h-1.4zM1428.95 965.0h1.4v10.5h-1.4zM1436.02 965.0h1.4v10.5h-1.4zM1443.08 965.0h1.4v10.5h-1.4zM1450.14 965.0h1.4v10.5h-1.4zM1457.21 965.0h1.4v10.5h-1.4zM1464.28 965.0h1.4v10.5h-1.4zM1471.34 965.0h1.4v10.5h-1.4zM1478.41 965.0h1.4v10.5h-1.4zM1485.47 965.0h1.4v10.5h-1.4zM1492.54 965.0h1.4v10.5h-1.4z" fill="#80ffff"/><rect x="744.0" y="1054.0" width="140.5" height="28.0" fill="#000"/><path d="M745.50 1055.0h4.2v26.0h-4.2zM752.50 1055.0h4.2v26.0h-4.2zM759.50 1055.0h4.2v26.0h-4.2zM766.50 1055.0h4.2v26.0h-4.2zM773.50 1055.0h4.2v26.0h-4.2zM780.50 1055.0h4.2v26.0h-4.2zM787.50 1055.0h4.2v26.0h-4.2zM794.50 1055.0h4.2v26.0h-4.2zM801.50 1055.0h4.2v26.0h-4.2zM808.50 1055.0h4.2v26.0h-4.2zM815.50 1055.0h4.2v26.0h-4.2zM822.50 1055.0h4.2v26.0h-4.2zM829.50 1055.0h4.2v26.0h-4.2zM836.50 1055.0h4.2v26.0h-4.2zM843.50 1055.0h4.2v26.0h-4.2zM850.50 1055.0h4.2v26.0h-4.2zM857.50 1055.0h4.2v26.0h-4.2zM864.50 1055.0h4.2v26.0h-4.2zM871.50 1055.0h4.2v26.0h-4.2zM878.50 1055.0h4.2v26.0h-4.2z" fill="#ff80ff"/><path d="M746.90 1062.0h1.4v11.0h-1.4zM753.90 1062.0h1.4v11.0h-1.4zM760.90 1062.0h1.4v11.0h-1.4zM767.90 1062.0h1.4v11.0h-1.4zM774.90 1062.0h1.4v11.0h-1.4zM781.90 1062.0h1.4v11.0h-1.4zM788.90 1062.0h1.4v11.0h-1.4zM795.90 1062.0h1.4v11.0h-1.4zM802.90 1062.0h1.4v11.0h-1.4zM809.90 1062.0h1.4v11.0h-1.4zM816.90 1062.0h1.4v11.0h-1.4zM823.90 1062.0h1.4v11.0h-1.4zM830.90 1062.0h1.4v11.0h-1.4zM837.90 1062.0h1.4v11.0h-1.4zM844.90 1062.0h1.4v11.0h-1.4zM851.90 1062.0h1.4v11.0h-1.4zM858.90 1062.0h1.4v11.0h-1.4zM865.90 1062.0h1.4v11.0h-1.4zM872.90 1062.0h1.4v11.0h-1.4zM879.90 1062.0h1.4v11.0h-1.4z" fill="#80ffff"/><rect x="928.0" y="1054.0" width="566.1" height="28.0" fill="#000"/><path d="M929.50 1055.0h4.2v26.0h-4.2zM936.57 1055.0h4.2v26.0h-4.2zM943.64 1055.0h4.2v26.0h-4.2zM950.71 1055.0h4.2v26.0h-4.2zM957.78 1055.0h4.2v26.0h-4.2zM964.85 1055.0h4.2v26.0h-4.2zM971.92 1055.0h4.2v26.0h-4.2zM978.99 1055.0h4.2v26.0h-4.2zM986.06 1055.0h4.2v26.0h-4.2zM993.13 1055.0h4.2v26.0h-4.2zM1000.20 1055.0h4.2v26.0h-4.2zM1007.27 1055.0h4.2v26.0h-4.2zM1014.34 1055.0h4.2v26.0h-4.2zM1021.41 1055.0h4.2v26.0h-4.2zM1028.48 1055.0h4.2v26.0h-4.2zM1035.55 1055.0h4.2v26.0h-4.2zM1042.62 1055.0h4.2v26.0h-4.2zM1049.69 1055.0h4.2v26.0h-4.2zM1056.76 1055.0h4.2v26.0h-4.2zM1063.83 1055.0h4.2v26.0h-4.2zM1070.90 1055.0h4.2v26.0h-4.2zM1077.97 1055.0h4.2v26.0h-4.2zM1085.04 1055.0h4.2v26.0h-4.2zM1092.11 1055.0h4.2v26.0h-4.2zM1099.18 1055.0h4.2v26.0h-4.2zM1106.25 1055.0h4.2v26.0h-4.2zM1113.32 1055.0h4.2v26.0h-4.2zM1120.39 1055.0h4.2v26.0h-4.2zM1127.46 1055.0h4.2v26.0h-4.2zM1134.53 1055.0h4.2v26.0h-4.2zM1141.60 1055.0h4.2v26.0h-4.2zM1148.67 1055.0h4.2v26.0h-4.2zM1155.74 1055.0h4.2v26.0h-4.2zM1162.81 1055.0h4.2v26.0h-4.2zM1169.88 1055.0h4.2v26.0h-4.2zM1176.95 1055.0h4.2v26.0h-4.2zM1184.02 1055.0h4.2v26.0h-4.2zM1191.09 1055.0h4.2v26.0h-4.2zM1198.16 1055.0h4.2v26.0h-4.2zM1205.23 1055.0h4.2v26.0h-4.2zM1212.30 1055.0h4.2v26.0h-4.2zM1219.37 1055.0h4.2v26.0h-4.2zM1226.44 1055.0h4.2v26.0h-4.2zM1233.51 1055.0h4.2v26.0h-4.2zM1240.58 1055.0h4.2v26.0h-4.2zM1247.65 1055.0h4.2v26.0h-4.2zM1254.72 1055.0h4.2v26.0h-4.2zM1261.79 1055.0h4.2v26.0h-4.2zM1268.86 1055.0h4.2v26.0h-4.2zM1275.93 1055.0h4.2v26.0h-4.2zM1283.00 1055.0h4.2v26.0h-4.2zM1290.07 1055.0h4.2v26.0h-4.2zM1297.14 1055.0h4.2v26.0h-4.2zM1304.21 1055.0h4.2v26.0h-4.2zM1311.28 1055.0h4.2v26.0h-4.2zM1318.35 1055.0h4.2v26.0h-4.2zM1325.42 1055.0h4.2v26.0h-4.2zM1332.49 1055.0h4.2v26.0h-4.2zM1339.56 1055.0h4.2v26.0h-4.2zM1346.63 1055.0h4.2v26.0h-4.2zM1353.70 1055.0h4.2v26.0h-4.2zM1360.77 1055.0h4.2v26.0h-4.2zM1367.84 1055.0h4.2v26.0h-4.2zM1374.91 1055.0h4.2v26.0h-4.2zM1381.98 1055.0h4.2v26.0h-4.2zM1389.05 1055.0h4.2v26.0h-4.2zM1396.12 1055.0h4.2v26.0h-4.2zM1403.19 1055.0h4.2v26.0h-4.2zM1410.26 1055.0h4.2v26.0h-4.2zM1417.33 1055.0h4.2v26.0h-4.2zM1424.40 1055.0h4.2v26.0h-4.2zM1431.47 1055.0h4.2v26.0h-4.2zM1438.54 1055.0h4.2v26.0h-4.2zM1445.61 1055.0h4.2v26.0h-4.2zM1452.68 1055.0h4.2v26.0h-4.2zM1459.75 1055.0h4.2v26.0h-4.2zM1466.82 1055.0h4.2v26.0h-4.2zM1473.89 1055.0h4.2v26.0h-4.2zM1480.96 1055.0h4.2v26.0h-4.2zM1488.03 1055.0h4.2v26.0h-4.2z" fill="#ff80ff"/><path d="M930.90 1062.0h1.4v11.0h-1.4zM937.97 1062.0h1.4v11.0h-1.4zM945.04 1062.0h1.4v11.0h-1.4zM952.11 1062.0h1.4v11.0h-1.4zM959.18 1062.0h1.4v11.0h-1.4zM966.25 1062.0h1.4v11.0h-1.4zM973.32 1062.0h1.4v11.0h-1.4zM980.39 1062.0h1.4v11.0h-1.4zM987.46 1062.0h1.4v11.0h-1.4zM994.53 1062.0h1.4v11.0h-1.4zM1001.60 1062.0h1.4v11.0h-1.4zM1008.67 1062.0h1.4v11.0h-1.4zM1015.74 1062.0h1.4v11.0h-1.4zM1022.81 1062.0h1.4v11.0h-1.4zM1029.88 1062.0h1.4v11.0h-1.4zM1036.95 1062.0h1.4v11.0h-1.4zM1044.02 1062.0h1.4v11.0h-1.4zM1051.09 1062.0h1.4v11.0h-1.4zM1058.16 1062.0h1.4v11.0h-1.4zM1065.23 1062.0h1.4v11.0h-1.4zM1072.30 1062.0h1.4v11.0h-1.4zM1079.37 1062.0h1.4v11.0h-1.4zM1086.44 1062.0h1.4v11.0h-1.4zM1093.51 1062.0h1.4v11.0h-1.4zM1100.58 1062.0h1.4v11.0h-1.4zM1107.65 1062.0h1.4v11.0h-1.4zM1114.72 1062.0h1.4v11.0h-1.4zM1121.79 1062.0h1.4v11.0h-1.4zM1128.86 1062.0h1.4v11.0h-1.4zM1135.93 1062.0h1.4v11.0h-1.4zM1143.00 1062.0h1.4v11.0h-1.4zM1150.07 1062.0h1.4v11.0h-1.4zM1157.14 1062.0h1.4v11.0h-1.4zM1164.21 1062.0h1.4v11.0h-1.4zM1171.28 1062.0h1.4v11.0h-1.4zM1178.35 1062.0h1.4v11.0h-1.4zM1185.42 1062.0h1.4v11.0h-1.4zM1192.49 1062.0h1.4v11.0h-1.4zM1199.56 1062.0h1.4v11.0h-1.4zM1206.63 1062.0h1.4v11.0h-1.4zM1213.70 1062.0h1.4v11.0h-1.4zM1220.77 1062.0h1.4v11.0h-1.4zM1227.84 1062.0h1.4v11.0h-1.4zM1234.91 1062.0h1.4v11.0h-1.4zM1241.98 1062.0h1.4v11.0h-1.4zM1249.05 1062.0h1.4v11.0h-1.4zM1256.12 1062.0h1.4v11.0h-1.4zM1263.19 1062.0h1.4v11.0h-1.4zM1270.26 1062.0h1.4v11.0h-1.4zM1277.33 1062.0h1.4v11.0h-1.4zM1284.40 1062.0h1.4v11.0h-1.4zM1291.47 1062.0h1.4v11.0h-1.4zM1298.54 1062.0h1.4v11.0h-1.4zM1305.61 1062.0h1.4v11.0h-1.4zM1312.68 1062.0h1.4v11.0h-1.4zM1319.75 1062.0h1.4v11.0h-1.4zM1326.82 1062.0h1.4v11.0h-1.4zM1333.89 1062.0h1.4v11.0h-1.4zM1340.96 1062.0h1.4v11.0h-1.4zM1348.03 1062.0h1.4v11.0h-1.4zM1355.10 1062.0h1.4v11.0h-1.4zM1362.17 1062.0h1.4v11.0h-1.4zM1369.24 1062.0h1.4v11.0h-1.4zM1376.31 1062.0h1.4v11.0h-1.4zM1383.38 1062.0h1.4v11.0h-1.4zM1390.45 1062.0h1.4v11.0h-1.4zM1397.52 1062.0h1.4v11.0h-1.4zM1404.59 1062.0h1.4v11.0h-1.4zM1411.66 1062.0h1.4v11.0h-1.4zM1418.73 1062.0h1.4v11.0h-1.4zM1425.80 1062.0h1.4v11.0h-1.4zM1432.87 1062.0h1.4v11.0h-1.4zM1439.94 1062.0h1.4v11.0h-1.4zM1447.01 1062.0h1.4v11.0h-1.4zM1454.08 1062.0h1.4v11.0h-1.4zM1461.15 1062.0h1.4v11.0h-1.4zM1468.22 1062.0h1.4v11.0h-1.4zM1475.29 1062.0h1.4v11.0h-1.4zM1482.36 1062.0h1.4v11.0h-1.4zM1489.43 1062.0h1.4v11.0h-1.4z" fill="#80ffff"/><path d="M748.0 976.0 L1498.0 976.0" fill="none" stroke="#ffff00" stroke-width="1.2"/><path d="M739.4 1063.7 L1498.0 1063.7" fill="none" stroke="#ffff00" stroke-width="1.2"/><path d="M702.0 1078.0 L739.4 1078.0 L739.4 1063.7" fill="none" stroke="#ffff00" stroke-width="1.2"/><path d="M739.4 1078.5 L1546.0 1078.5" fill="none" stroke="#808080" stroke-width="1"/><path d="M702.0 997.5 L1540.0 997.5" fill="none" stroke="#c8ffff" stroke-width="1"/><path d="M720.9 976.0 L748.0 976.0" fill="none" stroke="#c8ffff" stroke-width="1"/><path d="M748.0 990.5 L1155.0 990.5" fill="none" stroke="#000" stroke-width="1.5"/><circle cx="759.0" cy="947.5" r="3.5" fill="#3366ff"/><circle cx="759.0" cy="947.5" r="2.0" fill="#7d7d6e"/><circle cx="769.0" cy="947.5" r="3.5" fill="#3366ff"/><circle cx="769.0" cy="947.5" r="2.0" fill="#7d7d6e"/><circle cx="781.0" cy="947.5" r="3.5" fill="#3366ff"/><circle cx="781.0" cy="947.5" r="2.0" fill="#7d7d6e"/><circle cx="790.0" cy="947.5" r="3.5" fill="#3366ff"/><circle cx="790.0" cy="947.5" r="2.0" fill="#7d7d6e"/><circle cx="802.0" cy="947.5" r="3.5" fill="#3366ff"/><circle cx="802.0" cy="947.5" r="2.0" fill="#7d7d6e"/><circle cx="813.0" cy="947.5" r="3.5" fill="#3366ff"/><circle cx="813.0" cy="947.5" r="2.0" fill="#7d7d6e"/><path d="M769.0 951.0 L769.0 958.0" fill="none" stroke="#3366ff" stroke-width="1.5"/><path d="M781.0 951.0 L781.0 958.0" fill="none" stroke="#3366ff" stroke-width="1.5"/><path d="M790.0 951.0 L790.0 958.0" fill="none" stroke="#3366ff" stroke-width="1.5"/><path d="M802.0 951.0 L795.0 958.0" fill="none" stroke="#3366ff" stroke-width="1.5"/><path d="M813.0 951.0 L804.0 958.0" fill="none" stroke="#3366ff" stroke-width="1.5"/><rect x="872.7" y="920.0" width="1.5" height="38.0" fill="#000"/><text x="899.0" y="952.0" font-size="14" fill="#c8ffff" transform="rotate(-90 899.0 952.0)" textLength="16.0" lengthAdjust="spacingAndGlyphs" shape-rendering="auto">40</text><text x="932.0" y="952.0" font-size="14" fill="#c8ffff" transform="rotate(-90 932.0 952.0)" textLength="16.0" lengthAdjust="spacingAndGlyphs" shape-rendering="auto">42</text><text x="899.0" y="1078.0" font-size="13" fill="#c8ffff" transform="rotate(-90 899.0 1078.0)" textLength="15.0" lengthAdjust="spacingAndGlyphs" shape-rendering="auto">39</text><text x="927.0" y="1078.0" font-size="13" fill="#c8ffff" transform="rotate(-90 927.0 1078.0)" textLength="15.0" lengthAdjust="spacingAndGlyphs" shape-rendering="auto">41</text><text x="757.0" y="940.0" font-size="12" fill="#c8ffff" transform="rotate(125 757.0 940.0)" shape-rendering="auto">2</text><path d="M778.0 1042.0 L796.0 1024.0 L806.0 1024.0 L806.0 1055.0 L778.0 1055.0Z" fill="#000"/><path d="M806.0 1027.5 L1128.0 1027.5 L1147.0 1046.0 L1187.0 1046.0" fill="none" stroke="#000" stroke-width="1.5"/><rect x="848.7" y="1027.0" width="24.7" height="3.0" fill="#000"/><path d="M848.7 1027.0 L848.7 1042.0" fill="none" stroke="#000" stroke-width="1.5"/><path d="M873.4 1027.0 L873.4 1036.0" fill="none" stroke="#000" stroke-width="1.5"/><path d="M693.0 1043.5 L748.0 1043.5" fill="none" stroke="#000" stroke-width="1.2"/><path d="M691.0 1010.0 L691.0 1042.0" fill="none" stroke="#000" stroke-width="1.5"/><circle cx="752.0" cy="1044.0" r="3.4" fill="#3366ff" stroke="#000" stroke-width="1"/><circle cx="752.0" cy="1044.0" r="1.8" fill="#7d7d6e"/><circle cx="762.0" cy="1044.0" r="3.4" fill="#3366ff" stroke="#000" stroke-width="1"/><circle cx="762.0" cy="1044.0" r="1.8" fill="#7d7d6e"/><circle cx="774.0" cy="1044.0" r="3.4" fill="#3366ff" stroke="#000" stroke-width="1"/><circle cx="774.0" cy="1044.0" r="1.8" fill="#7d7d6e"/><circle cx="783.0" cy="1044.0" r="3.4" fill="#3366ff" stroke="#000" stroke-width="1"/><circle cx="783.0" cy="1044.0" r="1.8" fill="#7d7d6e"/><circle cx="768.0" cy="1051.0" r="3.4" fill="#3366ff" stroke="#000" stroke-width="1"/><circle cx="768.0" cy="1051.0" r="1.8" fill="#7d7d6e"/><circle cx="791.0" cy="1051.0" r="3.4" fill="#3366ff" stroke="#000" stroke-width="1"/><circle cx="791.0" cy="1051.0" r="1.8" fill="#7d7d6e"/><circle cx="797.0" cy="1022.5" r="3.4" fill="#3366ff" stroke="#000" stroke-width="1"/><circle cx="797.0" cy="1022.5" r="1.8" fill="#7d7d6e"/><circle cx="804.5" cy="1011.0" r="3.4" fill="#3366ff" stroke="#000" stroke-width="1"/><circle cx="804.5" cy="1011.0" r="1.8" fill="#7d7d6e"/><circle cx="846.0" cy="1042.0" r="3.4" fill="#3366ff" stroke="#000" stroke-width="1"/><circle cx="846.0" cy="1042.0" r="1.8" fill="#7d7d6e"/><circle cx="860.0" cy="1042.0" r="3.4" fill="#3366ff" stroke="#000" stroke-width="1"/><circle cx="860.0" cy="1042.0" r="1.8" fill="#7d7d6e"/><circle cx="874.0" cy="1042.0" r="3.4" fill="#3366ff" stroke="#000" stroke-width="1"/><circle cx="874.0" cy="1042.0" r="1.8" fill="#7d7d6e"/><circle cx="881.0" cy="1051.0" r="3.4" fill="#3366ff" stroke="#000" stroke-width="1"/><circle cx="881.0" cy="1051.0" r="1.8" fill="#7d7d6e"/><circle cx="867.0" cy="1051.0" r="3.4" fill="#3366ff" stroke="#000" stroke-width="1"/><circle cx="867.0" cy="1051.0" r="1.8" fill="#7d7d6e"/><circle cx="853.0" cy="1051.0" r="3.4" fill="#3366ff" stroke="#000" stroke-width="1"/><circle cx="853.0" cy="1051.0" r="1.8" fill="#7d7d6e"/><circle cx="839.0" cy="1051.0" r="3.4" fill="#3366ff" stroke="#000" stroke-width="1"/><circle cx="839.0" cy="1051.0" r="1.8" fill="#7d7d6e"/><circle cx="811.0" cy="1051.0" r="3.4" fill="#3366ff" stroke="#000" stroke-width="1"/><circle cx="811.0" cy="1051.0" r="1.8" fill="#7d7d6e"/><circle cx="931.0" cy="1041.0" r="3.4" fill="#3366ff" stroke="#000" stroke-width="1"/><circle cx="931.0" cy="1041.0" r="1.8" fill="#7d7d6e"/><circle cx="945.0" cy="1041.0" r="3.4" fill="#3366ff" stroke="#000" stroke-width="1"/><circle cx="945.0" cy="1041.0" r="1.8" fill="#7d7d6e"/><circle cx="959.0" cy="1041.0" r="3.4" fill="#3366ff" stroke="#000" stroke-width="1"/><circle cx="959.0" cy="1041.0" r="1.8" fill="#7d7d6e"/><circle cx="938.0" cy="1051.0" r="3.4" fill="#3366ff" stroke="#000" stroke-width="1"/><circle cx="938.0" cy="1051.0" r="1.8" fill="#7d7d6e"/><circle cx="952.0" cy="1051.0" r="3.4" fill="#3366ff" stroke="#000" stroke-width="1"/><circle cx="952.0" cy="1051.0" r="1.8" fill="#7d7d6e"/><circle cx="995.0" cy="1051.0" r="3.4" fill="#3366ff" stroke="#000" stroke-width="1"/><circle cx="995.0" cy="1051.0" r="1.8" fill="#7d7d6e"/><rect x="796.5" y="1022.0" width="1.5" height="33.0" fill="#3366ff"/><rect x="804.0" y="1011.0" width="1.5" height="44.0" fill="#3366ff"/><path d="M933.0 1041.0 L943.0 1041.0 L943.0 1055.0 L933.0 1055.0Z" fill="#000"/><circle cx="1027.0" cy="945.0" r="3.4" fill="#3366ff" stroke="#000" stroke-width="1"/><circle cx="1027.0" cy="945.0" r="1.8" fill="#7d7d6e"/><circle cx="1076.0" cy="947.0" r="3.4" fill="#3366ff" stroke="#000" stroke-width="1"/><circle cx="1076.0" cy="947.0" r="1.8" fill="#7d7d6e"/><circle cx="1104.0" cy="950.0" r="3.4" fill="#3366ff" stroke="#000" stroke-width="1"/><circle cx="1104.0" cy="950.0" r="1.8" fill="#7d7d6e"/><circle cx="1110.0" cy="944.0" r="3.4" fill="#3366ff" stroke="#000" stroke-width="1"/><circle cx="1110.0" cy="944.0" r="1.8" fill="#7d7d6e"/><circle cx="1153.0" cy="948.0" r="3.4" fill="#3366ff" stroke="#000" stroke-width="1"/><circle cx="1153.0" cy="948.0" r="1.8" fill="#7d7d6e"/><circle cx="1182.0" cy="954.0" r="3.4" fill="#3366ff" stroke="#000" stroke-width="1"/><circle cx="1182.0" cy="954.0" r="1.8" fill="#7d7d6e"/><circle cx="1204.0" cy="954.0" r="3.4" fill="#3366ff" stroke="#000" stroke-width="1"/><circle cx="1204.0" cy="954.0" r="1.8" fill="#7d7d6e"/><circle cx="1056.0" cy="988.5" r="3.4" fill="#3366ff" stroke="#000" stroke-width="1"/><circle cx="1056.0" cy="988.5" r="1.8" fill="#7d7d6e"/><circle cx="1097.0" cy="989.0" r="3.4" fill="#3366ff" stroke="#000" stroke-width="1"/><circle cx="1097.0" cy="989.0" r="1.8" fill="#7d7d6e"/><circle cx="1225.0" cy="989.0" r="3.4" fill="#3366ff" stroke="#000" stroke-width="1"/><circle cx="1225.0" cy="989.0" r="1.8" fill="#7d7d6e"/><circle cx="1232.0" cy="1013.0" r="3.4" fill="#3366ff" stroke="#000" stroke-width="1"/><circle cx="1232.0" cy="1013.0" r="1.8" fill="#7d7d6e"/><circle cx="1193.0" cy="1049.0" r="3.4" fill="#3366ff" stroke="#000" stroke-width="1"/><circle cx="1193.0" cy="1049.0" r="1.8" fill="#7d7d6e"/><circle cx="1019.0" cy="953.0" r="1.8" fill="#7d7d6e"/><circle cx="1062.0" cy="953.0" r="1.8" fill="#7d7d6e"/><circle cx="1232.0" cy="954.0" r="1.8" fill="#7d7d6e"/><circle cx="1253.0" cy="954.0" r="1.8" fill="#7d7d6e"/><circle cx="1275.0" cy="954.0" r="1.8" fill="#7d7d6e"/><circle cx="1296.0" cy="954.0" r="1.8" fill="#7d7d6e"/><circle cx="1345.0" cy="954.0" r="1.8" fill="#7d7d6e"/><circle cx="1395.0" cy="953.8" r="1.8" fill="#7d7d6e"/><circle cx="1415.6" cy="944.5" r="1.8" fill="#7d7d6e"/><circle cx="995.0" cy="1051.0" r="1.8" fill="#7d7d6e"/><circle cx="1100.0" cy="1051.0" r="1.8" fill="#7d7d6e"/><circle cx="1142.0" cy="1051.0" r="1.8" fill="#7d7d6e"/><circle cx="1278.0" cy="1051.0" r="1.8" fill="#7d7d6e"/><circle cx="1314.0" cy="1051.0" r="1.8" fill="#7d7d6e"/><circle cx="1349.0" cy="1051.0" r="1.8" fill="#7d7d6e"/><circle cx="1391.0" cy="1040.0" r="1.8" fill="#7d7d6e"/><circle cx="1384.0" cy="1051.0" r="1.8" fill="#7d7d6e"/><circle cx="1405.0" cy="1051.0" r="1.8" fill="#7d7d6e"/><circle cx="1420.0" cy="1051.0" r="1.8" fill="#7d7d6e"/><circle cx="1441.0" cy="1051.0" r="1.8" fill="#7d7d6e"/><circle cx="1402.6" cy="944.5" r="4" fill="#3366ff" stroke="#000" stroke-width="1" stroke-dasharray="2 1.2"/><circle cx="1402.6" cy="944.5" r="2.0" fill="#7d7d6e"/><circle cx="1409.4" cy="953.8" r="4" fill="#3366ff" stroke="#000" stroke-width="1" stroke-dasharray="2 1.2"/><circle cx="1409.4" cy="953.8" r="2.0" fill="#7d7d6e"/><circle cx="1437.0" cy="989.0" r="4" fill="#3366ff" stroke="#000" stroke-width="1" stroke-dasharray="2 1.2"/><circle cx="1437.0" cy="989.0" r="2.0" fill="#7d7d6e"/><circle cx="1453.6" cy="996.4" r="4" fill="#3366ff" stroke="#000" stroke-width="1" stroke-dasharray="2 1.2"/><circle cx="1453.6" cy="996.4" r="2.0" fill="#7d7d6e"/><circle cx="1464.0" cy="1005.7" r="4" fill="#3366ff" stroke="#000" stroke-width="1" stroke-dasharray="2 1.2"/><circle cx="1464.0" cy="1005.7" r="2.0" fill="#7d7d6e"/><circle cx="1478.4" cy="1019.0" r="4" fill="#3366ff" stroke="#000" stroke-width="1" stroke-dasharray="2 1.2"/><circle cx="1478.4" cy="1019.0" r="2.0" fill="#7d7d6e"/><circle cx="1391.0" cy="1041.8" r="4" fill="#3366ff" stroke="#000" stroke-width="1" stroke-dasharray="2 1.2"/><circle cx="1391.0" cy="1041.8" r="2.0" fill="#7d7d6e"/><rect x="1130.0" y="921.0" width="6.0" height="17.0" fill="#000"/><rect x="1131.0" y="922.0" width="4.0" height="15.0" fill="#ffff00"/><rect x="1131.5" y="926.0" width="3.0" height="6.0" fill="#8a8a20"/><path d="M960.0 827.4 L1051.0 827.4 L1135.0 911.0 L1135.0 921.0" fill="none" stroke="#000" stroke-width="1.8"/><path d="M960.0 831.2 L1049.0 831.2 L1131.0 913.0 L1131.0 921.0" fill="none" stroke="#000" stroke-width="1.8"/><path d="M1131.0 938.0 L1131.0 958.0" fill="none" stroke="#000" stroke-width="1.2"/><path d="M1135.0 938.0 L1135.0 958.0" fill="none" stroke="#000" stroke-width="1.2"/><rect x="421.4" y="943.0" width="11.8" height="12.0" fill="#8080c0"/><rect x="420.9" y="942.5" width="12.8" height="13.0" fill="none" stroke="#444" stroke-width="1"/><text x="427.5" y="951.0" font-size="5.5" fill="#ffff00" text-anchor="middle" shape-rendering="auto">F1</text><rect x="1538.0" y="142.0" width="12.0" height="12.0" fill="#8080c0"/><rect x="1537.5" y="141.5" width="13.0" height="13.0" fill="none" stroke="#444" stroke-width="1"/><text x="1544.0" y="150.0" font-size="5.5" fill="#ffff00" text-anchor="middle" shape-rendering="auto">F2</text><rect x="460.4" y="961.0" width="31.2" height="13.3" fill="#000"/><rect x="470.7" y="962.0" width="10.5" height="11.3" fill="#3366ff"/><rect x="461.4" y="962.0" width="9.3" height="11.3" fill="#8080c0"/><rect x="465.1" y="963.0" width="5.6" height="9.3" fill="#80e880"/><rect x="481.3" y="962.0" width="9.3" height="11.3" fill="#ff80ff"/><rect x="481.3" y="963.0" width="6.1" height="9.3" fill="#ffff00"/><rect x="466.1" y="963.0" width="19.8" height="9.3" fill="none" stroke="#ffff00" stroke-width="1"/><circle cx="455.5" cy="967.0" r="2.0" fill="#7d7d6e"/><circle cx="495.5" cy="967.0" r="4" fill="#3366ff" stroke="#000" stroke-width="1" stroke-dasharray="2 1.2"/><circle cx="495.5" cy="967.0" r="2.0" fill="#7d7d6e"/><rect x="487.5" y="973.0" width="1.5" height="10.0" fill="#000"/><rect x="442.8" y="982.9" width="64.5" height="74.0" fill="none" stroke="#808080" stroke-width="1"/><rect x="436.0" y="984.5" width="31.8" height="11.0" fill="#000"/><rect x="436.9" y="985.5" width="30.0" height="9.0" fill="#ff80ff"/><rect x="442.7" y="987.7" width="20.6" height="4.6" fill="#ffff00"/><rect x="483.0" y="984.5" width="32.0" height="11.0" fill="#000"/><rect x="483.8" y="985.5" width="30.4" height="9.0" fill="#ff80ff"/><rect x="487.8" y="987.7" width="20.1" height="4.6" fill="#ffff00"/><rect x="436.0" y="999.1" width="31.8" height="11.0" fill="#000"/><rect x="436.9" y="1000.1" width="30.0" height="9.0" fill="#ff80ff"/><rect x="442.7" y="1002.3" width="20.6" height="4.6" fill="#ffff00"/><rect x="483.0" y="999.1" width="32.0" height="11.0" fill="#000"/><rect x="483.8" y="1000.1" width="30.4" height="9.0" fill="#ff80ff"/><rect x="487.8" y="1002.3" width="20.1" height="4.6" fill="#ffff00"/><rect x="424.0" y="1003.1" width="13.0" height="3.0" fill="#000"/><circle cx="427.8" cy="1004.6" r="4" fill="#3366ff" stroke="#000" stroke-width="1" stroke-dasharray="2 1.2"/><circle cx="427.8" cy="1004.6" r="2.0" fill="#7d7d6e"/><rect x="514.0" y="1003.1" width="8.0" height="3.0" fill="#000"/><circle cx="518.4" cy="1004.6" r="4" fill="#3366ff" stroke="#000" stroke-width="1" stroke-dasharray="2 1.2"/><circle cx="518.4" cy="1004.6" r="2.0" fill="#7d7d6e"/><rect x="436.0" y="1014.2" width="31.8" height="11.0" fill="#000"/><rect x="436.9" y="1015.2" width="30.0" height="9.0" fill="#ff80ff"/><rect x="442.7" y="1017.4" width="20.6" height="4.6" fill="#ffff00"/><rect x="483.0" y="1014.2" width="32.0" height="11.0" fill="#000"/><rect x="483.8" y="1015.2" width="30.4" height="9.0" fill="#ff80ff"/><rect x="487.8" y="1017.4" width="20.1" height="4.6" fill="#ffff00"/><rect x="424.0" y="1018.2" width="13.0" height="3.0" fill="#000"/><circle cx="427.8" cy="1019.7" r="4" fill="#3366ff" stroke="#000" stroke-width="1" stroke-dasharray="2 1.2"/><circle cx="427.8" cy="1019.7" r="2.0" fill="#7d7d6e"/><rect x="514.0" y="1018.2" width="8.0" height="3.0" fill="#000"/><circle cx="518.4" cy="1019.7" r="4" fill="#3366ff" stroke="#000" stroke-width="1" stroke-dasharray="2 1.2"/><circle cx="518.4" cy="1019.7" r="2.0" fill="#7d7d6e"/><rect x="436.0" y="1029.2" width="31.8" height="11.0" fill="#000"/><rect x="436.9" y="1030.2" width="30.0" height="9.0" fill="#ff80ff"/><rect x="442.7" y="1032.4" width="20.6" height="4.6" fill="#ffff00"/><rect x="483.0" y="1029.2" width="32.0" height="11.0" fill="#000"/><rect x="483.8" y="1030.2" width="30.4" height="9.0" fill="#ff80ff"/><rect x="487.8" y="1032.4" width="20.1" height="4.6" fill="#ffff00"/><rect x="424.0" y="1033.2" width="13.0" height="3.0" fill="#000"/><circle cx="427.8" cy="1034.7" r="4" fill="#3366ff" stroke="#000" stroke-width="1" stroke-dasharray="2 1.2"/><circle cx="427.8" cy="1034.7" r="2.0" fill="#7d7d6e"/><rect x="514.0" y="1033.2" width="8.0" height="3.0" fill="#000"/><circle cx="518.4" cy="1034.7" r="4" fill="#3366ff" stroke="#000" stroke-width="1" stroke-dasharray="2 1.2"/><circle cx="518.4" cy="1034.7" r="2.0" fill="#7d7d6e"/><rect x="436.0" y="1044.3" width="31.8" height="11.0" fill="#000"/><rect x="436.9" y="1045.3" width="30.0" height="9.0" fill="#ff80ff"/><rect x="442.7" y="1047.5" width="20.6" height="4.6" fill="#ffff00"/><rect x="483.0" y="1044.3" width="32.0" height="11.0" fill="#000"/><rect x="483.8" y="1045.3" width="30.4" height="9.0" fill="#ff80ff"/><rect x="487.8" y="1047.5" width="20.1" height="4.6" fill="#80e880"/><rect x="424.0" y="1048.3" width="13.0" height="3.0" fill="#000"/><circle cx="427.8" cy="1049.8" r="4" fill="#3366ff" stroke="#000" stroke-width="1" stroke-dasharray="2 1.2"/><circle cx="427.8" cy="1049.8" r="2.0" fill="#7d7d6e"/><rect x="514.0" y="1048.3" width="8.0" height="3.0" fill="#000"/><circle cx="518.4" cy="1049.8" r="4" fill="#3366ff" stroke="#000" stroke-width="1" stroke-dasharray="2 1.2"/><circle cx="518.4" cy="1049.8" r="2.0" fill="#7d7d6e"/><rect x="455.5" y="982.9" width="39.7" height="74.0" fill="none" stroke="#ffff00" stroke-width="1.2"/><g shape-rendering="auto"><path d="M466.0 992.3 L475.0 995.3 L484.0 992.3 L480.0 997.3 L484.0 1002.3 L475.0 999.3 L466.0 1002.3 L470.0 997.3Z" fill="#000"/><circle cx="475.0" cy="997.3" r="4.6" fill="#ffff00"/><path d="M466.0 1037.3 L475.0 1040.3 L484.0 1037.3 L480.0 1042.3 L484.0 1047.3 L475.0 1044.3 L466.0 1047.3 L470.0 1042.3Z" fill="#000"/><circle cx="475.0" cy="1042.3" r="4.6" fill="#ffff00"/></g><rect x="490.6" y="1052.3" width="4.9" height="4.7" fill="#ff0000"/><rect x="497.0" y="1057.8" width="17.0" height="1.2" fill="#c8ffff"/><text x="410.5" y="990.6" font-size="16" fill="#c8ffff" textLength="19.0" lengthAdjust="spacingAndGlyphs" shape-rendering="auto">X4</text><text x="504.0" y="1075.0" font-size="16" fill="#c8ffff" shape-rendering="auto">1</text><text x="477.0" y="1024.0" font-size="5.5" fill="#ffff00" transform="rotate(-90 477.0 1024.0)" shape-rendering="auto">X4</text><rect x="534.3" y="979.0" width="1.5" height="87.5" fill="#000"/><circle cx="538.2" cy="980.6" r="4" fill="#3366ff" stroke="#000" stroke-width="1" stroke-dasharray="2 1.2"/><circle cx="538.2" cy="980.6" r="2.0" fill="#7d7d6e"/><circle cx="538.2" cy="1063.8" r="4" fill="#3366ff" stroke="#000" stroke-width="1" stroke-dasharray="2 1.2"/><circle cx="538.2" cy="1063.8" r="2.0" fill="#7d7d6e"/><path d="M551.0 991.5 L557.0 991.5 L564.0 997.4 L569.0 996.4" fill="none" stroke="#000" stroke-width="3.2"/><rect x="536.0" y="987.0" width="16.2" height="9.0" fill="#000"/><rect x="537.0" y="988.0" width="14.2" height="7.0" fill="#ff80ff"/><rect x="539.0" y="989.0" width="10.2" height="5.0" fill="#ffff00"/><rect x="541.6" y="990.0" width="5.0" height="3.0" fill="#50501a"/><circle cx="556.0" cy="990.5" r="2.0" fill="#7d7d6e"/><path d="M551.0 1002.4 L557.0 1002.4 L564.0 1005.1 L569.0 1004.1" fill="none" stroke="#000" stroke-width="3.2"/><rect x="536.0" y="997.9" width="16.2" height="9.0" fill="#000"/><rect x="537.0" y="998.9" width="14.2" height="7.0" fill="#ff80ff"/><rect x="539.0" y="999.9" width="10.2" height="5.0" fill="#ffff00"/><rect x="541.6" y="1000.9" width="5.0" height="3.0" fill="#50501a"/><circle cx="556.0" cy="1001.4" r="2.0" fill="#7d7d6e"/><path d="M551.0 1012.8 L557.0 1012.8 L564.0 1012.7 L569.0 1011.7" fill="none" stroke="#000" stroke-width="3.2"/><rect x="536.0" y="1008.3" width="16.2" height="9.0" fill="#000"/><rect x="537.0" y="1009.3" width="14.2" height="7.0" fill="#ff80ff"/><rect x="539.0" y="1010.3" width="10.2" height="5.0" fill="#ffff00"/><rect x="541.6" y="1011.3" width="5.0" height="3.0" fill="#50501a"/><circle cx="556.0" cy="1011.8" r="2.0" fill="#7d7d6e"/><path d="M551.0 1023.7 L557.0 1023.7 L564.0 1019.4 L569.0 1019.4" fill="none" stroke="#000" stroke-width="3.2"/><rect x="536.0" y="1019.2" width="16.2" height="9.0" fill="#000"/><rect x="537.0" y="1020.2" width="14.2" height="7.0" fill="#ff80ff"/><rect x="539.0" y="1021.2" width="10.2" height="5.0" fill="#ffff00"/><rect x="541.6" y="1022.2" width="5.0" height="3.0" fill="#50501a"/><circle cx="556.0" cy="1025.2" r="2.0" fill="#7d7d6e"/><path d="M551.0 1034.3 L557.0 1034.3 L564.0 1027.0 L569.0 1027.0" fill="none" stroke="#000" stroke-width="3.2"/><rect x="536.0" y="1029.8" width="16.2" height="9.0" fill="#000"/><rect x="537.0" y="1030.8" width="14.2" height="7.0" fill="#ff80ff"/><rect x="539.0" y="1031.8" width="10.2" height="5.0" fill="#ffff00"/><rect x="541.6" y="1032.8" width="5.0" height="3.0" fill="#50501a"/><circle cx="556.0" cy="1035.8" r="2.0" fill="#7d7d6e"/><path d="M551.0 1044.7 L557.0 1044.7 L564.0 1034.7 L569.0 1034.7" fill="none" stroke="#000" stroke-width="3.2"/><rect x="536.0" y="1040.2" width="16.2" height="9.0" fill="#000"/><rect x="537.0" y="1041.2" width="14.2" height="7.0" fill="#ff80ff"/><rect x="539.0" y="1042.2" width="10.2" height="5.0" fill="#ffff00"/><rect x="541.6" y="1043.2" width="5.0" height="3.0" fill="#50501a"/><circle cx="556.0" cy="1046.2" r="2.0" fill="#7d7d6e"/><path d="M551.0 1055.2 L557.0 1055.2 L564.0 1042.4 L569.0 1042.4" fill="none" stroke="#000" stroke-width="3.2"/><rect x="536.0" y="1050.7" width="16.2" height="9.0" fill="#000"/><rect x="537.0" y="1051.7" width="14.2" height="7.0" fill="#ff80ff"/><rect x="539.0" y="1052.7" width="10.2" height="5.0" fill="#ffff00"/><rect x="541.6" y="1053.7" width="5.0" height="3.0" fill="#50501a"/><circle cx="556.0" cy="1056.7" r="2.0" fill="#7d7d6e"/><rect x="574.8" y="994.5" width="75.4" height="59.0" fill="none" stroke="#808080" stroke-width="1"/><rect x="568.8" y="993.4" width="17.2" height="6.0" fill="#ff80ff"/><rect x="574.0" y="994.9" width="10.0" height="3.0" fill="#ffff00"/><rect x="571.0" y="994.9" width="3.0" height="3.0" fill="#80ffff"/><rect x="638.5" y="993.4" width="17.7" height="6.0" fill="#ff80ff"/><rect x="640.0" y="994.9" width="10.0" height="3.0" fill="#ffff00"/><rect x="650.0" y="994.9" width="3.0" height="3.0" fill="#80ffff"/><rect x="568.8" y="1001.1" width="17.2" height="6.0" fill="#ff80ff"/><rect x="574.0" y="1002.6" width="10.0" height="3.0" fill="#ffff00"/><rect x="571.0" y="1002.6" width="3.0" height="3.0" fill="#80ffff"/><rect x="638.5" y="1001.1" width="17.7" height="6.0" fill="#ff80ff"/><rect x="640.0" y="1002.6" width="10.0" height="3.0" fill="#ffff00"/><rect x="650.0" y="1002.6" width="3.0" height="3.0" fill="#80ffff"/><rect x="568.8" y="1008.7" width="17.2" height="6.0" fill="#ff80ff"/><rect x="574.0" y="1010.2" width="10.0" height="3.0" fill="#ffff00"/><rect x="571.0" y="1010.2" width="3.0" height="3.0" fill="#80ffff"/><rect x="638.5" y="1008.7" width="17.7" height="6.0" fill="#ff80ff"/><rect x="640.0" y="1010.2" width="10.0" height="3.0" fill="#ffff00"/><rect x="650.0" y="1010.2" width="3.0" height="3.0" fill="#80ffff"/><rect x="568.8" y="1016.4" width="17.2" height="6.0" fill="#ff80ff"/><rect x="574.0" y="1017.9" width="10.0" height="3.0" fill="#ffff00"/><rect x="571.0" y="1017.9" width="3.0" height="3.0" fill="#80ffff"/><rect x="638.5" y="1016.4" width="17.7" height="6.0" fill="#ff80ff"/><rect x="640.0" y="1017.9" width="10.0" height="3.0" fill="#ffff00"/><rect x="650.0" y="1017.9" width="3.0" height="3.0" fill="#80ffff"/><rect x="568.8" y="1024.0" width="17.2" height="6.0" fill="#ff80ff"/><rect x="574.0" y="1025.5" width="10.0" height="3.0" fill="#ffff00"/><rect x="571.0" y="1025.5" width="3.0" height="3.0" fill="#80ffff"/><rect x="638.5" y="1024.0" width="17.7" height="6.0" fill="#ff80ff"/><rect x="640.0" y="1025.5" width="10.0" height="3.0" fill="#ffff00"/><rect x="650.0" y="1025.5" width="3.0" height="3.0" fill="#80ffff"/><rect x="568.8" y="1031.7" width="17.2" height="6.0" fill="#ff80ff"/><rect x="574.0" y="1033.2" width="10.0" height="3.0" fill="#ffff00"/><rect x="571.0" y="1033.2" width="3.0" height="3.0" fill="#80ffff"/><rect x="638.5" y="1031.7" width="17.7" height="6.0" fill="#ff80ff"/><rect x="640.0" y="1033.2" width="10.0" height="3.0" fill="#ffff00"/><rect x="650.0" y="1033.2" width="3.0" height="3.0" fill="#80ffff"/><rect x="568.8" y="1039.4" width="17.2" height="6.0" fill="#ff80ff"/><rect x="574.0" y="1040.9" width="10.0" height="3.0" fill="#ffff00"/><rect x="571.0" y="1040.9" width="3.0" height="3.0" fill="#80ffff"/><rect x="638.5" y="1039.4" width="17.7" height="6.0" fill="#ff80ff"/><rect x="640.0" y="1040.9" width="10.0" height="3.0" fill="#ffff00"/><rect x="650.0" y="1040.9" width="3.0" height="3.0" fill="#80ffff"/><rect x="568.8" y="1047.0" width="17.2" height="6.0" fill="#ff80ff"/><rect x="574.0" y="1048.5" width="10.0" height="3.0" fill="#ffff00"/><rect x="571.0" y="1048.5" width="3.0" height="3.0" fill="#80ffff"/><rect x="638.5" y="1047.0" width="17.7" height="6.0" fill="#8080c0"/><rect x="640.0" y="1048.5" width="10.0" height="3.0" fill="#80e880"/><rect x="650.0" y="1048.5" width="3.0" height="3.0" fill="#80ffff"/><rect x="587.0" y="994.5" width="51.0" height="59.0" fill="none" stroke="#ffff00" stroke-width="1.3"/><rect x="585.0" y="991.3" width="53.0" height="1.2" fill="#c8ffff"/><rect x="585.0" y="1054.2" width="68.5" height="1.2" fill="#c8ffff"/><g shape-rendering="auto"><circle cx="632.2" cy="1047.0" r="2.6" fill="#ff0000"/></g><text x="599.8" y="985.5" font-size="16.5" fill="#c8ffff" textLength="26.0" lengthAdjust="spacingAndGlyphs" shape-rendering="auto">U11</text><text x="616.0" y="1031.0" font-size="5.5" fill="#ffff00" transform="rotate(-90 616.0 1031.0)" shape-rendering="auto">U11</text><path d="M656.0 1004.1 L662.0 1004.1 L668.0 1001.4 L674.0 1001.4" fill="none" stroke="#000" stroke-width="3.2"/><rect x="672.5" y="996.9" width="16.5" height="9.0" fill="#000"/><rect x="673.5" y="997.9" width="14.5" height="7.0" fill="#ff80ff"/><rect x="675.5" y="998.9" width="10.5" height="5.0" fill="#ffff00"/><rect x="678.2" y="999.9" width="5.0" height="3.0" fill="#50501a"/><circle cx="666.5" cy="999.4" r="2.0" fill="#7d7d6e"/><path d="M656.0 1011.7 L662.0 1011.7 L668.0 1011.9 L674.0 1011.9" fill="none" stroke="#000" stroke-width="3.2"/><rect x="672.5" y="1007.4" width="16.5" height="9.0" fill="#000"/><rect x="673.5" y="1008.4" width="14.5" height="7.0" fill="#ff80ff"/><rect x="675.5" y="1009.4" width="10.5" height="5.0" fill="#ffff00"/><rect x="678.2" y="1010.4" width="5.0" height="3.0" fill="#50501a"/><circle cx="666.5" cy="1009.9" r="2.0" fill="#7d7d6e"/><path d="M656.0 1019.4 L662.0 1019.4 L668.0 1022.8 L674.0 1022.8" fill="none" stroke="#000" stroke-width="3.2"/><rect x="672.5" y="1018.3" width="16.5" height="9.0" fill="#000"/><rect x="673.5" y="1019.3" width="14.5" height="7.0" fill="#ff80ff"/><rect x="675.5" y="1020.3" width="10.5" height="5.0" fill="#ffff00"/><rect x="678.2" y="1021.3" width="5.0" height="3.0" fill="#50501a"/><circle cx="666.5" cy="1020.8" r="2.0" fill="#7d7d6e"/><path d="M656.0 1027.0 L662.0 1027.0 L668.0 1033.7 L674.0 1033.7" fill="none" stroke="#000" stroke-width="3.2"/><rect x="672.5" y="1029.2" width="16.5" height="9.0" fill="#000"/><rect x="673.5" y="1030.2" width="14.5" height="7.0" fill="#ff80ff"/><rect x="675.5" y="1031.2" width="10.5" height="5.0" fill="#ffff00"/><rect x="678.2" y="1032.2" width="5.0" height="3.0" fill="#50501a"/><circle cx="666.5" cy="1031.7" r="2.0" fill="#7d7d6e"/><rect x="688.3" y="991.0" width="1.5" height="50.0" fill="#000"/><circle cx="685.3" cy="991.0" r="4" fill="#3366ff" stroke="#000" stroke-width="1" stroke-dasharray="2 1.2"/><circle cx="685.3" cy="991.0" r="2.0" fill="#7d7d6e"/><circle cx="685.3" cy="1040.7" r="4" fill="#3366ff" stroke="#000" stroke-width="1" stroke-dasharray="2 1.2"/><circle cx="685.3" cy="1040.7" r="2.0" fill="#7d7d6e"/><path d="M586.5 1048.0 L598.0 1048.0 L611.0 1059.6" fill="none" stroke="#000" stroke-width="1.3"/><rect x="603.3" y="1058.6" width="18.4" height="9.8" fill="#000"/><rect x="604.3" y="1059.6" width="16.4" height="7.8" fill="#ff80ff"/><rect x="606.3" y="1060.6" width="12.4" height="5.8" fill="#ffff00"/><rect x="610.0" y="1061.6" width="5.0" height="3.8" fill="#50501a"/><circle cx="606.0" cy="1072.0" r="4" fill="#3366ff" stroke="#000" stroke-width="1" stroke-dasharray="2 1.2"/><circle cx="606.0" cy="1072.0" r="2.0" fill="#7d7d6e"/><circle cx="617.0" cy="1073.0" r="2.0" fill="#7d7d6e"/><circle cx="631.5" cy="997.0" r="2.0" fill="#7d7d6e"/><circle cx="632.0" cy="1034.0" r="2.0" fill="#7d7d6e"/><circle cx="626.0" cy="1042.0" r="2.0" fill="#7d7d6e"/><path d="M621.2 899.0 L621.2 941.0 L679.0 994.6" fill="none" stroke="#000" stroke-width="1.3"/><path d="M689.0 1043.5 L700.0 1043.5" fill="none" stroke="#000" stroke-width="1.2"/><text x="678.0" y="1075.0" font-size="16" fill="#c8ffff" textLength="14.6" lengthAdjust="spacingAndGlyphs" shape-rendering="auto">X1</text><g shape-rendering="auto"><circle cx="705.9" cy="1072.5" r="5.6" fill="#ff0000"/></g><text x="722.0" y="1060.0" font-size="13" fill="#c8ffff" transform="rotate(90 722.0 1060.0)" shape-rendering="auto">1</text><path d="M727.5 1078.0 L727.5 1062.0 L736.0 1062.0" fill="none" stroke="#c8ffff" stroke-width="1"/><rect x="544.2" y="808.5" width="121.3" height="36.5" fill="none" stroke="#c8ffff" stroke-width="1"/><path d="M548 812 L566 830 H578 M632 830 H644 Q664 826 666 808" fill="none" stroke="#ffff00" stroke-width="1" shape-rendering="auto"/><rect x="577.7" y="812.7" width="55.3" height="40.3" fill="#000"/><rect x="578.7" y="813.7" width="53.3" height="38.3" fill="#ff80ff"/><rect x="580.7" y="818.7" width="50.3" height="25.0" fill="#e8e800"/><rect x="592.5" y="815.5" width="25.0" height="4.0" fill="none" stroke="#ffff00" stroke-width="1"/><rect x="544.0" y="857.7" width="20.0" height="36.3" fill="#000"/><rect x="545.0" y="869.7" width="18.0" height="12.3" fill="#3366ff"/><rect x="545.0" y="858.7" width="18.0" height="11.0" fill="#ff80ff"/><rect x="546.0" y="862.5" width="16.0" height="7.1" fill="#ffff00"/><rect x="545.0" y="882.0" width="18.0" height="11.0" fill="#8080c0"/><rect x="546.0" y="882.0" width="16.0" height="6.6" fill="#80e880"/><rect x="546.0" y="864.1" width="16.0" height="23.4" fill="none" stroke="#ffff00" stroke-width="1"/><rect x="569.0" y="857.7" width="20.0" height="36.3" fill="#000"/><rect x="570.0" y="869.7" width="18.0" height="12.3" fill="#3366ff"/><rect x="570.0" y="858.7" width="18.0" height="11.0" fill="#ff80ff"/><rect x="571.0" y="862.5" width="16.0" height="7.1" fill="#ffff00"/><rect x="570.0" y="882.0" width="18.0" height="11.0" fill="#8080c0"/><rect x="571.0" y="882.0" width="16.0" height="6.6" fill="#80e880"/><rect x="571.0" y="864.1" width="16.0" height="23.4" fill="none" stroke="#ffff00" stroke-width="1"/><rect x="594.0" y="857.7" width="20.0" height="36.3" fill="#000"/><rect x="595.0" y="869.7" width="18.0" height="12.3" fill="#3366ff"/><rect x="595.0" y="858.7" width="18.0" height="11.0" fill="#ff80ff"/><rect x="596.0" y="862.5" width="16.0" height="7.1" fill="#ffff00"/><rect x="595.0" y="882.0" width="18.0" height="11.0" fill="#8080c0"/><rect x="596.0" y="882.0" width="16.0" height="6.6" fill="#80e880"/><rect x="596.0" y="864.1" width="16.0" height="23.4" fill="none" stroke="#ffff00" stroke-width="1"/><rect x="630.0" y="860.0" width="24.7" height="51.7" fill="#000"/><rect x="631.0" y="876.9" width="22.7" height="17.9" fill="#3366ff"/><rect x="631.0" y="861.0" width="22.7" height="15.9" fill="#8080c0"/><rect x="632.0" y="867.4" width="20.7" height="9.5" fill="#80e880"/><rect x="631.0" y="894.8" width="22.7" height="15.9" fill="#ff80ff"/><rect x="632.0" y="894.8" width="20.7" height="10.3" fill="#ffff00"/><rect x="632.0" y="868.7" width="20.7" height="34.4" fill="none" stroke="#ffff00" stroke-width="1"/><text x="645.0" y="895.0" font-size="5.5" fill="#ffff00" transform="rotate(-90 645.0 895.0)" shape-rendering="auto">R40</text><path d="M613.0 874.0 L631.0 874.0" fill="none" stroke="#000" stroke-width="1.3"/><path d="M654.0 874.0 L696.0 874.0 L696.0 847.5 L735.5 810.0" fill="none" stroke="#000" stroke-width="1.3"/><rect x="668.7" y="857.5" width="11.3" height="11.5" fill="#8080c0"/><rect x="668.2" y="857.0" width="12.3" height="12.5" fill="none" stroke="#444" stroke-width="1"/><rect x="561.0" y="896.0" width="11.5" height="12.0" fill="#8080c0"/><rect x="560.5" y="895.5" width="12.5" height="13.0" fill="none" stroke="#444" stroke-width="1"/><rect x="636.0" y="925.0" width="12.7" height="12.0" fill="#8080c0"/><rect x="635.5" y="924.5" width="13.7" height="13.0" fill="none" stroke="#444" stroke-width="1"/><text x="662.5" y="889.5" font-size="16.5" fill="#c8ffff" textLength="30.0" lengthAdjust="spacingAndGlyphs" shape-rendering="auto">3V3</text><text x="549.5" y="925.0" font-size="16.5" fill="#c8ffff" textLength="31.0" lengthAdjust="spacingAndGlyphs" shape-rendering="auto">GND</text><text x="622.0" y="955.5" font-size="16.5" fill="#c8ffff" textLength="41.0" lengthAdjust="spacingAndGlyphs" shape-rendering="auto">S3V3</text><circle cx="538.0" cy="900.0" r="2.0" fill="#7d7d6e"/><circle cx="554.0" cy="900.0" r="2.0" fill="#7d7d6e"/><circle cx="577.0" cy="900.0" r="2.0" fill="#7d7d6e"/><circle cx="589.0" cy="900.0" r="2.0" fill="#7d7d6e"/><circle cx="600.0" cy="900.0" r="2.0" fill="#7d7d6e"/><circle cx="612.0" cy="900.0" r="2.0" fill="#7d7d6e"/><circle cx="539.0" cy="881.0" r="2.0" fill="#7d7d6e"/><circle cx="619.0" cy="886.0" r="2.0" fill="#7d7d6e"/><circle cx="554.0" cy="849.0" r="2.0" fill="#7d7d6e"/><circle cx="487.0" cy="820.0" r="4" fill="#3366ff" stroke="#000" stroke-width="1" stroke-dasharray="2 1.2"/><circle cx="487.0" cy="820.0" r="2.0" fill="#7d7d6e"/><circle cx="503.0" cy="818.0" r="2.0" fill="#7d7d6e"/><rect x="709.0" y="849.7" width="56.5" height="55.8" fill="#000"/><rect x="710.0" y="850.7" width="54.5" height="53.8" fill="#ffff00"/><rect x="763.3" y="850.7" width="1.2" height="53.8" fill="#80ffff"/><path d="M698.7 808.0 L698.7 1078.0" fill="none" stroke="#808080" stroke-width="1"/><path d="M700.5 825.0 L700.5 997.0" fill="none" stroke="#ffff00" stroke-width="1"/><path d="M711.2 808.0 L711.2 832.5 L717.0 836.0 L717.0 843.0 L720.0 843.0 L720.0 850.0" fill="none" stroke="#ffff00" stroke-width="1"/><path d="M731.5 808.0 L735.5 808.0 L735.5 838.0 L721.0 838.0 L721.0 843.0" fill="none" stroke="#ffff00" stroke-width="1"/><path d="M720.0 904.5 L720.0 997.0" fill="none" stroke="#ffff00" stroke-width="1"/><path d="M707.5 997.0 L707.5 918.7 L720.0 918.7" fill="none" stroke="#c8ffff" stroke-width="1"/><path d="M702.0 997.5 L702.0 1078.0" fill="none" stroke="#ffff00" stroke-width="1.2"/><path d="M702.0 997.0 L739.4 997.0 L739.4 976.0" fill="none" stroke="#ffff00" stroke-width="1"/><path d="M700.5 902.5 L706.0 907.0 L811.0 907.0 L826.0 892.0" fill="none" stroke="#000" stroke-width="1.5"/><rect x="885.3" y="808.0" width="7.3" height="18.0" fill="#000"/><rect x="896.5" y="808.0" width="1.2" height="18.0" fill="#000"/><rect x="831.5" y="826.0" width="51.5" height="7.5" fill="#000"/><rect x="861.0" y="833.0" width="22.0" height="11.0" fill="#000"/><rect x="858.0" y="849.5" width="13.5" height="14.5" fill="#000"/><rect x="855.3" y="824.0" width="2.0" height="28.0" fill="#3366ff"/><rect x="866.0" y="832.0" width="17.0" height="14.0" fill="#000"/><rect x="896.0" y="826.5" width="70.0" height="1.8" fill="#000"/><rect x="896.0" y="830.3" width="70.0" height="1.7" fill="#000"/><rect x="853.0" y="846.0" width="4.0" height="22.0" fill="#000"/><path d="M812.5 808.0 L812.5 825.0 L853.7 825.0" fill="none" stroke="#000" stroke-width="1.3"/><path d="M872.5 865.0 L872.5 958.0" fill="none" stroke="#000" stroke-width="1.3"/><path d="M857.0 858.0 L872.5 858.0 L872.5 866.0" fill="none" stroke="#000" stroke-width="1.3"/><rect x="852.7" y="807.7" width="8.3" height="17.8" fill="#000"/><rect x="853.7" y="808.7" width="6.3" height="15.8" fill="#ff80ff"/><rect x="854.7" y="810.7" width="4.3" height="11.8" fill="#ffff00"/><rect x="855.7" y="814.6" width="2.3" height="4.0" fill="#50501a"/><rect x="831.5" y="830.0" width="9.0" height="17.0" fill="#000"/><rect x="832.5" y="831.0" width="7.0" height="15.0" fill="#ff80ff"/><rect x="833.5" y="833.0" width="5.0" height="11.0" fill="#ffff00"/><rect x="834.5" y="836.5" width="3.0" height="4.0" fill="#50501a"/><rect x="846.5" y="831.0" width="20.5" height="15.0" fill="#000"/><rect x="848.0" y="832.5" width="17.5" height="12.0" fill="none" stroke="#ffff00" stroke-width="1.2"/><rect x="851.0" y="835.0" width="12.0" height="7.0" fill="#8a8a20"/><rect x="862.0" y="834.0" width="3.0" height="3.0" fill="#ff0000"/><rect x="844.0" y="851.0" width="15.7" height="8.7" fill="#000"/><rect x="845.0" y="852.0" width="13.7" height="6.7" fill="#ff80ff"/><rect x="847.0" y="853.0" width="9.7" height="4.7" fill="#ffff00"/><rect x="849.4" y="854.0" width="5.0" height="2.7" fill="#50501a"/><rect x="881.0" y="825.0" width="16.0" height="9.0" fill="#000"/><rect x="882.0" y="826.0" width="14.0" height="7.0" fill="#ff80ff"/><rect x="884.0" y="827.0" width="10.0" height="5.0" fill="#ffff00"/><rect x="886.5" y="828.0" width="5.0" height="3.0" fill="#50501a"/><rect x="881.0" y="837.2" width="16.0" height="9.0" fill="#000"/><rect x="882.0" y="838.2" width="14.0" height="7.0" fill="#ff80ff"/><rect x="884.0" y="839.2" width="10.0" height="5.0" fill="#ffff00"/><rect x="886.5" y="840.2" width="5.0" height="3.0" fill="#50501a"/><rect x="881.0" y="851.0" width="16.0" height="9.0" fill="#000"/><rect x="882.0" y="852.0" width="14.0" height="7.0" fill="#ff80ff"/><rect x="884.0" y="853.0" width="10.0" height="5.0" fill="#ffff00"/><rect x="886.5" y="854.0" width="5.0" height="3.0" fill="#50501a"/><rect x="826.0" y="866.0" width="36.0" height="20.0" fill="#000"/><rect x="837.9" y="867.0" width="12.2" height="18.0" fill="#3366ff"/><rect x="827.0" y="867.0" width="10.9" height="18.0" fill="#8080c0"/><rect x="831.4" y="868.0" width="6.5" height="16.0" fill="#80e880"/><rect x="850.1" y="867.0" width="10.9" height="18.0" fill="#ff80ff"/><rect x="850.1" y="868.0" width="7.1" height="16.0" fill="#ffff00"/><rect x="832.4" y="868.0" width="23.2" height="16.0" fill="none" stroke="#ffff00" stroke-width="1"/><text x="800.0" y="861.0" font-size="16.5" fill="#c8ffff" textLength="20.0" lengthAdjust="spacingAndGlyphs" shape-rendering="auto">U9</text><text x="879.5" y="876.0" font-size="16.5" fill="#c8ffff" textLength="20.0" lengthAdjust="spacingAndGlyphs" shape-rendering="auto">D6</text><circle cx="825.0" cy="843.0" r="2.0" fill="#7d7d6e"/><circle cx="835.0" cy="855.0" r="2.0" fill="#7d7d6e"/><circle cx="863.0" cy="855.0" r="2.0" fill="#7d7d6e"/><circle cx="901.0" cy="840.0" r="2.0" fill="#7d7d6e"/><circle cx="876.0" cy="814.0" r="2.0" fill="#7d7d6e"/><circle cx="868.0" cy="818.0" r="2.0" fill="#7d7d6e"/><circle cx="833.0" cy="890.0" r="2.0" fill="#7d7d6e"/><circle cx="855.0" cy="889.0" r="2.0" fill="#7d7d6e"/><path d="M967.0 470.0 L979.0 462.0 L990.0 453.5 L1044.0 453.5 L1044.0 459.5 L993.0 459.5 L985.0 466.0 L985.0 478.0 L976.0 490.0 L976.0 500.0 L967.0 500.0Z" fill="#000"/><path d="M967.0 480.0 L981.5 468.0 L981.5 463.0 L991.5 456.5 L1044.0 456.5" fill="none" stroke="#3366ff" stroke-width="1.4"/><path d="M987.0 500.0 L1000.0 496.0 L1031.0 496.0 L1031.0 505.0 L1037.0 508.0 L1037.0 524.0 L1031.0 530.0 L1031.0 562.0 L1008.0 562.0 L1000.0 575.0 L987.0 575.0Z" fill="#000"/><path d="M967.0 572.0 L1000.0 572.0 L1014.0 586.0 L1014.0 612.0 L967.0 612.0Z" fill="#000"/><path d="M988.0 509.0 L994.0 509.0 L1003.0 500.0 L1003.0 496.0" fill="none" stroke="#3366ff" stroke-width="1.6"/><path d="M988.0 520.0 L997.0 520.0 L1003.0 514.5 L1023.0 514.5" fill="none" stroke="#3366ff" stroke-width="1.6"/><path d="M988.0 526.0 L1016.0 526.0 L1024.0 518.0" fill="none" stroke="#3366ff" stroke-width="1.6"/><path d="M988.0 532.0 L1020.0 532.0 L1031.0 521.0" fill="none" stroke="#3366ff" stroke-width="1.6"/><path d="M988.0 537.5 L1012.0 537.5 L1023.5 526.0" fill="none" stroke="#3366ff" stroke-width="1.6"/><path d="M988.0 543.5 L1005.0 543.5 L1022.0 560.0" fill="none" stroke="#3366ff" stroke-width="1.6"/><path d="M988.0 549.0 L996.0 549.0" fill="none" stroke="#3366ff" stroke-width="1.6"/><path d="M988.0 555.0 L996.0 555.0 L1003.0 562.0 L1003.0 566.0" fill="none" stroke="#3366ff" stroke-width="1.6"/><path d="M967.0 575.0 L975.5 583.0 L975.5 588.0" fill="none" stroke="#3366ff" stroke-width="1.6"/><path d="M970.0 568.0 L987.0 585.0 L987.0 588.0" fill="none" stroke="#3366ff" stroke-width="1.6"/><path d="M978.0 573.0 L998.5 586.0 L998.5 588.0" fill="none" stroke="#3366ff" stroke-width="1.6"/><path d="M992.0 573.0 L1010.4 586.0 L1010.4 588.0" fill="none" stroke="#3366ff" stroke-width="1.6"/><path d="M1031.0 533.0 L1037.0 533.0" fill="none" stroke="#3366ff" stroke-width="1.6"/><path d="M1031.0 552.5 L1037.0 552.5" fill="none" stroke="#3366ff" stroke-width="1.6"/><circle cx="994.0" cy="528.3" r="3.5" fill="#3366ff"/><circle cx="994.0" cy="528.3" r="2.0" fill="#7d7d6e"/><circle cx="1007.0" cy="528.3" r="3.5" fill="#3366ff"/><circle cx="1007.0" cy="528.3" r="2.0" fill="#7d7d6e"/><path d="M1031.0 552.5 L1058.0 552.5 L1066.0 560.0" fill="none" stroke="#000" stroke-width="5"/><path d="M1031.0 552.5 L1058.0 552.5 L1066.0 560.0" fill="none" stroke="#3366ff" stroke-width="2"/><rect x="976.0" y="497.0" width="9.5" height="73.0" fill="#3366ff"/><rect x="977.5" y="497.9" width="6.5" height="70.6" fill="none" stroke="#ffff00" stroke-width="1.2"/><rect x="984.8" y="504.9" width="3.7" height="3.0" fill="#ff80ff"/><rect x="978.7" y="505.4" width="4.6" height="2.0" fill="#ffff00"/><rect x="984.8" y="510.9" width="3.7" height="3.0" fill="#ff80ff"/><rect x="978.7" y="511.4" width="4.6" height="2.0" fill="#ffff00"/><rect x="984.8" y="516.8" width="3.7" height="3.0" fill="#ff80ff"/><rect x="978.7" y="517.3" width="4.6" height="2.0" fill="#ffff00"/><rect x="984.8" y="522.8" width="3.7" height="3.0" fill="#ff80ff"/><rect x="978.7" y="523.2" width="4.6" height="2.0" fill="#ffff00"/><rect x="984.8" y="528.7" width="3.7" height="3.0" fill="#ff80ff"/><rect x="978.7" y="529.2" width="4.6" height="2.0" fill="#ffff00"/><rect x="984.8" y="534.6" width="3.7" height="3.0" fill="#ff80ff"/><rect x="978.7" y="535.1" width="4.6" height="2.0" fill="#ffff00"/><rect x="984.8" y="540.6" width="3.7" height="3.0" fill="#ff80ff"/><rect x="978.7" y="541.1" width="4.6" height="2.0" fill="#ffff00"/><rect x="984.8" y="546.5" width="3.7" height="3.0" fill="#ff80ff"/><rect x="978.7" y="547.0" width="4.6" height="2.0" fill="#ffff00"/><rect x="984.8" y="552.5" width="3.7" height="3.0" fill="#ff80ff"/><rect x="978.7" y="553.0" width="4.6" height="2.0" fill="#ffff00"/><rect x="984.8" y="558.4" width="3.7" height="3.0" fill="#ff80ff"/><rect x="978.7" y="558.9" width="4.6" height="2.0" fill="#ffff00"/><rect x="967.0" y="499.0" width="4.0" height="4.6" fill="#ff80ff"/><rect x="972.0" y="499.0" width="4.0" height="4.6" fill="#80e880"/><rect x="978.0" y="498.5" width="6.0" height="5.1" fill="#ff0000"/><rect x="967.0" y="563.0" width="4.0" height="9.8" fill="#ff80ff"/><rect x="973.0" y="563.0" width="4.0" height="9.8" fill="#ffff00"/><rect x="991.7" y="471.0" width="30.3" height="14.0" fill="#000"/><rect x="1001.8" y="472.0" width="10.2" height="12.0" fill="#3366ff"/><rect x="992.7" y="472.0" width="9.1" height="12.0" fill="#ff80ff"/><rect x="995.9" y="473.0" width="5.9" height="10.0" fill="#ffff00"/><rect x="1011.9" y="472.0" width="9.1" height="12.0" fill="#8080c0"/><rect x="1011.9" y="473.0" width="5.4" height="10.0" fill="#80e880"/><rect x="997.3" y="473.0" width="19.1" height="10.0" fill="none" stroke="#ffff00" stroke-width="1"/><rect x="991.7" y="565.5" width="30.3" height="13.2" fill="#000"/><rect x="1001.8" y="566.5" width="10.2" height="11.2" fill="#3366ff"/><rect x="992.7" y="566.5" width="9.1" height="11.2" fill="#ff80ff"/><rect x="995.9" y="567.5" width="5.9" height="9.2" fill="#ffff00"/><rect x="1011.9" y="566.5" width="9.1" height="11.2" fill="#8080c0"/><rect x="1011.9" y="567.5" width="5.4" height="9.2" fill="#80e880"/><rect x="997.3" y="567.5" width="19.1" height="9.2" fill="none" stroke="#ffff00" stroke-width="1"/><rect x="995.0" y="494.0" width="12.6" height="12.0" fill="#8080c0"/><rect x="995.0" y="549.0" width="12.6" height="11.5" fill="#8080c0"/><text x="1002.0" y="503.0" font-size="4.5" fill="#ffff00" transform="rotate(-90 1002.0 503.0)" shape-rendering="auto">TP15</text><text x="1006.0" y="553.0" font-size="4.5" fill="#ffff00" transform="rotate(180 1006.0 553.0)" shape-rendering="auto">TP14</text><rect x="992.6" y="510.0" width="18.4" height="9.6" fill="#000"/><rect x="993.6" y="511.0" width="16.4" height="7.6" fill="#ff80ff"/><rect x="995.6" y="512.0" width="12.4" height="5.6" fill="#ffff00"/><rect x="999.3" y="513.0" width="5.0" height="3.6" fill="#50501a"/><rect x="1022.6" y="500.0" width="9.7" height="17.3" fill="#000"/><rect x="1023.6" y="501.0" width="7.7" height="15.3" fill="#ff80ff"/><rect x="1024.6" y="503.0" width="5.7" height="11.3" fill="#ffff00"/><rect x="1025.6" y="506.6" width="3.7" height="4.0" fill="#50501a"/><rect x="1022.6" y="521.0" width="9.7" height="18.6" fill="#000"/><rect x="1023.6" y="522.0" width="7.7" height="16.6" fill="#ff80ff"/><rect x="1024.6" y="524.0" width="5.7" height="12.6" fill="#ffff00"/><rect x="1025.6" y="528.3" width="3.7" height="4.0" fill="#50501a"/><rect x="1022.6" y="543.0" width="9.7" height="19.0" fill="#000"/><rect x="1023.6" y="544.0" width="7.7" height="17.0" fill="#ff80ff"/><rect x="1024.6" y="546.0" width="5.7" height="13.0" fill="#ffff00"/><rect x="1025.6" y="550.5" width="3.7" height="4.0" fill="#50501a"/><rect x="1036.3" y="501.8" width="21.0" height="24.2" fill="#000"/><rect x="1037.3" y="502.8" width="19.0" height="22.2" fill="#ff80ff"/><rect x="1040.3" y="508.3" width="14.0" height="15.0" fill="#ffff00"/><rect x="1065.0" y="501.8" width="21.0" height="24.2" fill="#000"/><rect x="1066.0" y="502.8" width="19.0" height="22.2" fill="#ff80ff"/><rect x="1069.0" y="508.3" width="14.0" height="15.0" fill="#ffff00"/><rect x="1036.3" y="558.5" width="21.0" height="24.2" fill="#000"/><rect x="1037.3" y="559.5" width="19.0" height="22.2" fill="#ff80ff"/><rect x="1040.3" y="565.0" width="14.0" height="15.0" fill="#ffff00"/><rect x="1065.0" y="558.5" width="21.0" height="24.2" fill="#000"/><rect x="1066.0" y="559.5" width="19.0" height="22.2" fill="#8080c0"/><rect x="1068.0" y="562.5" width="15.0" height="16.0" fill="#80e880"/><rect x="1071.3" y="567.0" width="12.0" height="10.7" fill="#ff2020"/><rect x="1040.5" y="507.5" width="42.6" height="71.0" fill="none" stroke="#80ffff" stroke-width="1.2"/><text x="1064.0" y="545.0" font-size="5.5" fill="#ffff00" transform="rotate(-90 1064.0 545.0)" shape-rendering="auto">Y2</text><rect x="971.0" y="586.7" width="9.0" height="17.3" fill="#000"/><rect x="972.0" y="587.7" width="7.0" height="15.3" fill="#ff80ff"/><rect x="973.0" y="589.7" width="5.0" height="11.3" fill="#ffff00"/><rect x="974.0" y="593.4" width="3.0" height="4.0" fill="#50501a"/><rect x="982.5" y="586.7" width="9.0" height="17.3" fill="#000"/><rect x="983.5" y="587.7" width="7.0" height="15.3" fill="#ff80ff"/><rect x="984.5" y="589.7" width="5.0" height="11.3" fill="#ffff00"/><rect x="985.5" y="593.4" width="3.0" height="4.0" fill="#50501a"/><rect x="994.0" y="586.7" width="9.0" height="17.3" fill="#000"/><rect x="995.0" y="587.7" width="7.0" height="15.3" fill="#ff80ff"/><rect x="996.0" y="589.7" width="5.0" height="11.3" fill="#ffff00"/><rect x="997.0" y="593.4" width="3.0" height="4.0" fill="#50501a"/><rect x="1005.9" y="586.7" width="9.0" height="17.3" fill="#000"/><rect x="1006.9" y="587.7" width="7.0" height="15.3" fill="#ff80ff"/><rect x="1007.9" y="589.7" width="5.0" height="11.3" fill="#ffff00"/><rect x="1008.9" y="593.4" width="3.0" height="4.0" fill="#50501a"/><rect x="993.6" y="616.0" width="11.4" height="12.6" fill="#8080c0"/><rect x="993.1" y="615.5" width="12.4" height="13.6" fill="none" stroke="#444" stroke-width="1"/><rect x="1047.8" y="615.5" width="11.8" height="12.5" fill="#8080c0"/><rect x="1047.3" y="615.0" width="12.8" height="13.5" fill="none" stroke="#444" stroke-width="1"/><path d="M1008.0 494.0 L1020.0 490.0" fill="none" stroke="#c8ffff" stroke-width="1.3"/><path d="M1008.0 555.0 L1012.7 555.0 L1025.5 568.6 L1025.5 583.0 L1035.5 592.6" fill="none" stroke="#c8ffff" stroke-width="1.3"/><text x="1024.5" y="487.7" font-size="17.5" fill="#c8ffff" textLength="66.5" lengthAdjust="spacingAndGlyphs" shape-rendering="auto">ANAOUT</text><text x="1090.0" y="551.0" font-size="17" fill="#c8ffff" textLength="19.0" lengthAdjust="spacingAndGlyphs" shape-rendering="auto">Y2</text><text x="1042.0" y="604.6" font-size="16" fill="#c8ffff" textLength="39.0" lengthAdjust="spacingAndGlyphs" shape-rendering="auto">XCLK</text><text x="1009.0" y="626.0" font-size="16.5" fill="#c8ffff" textLength="31.0" lengthAdjust="spacingAndGlyphs" shape-rendering="auto">GND</text><text x="1065.8" y="622.3" font-size="16" fill="#c8ffff" textLength="135.0" lengthAdjust="spacingAndGlyphs" shape-rendering="auto">3V3_J.31_33_35</text><path d="M967.0 631.5 L1520.5 631.5" fill="none" stroke="#808080" stroke-width="1"/><path d="M1052.0 624.0 L967.0 711.6" fill="none" stroke="#000" stroke-width="1.6"/><path d="M1058.0 628.0 L967.0 721.6" fill="none" stroke="#000" stroke-width="0"/><circle cx="997.0" cy="466.0" r="2.0" fill="#7d7d6e"/><circle cx="1015.0" cy="466.0" r="2.0" fill="#7d7d6e"/><circle cx="1027.0" cy="495.0" r="2.0" fill="#7d7d6e"/><circle cx="1089.0" cy="497.0" r="2.0" fill="#7d7d6e"/><circle cx="1089.0" cy="514.0" r="2.0" fill="#7d7d6e"/><circle cx="994.0" cy="529.0" r="2.0" fill="#7d7d6e"/><circle cx="1007.0" cy="529.0" r="2.0" fill="#7d7d6e"/><circle cx="1035.0" cy="535.0" r="2.0" fill="#7d7d6e"/><circle cx="1035.0" cy="546.0" r="2.0" fill="#7d7d6e"/><circle cx="1032.0" cy="570.0" r="2.0" fill="#7d7d6e"/><circle cx="998.0" cy="581.0" r="2.0" fill="#7d7d6e"/><circle cx="1016.0" cy="581.0" r="2.0" fill="#7d7d6e"/><circle cx="1046.0" cy="587.0" r="2.0" fill="#7d7d6e"/><circle cx="974.0" cy="609.0" r="2.0" fill="#7d7d6e"/><circle cx="998.0" cy="608.0" r="2.0" fill="#7d7d6e"/><circle cx="1009.0" cy="608.0" r="2.0" fill="#7d7d6e"/><circle cx="986.0" cy="618.0" r="2.0" fill="#7d7d6e"/><circle cx="1147.0" cy="459.0" r="2.0" fill="#7d7d6e"/><circle cx="1001.0" cy="711.0" r="4" fill="#3366ff" stroke="#000" stroke-width="1" stroke-dasharray="2 1.2"/><circle cx="1001.0" cy="711.0" r="2.0" fill="#7d7d6e"/><circle cx="995.0" cy="724.0" r="4" fill="#3366ff" stroke="#000" stroke-width="1" stroke-dasharray="2 1.2"/><circle cx="995.0" cy="724.0" r="2.0" fill="#7d7d6e"/><circle cx="967.0" cy="730.0" r="4" fill="#3366ff" stroke="#000" stroke-width="1" stroke-dasharray="2 1.2"/><circle cx="967.0" cy="730.0" r="2.0" fill="#7d7d6e"/><path d="M1141.0 632.0 L1150.0 632.0 L1163.0 645.0" fill="none" stroke="#000" stroke-width="1.3"/><rect x="967.0" y="381.8" width="14.8" height="68.2" fill="#000"/><rect x="981.0" y="428.0" width="11.0" height="22.0" fill="#000"/><rect x="967.0" y="388.0" width="9.7" height="21.0" fill="#8080c0"/><path d="M967.0 365.0 L999.0 365.0 L1013.6 379.0 L1013.6 428.0 L1006.0 428.0" fill="none" stroke="#000" stroke-width="1.3"/><rect x="988.0" y="408.0" width="19.0" height="41.0" fill="#000"/><rect x="990.0" y="409.0" width="7.0" height="39.0" fill="#8080c0"/><rect x="997.0" y="410.0" width="8.0" height="37.0" fill="#80e880"/><rect x="1063.0" y="409.0" width="16.6" height="39.0" fill="#ff80ff"/><rect x="1066.0" y="410.0" width="7.0" height="37.0" fill="#ffff00"/><rect x="997.8" y="410.5" width="66.2" height="36.3" fill="none" stroke="#ffff00" stroke-width="1.3"/><text x="1034.5" y="431.5" font-size="7.5" fill="#ffff00" text-anchor="middle" shape-rendering="auto">R13</text><path d="M984.0 375.5 L997.0 375.5" fill="none" stroke="#c8ffff" stroke-width="1.5"/><path d="M990.5 369.0 L990.5 382.0" fill="none" stroke="#c8ffff" stroke-width="1.5"/><rect x="967" y="453" width="174" height="320" fill="#fff" opacity=".17"/><path d="M967 452.500H1140.500V773.500H967" fill="none" stroke="#e8ecff" stroke-width="1"/><path d="M967 452.500H1140.500V773.500H967" fill="none" stroke="#ffff00" stroke-width="1" stroke-dasharray="6 20"/><path d="M401 121.500H1569.500V1089.500H401Z" fill="none" stroke="#008040" stroke-width="1"/><path d="M401 121.500H1569.500V1089.500H401Z" fill="none" stroke="#ff80c0" stroke-width="1" stroke-dasharray="6 20"/><path d="M1569.500 533.500 H1565 Q1558 535 1557.500 546 V664 Q1558 675 1565 676.500 H1569.500" fill="none" stroke="#ff80c0" stroke-width="1"/><rect x="1548" y="320" width="30" height="362" fill="none"/><path d="M1569.500 537V653" stroke="#fff" stroke-width="1" stroke-dasharray="22 7"/><rect x="1564" y="119" width="5" height="5" fill="none" stroke="#fff" stroke-width="1"/><path d="M1563 1091l6-6" stroke="#fff"/><path d="M401 1089.500V1041M395 1048l6-8 10 12" fill="none" stroke="#00ffff" stroke-width="1"/><path d="M401 1089.500H449M438 1078l12 11.500-11 12" fill="none" stroke="#00ffff" stroke-width="1"/><path d="M401 1089.500H440" stroke="#ff0000" stroke-width="1"/><path d="M399.500 1019l6 8 6.500-8M405.500 1027v7" fill="none" stroke="#00ffff" stroke-width="1.6"/><path d="M455 1083l12 13.500M467 1083l-12 13.500" fill="none" stroke="#00ffff" stroke-width="1.600"/></svg></div>
<div class="abs" style="left:206px;top:102px;width:761px;height:705px;background:#f0f0f0;border:1px solid #f4f4f4;border-radius:8px;box-shadow:0 1px 5px rgba(0,0,0,.45);overflow:hidden"><div class="abs" style="left:-1px;top:-1px;width:761px;height:705px"><svg class="abs" style="left:6px;top:6px" width="17" height="17" viewBox="0 0 18 18"><path d="M1 2 L5 2 L8 12 L13 1 L17 1 L9 17 L6 17Z" fill="#f5b400"/><path d="M3 3 L7 14" stroke="#ffe680" stroke-width="1.2"/><path d="M9 14 L14 6" stroke="#333" stroke-width="2.2"/></svg><span class="abs" style="left:29px;top:9px;font-size:12.5px;line-height:15px;color:#7a7a7a;white-space:nowrap;transform-origin:0 0;transform:scaleX(0.9500);">DFM Report</span><svg class="abs" style="left:740px;top:9px" width="12" height="12"><path d="M1 1l10 10M11 1L1 11" stroke="#6a6a6a" stroke-width="1"/></svg><div class="abs" style="left:3px;top:33px;width:755px;height:41px;border:1px solid #a0a0a0;background:#f0f0f0;box-shadow:1px 1px 0 #fff"></div><div class="abs" style="left:5px;top:35px;width:38px;height:37px;background:#cce4f7;border:1px solid #99c9ef;border-radius:2px"></div><div class="abs" style="left:168px;top:35px;width:39px;height:37px;background:#cce4f7;border:1px solid #99c9ef;border-radius:2px"></div><div class="abs" style="left:163px;top:36px;width:1px;height:35px;background:#8f8f8f"></div><div class="abs" style="left:164px;top:36px;width:1px;height:35px;background:#fff"></div><div class="abs" style="left:248px;top:36px;width:1px;height:35px;background:#8f8f8f"></div><div class="abs" style="left:249px;top:36px;width:1px;height:35px;background:#fff"></div><div class="abs" style="left:296px;top:36px;width:1px;height:35px;background:#8f8f8f"></div><div class="abs" style="left:297px;top:36px;width:1px;height:35px;background:#fff"></div><svg class="abs" style="left:0px;top:33px" width="340" height="40" viewBox="206 135 340 40"><path d="M218 153 H232 L245 161" fill="none" stroke="#0000ff" stroke-width="7" stroke-linecap="round" stroke-linejoin="round"/><path d="M256 153 H269 L280 160" fill="none" stroke="#6070d0" stroke-width="6" stroke-linecap="round" stroke-linejoin="round"/><circle cx="269" cy="153" r="3.5" fill="#0000ff"/><rect x="291.500" y="149" width="21" height="7" rx="3.5" fill="#f0f0f0" stroke="#2020ff" stroke-width="1"/><g transform="rotate(30 308 152.500)"><rect x="304.500" y="149" width="21" height="7" rx="3.500" fill="#f0f0f0" stroke="#2020ff" stroke-width="1"/></g><path d="M333 152.500H345L359 162" fill="none" stroke="#0000ff" stroke-width="1.3"/><circle cx="397" cy="158" r="13" fill="#ff9a00"/><path d="M381.500 140V172" stroke="#0000ff" stroke-width="1.3"/><path d="M379 166l6-19h5l5 19M382 160h10" fill="none" stroke="#666" stroke-width="1" opacity=".8"/><circle cx="435" cy="158" r="13" fill="#ff9a00"/><path d="M419.500 140V172" stroke="#0000ff" stroke-width="1.3"/><path d="M421 166V148h11M421 156h9" fill="none" stroke="#666" stroke-width="1" opacity=".8"/><path d="M466 144V166" stroke="#2a5fe0" stroke-width="3.5"/><path d="M468 155H490" stroke="#f0c030" stroke-width="2.2"/><path d="M491.500 148V162" stroke="#2a5fe0" stroke-width="2.2"/><g transform="translate(515,145) scale(.75)"><path d="M2 12 L16 6 L30 12 L30 24 L16 31 L2 24Z" fill="#6aa8e8" stroke="#3a78c0" stroke-width=".8"/><path d="M2 12 L16 18 L30 12 L16 6Z" fill="#a8d0f4"/><path d="M16 18V31" stroke="#3a78c0" stroke-width=".8"/><ellipse cx="12" cy="8" rx="4" ry="2" fill="#a8d0f4" stroke="#3a78c0" stroke-width=".6"/><ellipse cx="20" cy="6" rx="4" ry="2" fill="#a8d0f4" stroke="#3a78c0" stroke-width=".6"/></g></svg><div class="abs" style="left:2px;top:76px;width:756px;height:106px;border:1px solid #c8c8c8;border-radius:4px"></div><div class="abs" style="left:5px;top:85px;width:250px;height:25px;border:1px solid #c2c2c2;box-shadow:inset 1px 1px 0 #fff, 1px 1px 0 #fff"></div><div class="abs" style="left:11px;top:79px;width:25.03580078125px;height:12px;background:#f0f0f0"></div><span class="abs" style="left:13px;top:79.4px;font-size:11px;line-height:13px;color:#000;white-space:nowrap;transform-origin:0 0;transform:scaleX(0.9300);">EDA</span><div class="abs" style="left:55px;top:92px;width:12px;height:12px;background:#fff;border:1px solid #555;border-radius:2px"></div><span class="abs" style="left:71px;top:92.4px;font-size:11px;line-height:13px;color:#000;white-space:nowrap;transform-origin:0 0;transform:scaleX(0.9300);">Jump</span><div class="abs" style="left:149px;top:92px;width:12px;height:12px;background:#fff;border:1px solid #555;border-radius:2px"></div><span class="abs" style="left:165px;top:92.4px;font-size:11px;line-height:13px;color:#000;white-space:nowrap;transform-origin:0 0;transform:scaleX(0.9300);">Mini mode</span><div class="abs" style="left:5px;top:118px;width:250px;height:62px;border:1px solid #c2c2c2;box-shadow:inset 1px 1px 0 #fff, 1px 1px 0 #fff"></div><div class="abs" style="left:11px;top:112px;width:39.254628906250005px;height:12px;background:#f0f0f0"></div><span class="abs" style="left:13px;top:112.4px;font-size:11px;line-height:13px;color:#000;white-space:nowrap;transform-origin:0 0;transform:scaleX(0.9300);">Options</span><span class="abs" style="left:15px;top:135.4px;font-size:11px;line-height:13px;color:#000;white-space:nowrap;transform-origin:0 0;transform:scaleX(0.9300);">Group:</span><div class="abs" style="left:77px;top:131px;width:170px;height:21px;background:#fff;border:1px solid #7a7a7a"></div><div class="abs" style="left:227px;top:133px;width:18px;height:17px;background:#f0f0f0;border:1px solid #8a8a8a"></div><svg class="abs" style="left:232px;top:139px" width="9" height="5"><path d="M0 0h9L4.5 5z" fill="#111"/></svg><span class="abs" style="left:81px;top:135.9px;font-size:11px;line-height:13px;color:#000;white-space:nowrap;transform-origin:0 0;transform:scaleX(0.9300);">Demo_01_Brain</span><span class="abs" style="left:15px;top:160.4px;font-size:11px;line-height:13px;color:#000;white-space:nowrap;transform-origin:0 0;transform:scaleX(0.9300);">Results:</span><div class="abs" style="left:77px;top:156px;width:170px;height:21px;background:#fff;border:1px solid #7a7a7a"></div><div class="abs" style="left:227px;top:158px;width:18px;height:17px;background:#f0f0f0;border:1px solid #8a8a8a"></div><svg class="abs" style="left:232px;top:164px" width="9" height="5"><path d="M0 0h9L4.5 5z" fill="#111"/></svg><span class="abs" style="left:81px;top:160.9px;font-size:11px;line-height:13px;color:#000;white-space:nowrap;transform-origin:0 0;transform:scaleX(0.9300);">All results</span><div class="abs" style="left:259px;top:85px;width:497px;height:95px;border:1px solid #c2c2c2;box-shadow:inset 1px 1px 0 #fff, 1px 1px 0 #fff"></div><div class="abs" style="left:265px;top:79px;width:47.769941406250005px;height:12px;background:#f0f0f0"></div><span class="abs" style="left:267px;top:79.4px;font-size:11px;line-height:13px;color:#000;white-space:nowrap;transform-origin:0 0;transform:scaleX(0.9300);">Summary</span><span class="abs" style="left:274px;top:101.4px;font-size:11px;line-height:13px;color:#000;white-space:nowrap;transform-origin:0 0;transform:scaleX(0.9463);">Total Checked Items:</span><span class="abs" style="left:426px;top:101.4px;font-size:11px;line-height:13px;color:#000;white-space:nowrap;transform-origin:0 0;transform:scaleX(0.9300);">21</span><span class="abs" style="left:274px;top:127.4px;font-size:11px;line-height:13px;color:#000;white-space:nowrap;transform-origin:0 0;transform:scaleX(0.9618);">Total Results:</span><span class="abs" style="left:426px;top:127.4px;font-size:11px;line-height:13px;color:#000;white-space:nowrap;transform-origin:0 0;transform:scaleX(0.9300);">5</span><span class="abs" style="left:274px;top:153.4px;font-size:11px;line-height:13px;color:#000;white-space:nowrap;transform-origin:0 0;transform:scaleX(0.9799);">Total Defects:</span><span class="abs" style="left:426px;top:153.4px;font-size:11px;line-height:13px;color:#000;white-space:nowrap;transform-origin:0 0;transform:scaleX(0.9300);">2</span><div class="abs" style="left:3px;top:183px;width:253px;height:20px;background:#a9c9f0;border:1px solid #3a94ee"></div><span class="abs" style="left:8px;top:187.4px;font-size:11px;line-height:13px;color:#000;white-space:nowrap;transform-origin:0 0;transform:scaleX(0.9300);">Rule</span><div class="abs" style="left:260px;top:183px;width:499px;height:20px;background:#a9c9f0;border:1px solid #3a94ee"></div><span class="abs" style="left:265px;top:187.4px;font-size:11px;line-height:13px;color:#000;white-space:nowrap;transform-origin:0 0;transform:scaleX(0.9300);">Main Item -- mm</span><div class="abs" style="left:3px;top:206px;width:253px;height:157px;background:#fff;border:1px solid #3a94ee"></div><div class="abs" style="left:8px;top:231px;width:193.5px;height:17px;background:#ffff00"></div><div class="abs" style="left:203px;top:231px;width:49px;height:17px;background:#ffff00"></div><div class="abs" style="left:4px;top:248px;width:251px;height:1px;background:#e6e6e6"></div><div class="abs" style="left:4px;top:266px;width:251px;height:1px;background:#e6e6e6"></div><div class="abs" style="left:4px;top:284px;width:251px;height:1px;background:#e6e6e6"></div><div class="abs" style="left:4px;top:302px;width:251px;height:1px;background:#e6e6e6"></div><div class="abs" style="left:4px;top:320px;width:251px;height:1px;background:#e6e6e6"></div><div class="abs" style="left:4px;top:338px;width:251px;height:1px;background:#e6e6e6"></div><div class="abs" style="left:4px;top:356px;width:251px;height:1px;background:#e6e6e6"></div><div class="abs" style="left:202px;top:207px;width:1px;height:155px;background:#e6e6e6"></div><span class="abs" style="left:10px;top:213.4px;font-size:11px;line-height:13px;color:#000;white-space:nowrap;transform-origin:0 0;transform:scaleX(0.9300);">Rule Name</span><span class="abs" style="left:208px;top:213.4px;font-size:11px;line-height:13px;color:#000;white-space:nowrap;transform-origin:0 0;transform:scaleX(0.9300);">Count</span><span class="abs" style="left:10px;top:234.4px;font-size:11px;line-height:13px;color:#000;white-space:nowrap;transform-origin:0 0;transform:scaleX(0.9300);">MIXED_ASSEMBLY.rpt</span><span class="abs" style="left:208px;top:234.4px;font-size:11px;line-height:13px;color:#000;white-space:nowrap;transform-origin:0 0;transform:scaleX(0.9300);">5</span><div class="abs" style="left:260px;top:206px;width:499px;height:157px;background:#fff;border:1px solid #3a94ee"></div><div class="abs" style="left:282px;top:231px;width:474px;height:17px;background:#ffff00"></div><div class="abs" style="left:261px;top:248px;width:497px;height:1px;background:#e6e6e6"></div><div class="abs" style="left:261px;top:266px;width:497px;height:1px;background:#e6e6e6"></div><div class="abs" style="left:261px;top:284px;width:497px;height:1px;background:#e6e6e6"></div><div class="abs" style="left:261px;top:302px;width:497px;height:1px;background:#e6e6e6"></div><div class="abs" style="left:261px;top:320px;width:497px;height:1px;background:#e6e6e6"></div><div class="abs" style="left:261px;top:338px;width:497px;height:1px;background:#e6e6e6"></div><div class="abs" style="left:261px;top:356px;width:497px;height:1px;background:#e6e6e6"></div><div class="abs" style="left:521px;top:207px;width:1px;height:155px;background:#e6e6e6"></div><div class="abs" style="left:557px;top:207px;width:1px;height:155px;background:#e6e6e6"></div><div class="abs" style="left:593px;top:207px;width:1px;height:155px;background:#e6e6e6"></div><div class="abs" style="left:629px;top:207px;width:1px;height:155px;background:#e6e6e6"></div><div class="abs" style="left:665px;top:207px;width:1px;height:155px;background:#e6e6e6"></div><div class="abs" style="left:701px;top:207px;width:1px;height:155px;background:#e6e6e6"></div><span class="abs" style="left:268px;top:213.4px;font-size:11px;line-height:13px;color:#000;white-space:nowrap;transform-origin:0 0;transform:scaleX(0.9300);">Main Item Name</span><span class="abs" style="left:707px;top:213.4px;font-size:11px;line-height:13px;color:#000;white-space:nowrap;transform-origin:0 0;transform:scaleX(0.9300);">Count</span><div class="abs" style="left:528px;top:214px;width:14px;height:9px;background:#c00000"></div><div class="abs" style="left:564px;top:214px;width:14px;height:9px;background:#ff0000"></div><div class="abs" style="left:600px;top:214px;width:14px;height:9px;background:#ffc000"></div><div class="abs" style="left:636px;top:214px;width:14px;height:9px;background:#ffff00"></div><div class="abs" style="left:672px;top:214px;width:14px;height:9px;background:#92d050"></div><svg class="abs" style="left:269px;top:233px" width="12" height="14"><path d="M.5 .5H8L11.5 4V13.500H.5Z" fill="#fff" stroke="#7a93b4"/><path d="M8 .5V4H11.500" fill="none" stroke="#7a93b4"/><path d="M2.500 6h7M2.500 8h7M2.500 10h7M2.500 4h4" stroke="#d8dee8" stroke-width="1"/></svg><span class="abs" style="left:284px;top:234.4px;font-size:11px;line-height:13px;color:#000;white-space:nowrap;transform-origin:0 0;transform:scaleX(0.9991);">Distance: trace to trace</span><span class="abs" style="left:535.2px;top:234.4px;font-size:11px;line-height:13px;color:#000;white-space:nowrap;transform-origin:0 0;transform:scaleX(0.9300);">0</span><span class="abs" style="left:571.2px;top:234.4px;font-size:11px;line-height:13px;color:#000;white-space:nowrap;transform-origin:0 0;transform:scaleX(0.9300);">8</span><span class="abs" style="left:607.2px;top:234.4px;font-size:11px;line-height:13px;color:#000;white-space:nowrap;transform-origin:0 0;transform:scaleX(0.9300);">0</span><span class="abs" style="left:643.2px;top:234.4px;font-size:11px;line-height:13px;color:#000;white-space:nowrap;transform-origin:0 0;transform:scaleX(0.9300);">0</span><span class="abs" style="left:679.2px;top:234.4px;font-size:11px;line-height:13px;color:#000;white-space:nowrap;transform-origin:0 0;transform:scaleX(0.9300);">0</span><span class="abs" style="left:707px;top:234.4px;font-size:11px;line-height:13px;color:#000;white-space:nowrap;transform-origin:0 0;transform:scaleX(0.9300);">8</span><svg class="abs" style="left:269px;top:251px" width="12" height="14"><path d="M.5 .5H8L11.5 4V13.500H.5Z" fill="#fff" stroke="#7a93b4"/><path d="M8 .5V4H11.500" fill="none" stroke="#7a93b4"/><path d="M2.500 6h7M2.500 8h7M2.500 10h7M2.500 4h4" stroke="#d8dee8" stroke-width="1"/></svg><span class="abs" style="left:284px;top:252.4px;font-size:11px;line-height:13px;color:#000;white-space:nowrap;transform-origin:0 0;transform:scaleX(0.9914);">Insufficient marks on top: fiducial &lt; 2</span><span class="abs" style="left:535.2px;top:252.4px;font-size:11px;line-height:13px;color:#000;white-space:nowrap;transform-origin:0 0;transform:scaleX(0.9300);">0</span><span class="abs" style="left:571.2px;top:252.4px;font-size:11px;line-height:13px;color:#000;white-space:nowrap;transform-origin:0 0;transform:scaleX(0.9300);">1</span><span class="abs" style="left:607.2px;top:252.4px;font-size:11px;line-height:13px;color:#000;white-space:nowrap;transform-origin:0 0;transform:scaleX(0.9300);">0</span><span class="abs" style="left:643.2px;top:252.4px;font-size:11px;line-height:13px;color:#000;white-space:nowrap;transform-origin:0 0;transform:scaleX(0.9300);">0</span><span class="abs" style="left:679.2px;top:252.4px;font-size:11px;line-height:13px;color:#000;white-space:nowrap;transform-origin:0 0;transform:scaleX(0.9300);">0</span><span class="abs" style="left:707px;top:252.4px;font-size:11px;line-height:13px;color:#000;white-space:nowrap;transform-origin:0 0;transform:scaleX(0.9300);">1</span><svg class="abs" style="left:269px;top:269px" width="12" height="14"><path d="M.5 .5H8L11.5 4V13.500H.5Z" fill="#fff" stroke="#7a93b4"/><path d="M8 .5V4H11.500" fill="none" stroke="#7a93b4"/><path d="M2.500 6h7M2.500 8h7M2.500 10h7M2.500 4h4" stroke="#d8dee8" stroke-width="1"/></svg><span class="abs" style="left:284px;top:270.4px;font-size:11px;line-height:13px;color:#000;white-space:nowrap;transform-origin:0 0;transform:scaleX(0.9512);">Pad to Pad clearance Minimum</span><span class="abs" style="left:535.2px;top:270.4px;font-size:11px;line-height:13px;color:#000;white-space:nowrap;transform-origin:0 0;transform:scaleX(0.9300);">0</span><span class="abs" style="left:571.2px;top:270.4px;font-size:11px;line-height:13px;color:#000;white-space:nowrap;transform-origin:0 0;transform:scaleX(0.9300);">0</span><span class="abs" style="left:604.3px;top:270.4px;font-size:11px;line-height:13px;color:#000;white-space:nowrap;transform-origin:0 0;transform:scaleX(0.9300);">25</span><span class="abs" style="left:643.2px;top:270.4px;font-size:11px;line-height:13px;color:#000;white-space:nowrap;transform-origin:0 0;transform:scaleX(0.9300);">0</span><span class="abs" style="left:679.2px;top:270.4px;font-size:11px;line-height:13px;color:#000;white-space:nowrap;transform-origin:0 0;transform:scaleX(0.9300);">0</span><span class="abs" style="left:707px;top:270.4px;font-size:11px;line-height:13px;color:#000;white-space:nowrap;transform-origin:0 0;transform:scaleX(0.9300);">25</span><svg class="abs" style="left:269px;top:287px" width="12" height="14"><path d="M.5 .5H8L11.5 4V13.500H.5Z" fill="#fff" stroke="#7a93b4"/><path d="M8 .5V4H11.500" fill="none" stroke="#7a93b4"/><path d="M2.500 6h7M2.500 8h7M2.500 10h7M2.500 4h4" stroke="#d8dee8" stroke-width="1"/></svg><span class="abs" style="left:284px;top:288.4px;font-size:11px;line-height:13px;color:#000;white-space:nowrap;transform-origin:0 0;transform:scaleX(0.9826);">Silkscreen Legend Text to Soldermask Window...</span><span class="abs" style="left:535.2px;top:288.4px;font-size:11px;line-height:13px;color:#000;white-space:nowrap;transform-origin:0 0;transform:scaleX(0.9300);">0</span><span class="abs" style="left:568.3px;top:288.4px;font-size:11px;line-height:13px;color:#000;white-space:nowrap;transform-origin:0 0;transform:scaleX(0.9300);">16</span><span class="abs" style="left:607.2px;top:288.4px;font-size:11px;line-height:13px;color:#000;white-space:nowrap;transform-origin:0 0;transform:scaleX(0.9300);">0</span><span class="abs" style="left:643.2px;top:288.4px;font-size:11px;line-height:13px;color:#000;white-space:nowrap;transform-origin:0 0;transform:scaleX(0.9300);">0</span><span class="abs" style="left:679.2px;top:288.4px;font-size:11px;line-height:13px;color:#000;white-space:nowrap;transform-origin:0 0;transform:scaleX(0.9300);">0</span><span class="abs" style="left:707px;top:288.4px;font-size:11px;line-height:13px;color:#000;white-space:nowrap;transform-origin:0 0;transform:scaleX(0.9300);">16</span><svg class="abs" style="left:269px;top:305px" width="12" height="14"><path d="M.5 .5H8L11.5 4V13.500H.5Z" fill="#fff" stroke="#7a93b4"/><path d="M8 .5V4H11.500" fill="none" stroke="#7a93b4"/><path d="M2.500 6h7M2.500 8h7M2.500 10h7M2.500 4h4" stroke="#d8dee8" stroke-width="1"/></svg><span class="abs" style="left:284px;top:306.4px;font-size:11px;line-height:13px;color:#000;white-space:nowrap;transform-origin:0 0;transform:scaleX(0.9815);">Trace width: signal trace minimum</span><span class="abs" style="left:535.2px;top:306.4px;font-size:11px;line-height:13px;color:#000;white-space:nowrap;transform-origin:0 0;transform:scaleX(0.9300);">0</span><span class="abs" style="left:568.3px;top:306.4px;font-size:11px;line-height:13px;color:#000;white-space:nowrap;transform-origin:0 0;transform:scaleX(0.9300);">22</span><span class="abs" style="left:607.2px;top:306.4px;font-size:11px;line-height:13px;color:#000;white-space:nowrap;transform-origin:0 0;transform:scaleX(0.9300);">0</span><span class="abs" style="left:643.2px;top:306.4px;font-size:11px;line-height:13px;color:#000;white-space:nowrap;transform-origin:0 0;transform:scaleX(0.9300);">0</span><span class="abs" style="left:679.2px;top:306.4px;font-size:11px;line-height:13px;color:#000;white-space:nowrap;transform-origin:0 0;transform:scaleX(0.9300);">0</span><span class="abs" style="left:707px;top:306.4px;font-size:11px;line-height:13px;color:#000;white-space:nowrap;transform-origin:0 0;transform:scaleX(0.9300);">22</span><div class="abs" style="left:2px;top:368px;width:756px;height:12px;border:1px solid #c8c8c8;border-bottom:none;border-radius:4px 4px 0 0"></div><div class="abs" style="left:6px;top:386px;width:750px;height:241px;background:#fff;border:1px solid #3a94ee"></div><div class="abs" style="left:27px;top:411px;width:30px;height:17px;background:#ffff00"></div><div class="abs" style="left:75px;top:411px;width:3px;height:17px;background:#ffff00"></div><div class="abs" style="left:95px;top:411px;width:660px;height:17px;background:#ffff00"></div><div class="abs" style="left:7px;top:428px;width:748px;height:1px;background:#e6e6e6"></div><div class="abs" style="left:7px;top:446px;width:748px;height:1px;background:#e6e6e6"></div><div class="abs" style="left:7px;top:464px;width:748px;height:1px;background:#e6e6e6"></div><div class="abs" style="left:7px;top:482px;width:748px;height:1px;background:#e6e6e6"></div><div class="abs" style="left:7px;top:500px;width:748px;height:1px;background:#e6e6e6"></div><div class="abs" style="left:7px;top:518px;width:748px;height:1px;background:#e6e6e6"></div><div class="abs" style="left:7px;top:536px;width:748px;height:1px;background:#e6e6e6"></div><div class="abs" style="left:7px;top:554px;width:748px;height:1px;background:#e6e6e6"></div><div class="abs" style="left:7px;top:572px;width:748px;height:1px;background:#e6e6e6"></div><div class="abs" style="left:7px;top:590px;width:748px;height:1px;background:#e6e6e6"></div><div class="abs" style="left:7px;top:608px;width:748px;height:1px;background:#e6e6e6"></div><div class="abs" style="left:7px;top:626px;width:748px;height:1px;background:#e6e6e6"></div><div class="abs" style="left:57px;top:387px;width:1px;height:239px;background:#e6e6e6"></div><div class="abs" style="left:77px;top:387px;width:1px;height:239px;background:#e6e6e6"></div><div class="abs" style="left:107px;top:387px;width:1px;height:239px;background:#e6e6e6"></div><div class="abs" style="left:167px;top:387px;width:1px;height:239px;background:#e6e6e6"></div><div class="abs" style="left:227px;top:387px;width:1px;height:239px;background:#e6e6e6"></div><div class="abs" style="left:287px;top:387px;width:1px;height:239px;background:#e6e6e6"></div><div class="abs" style="left:347px;top:387px;width:1px;height:239px;background:#e6e6e6"></div><div class="abs" style="left:407px;top:387px;width:1px;height:239px;background:#e6e6e6"></div><div class="abs" style="left:467px;top:387px;width:1px;height:239px;background:#e6e6e6"></div><span class="abs" style="left:13px;top:390.9px;font-size:11px;line-height:13px;color:#000;white-space:nowrap;transform-origin:0 0;transform:scaleX(0.9300);">Index</span><span class="abs" style="left:63px;top:390.9px;font-size:11px;line-height:13px;color:#000;white-space:nowrap;transform-origin:0 0;transform:scaleX(0.9300);">P.</span><span class="abs" style="left:84px;top:390.9px;font-size:11px;line-height:13px;color:#000;white-space:nowrap;transform-origin:0 0;transform:scaleX(0.9300);">Col</span><span class="abs" style="left:113px;top:390.9px;font-size:11px;line-height:13px;color:#000;white-space:nowrap;transform-origin:0 0;transform:scaleX(0.9300);">Value</span><span class="abs" style="left:173px;top:390.9px;font-size:11px;line-height:13px;color:#000;white-space:nowrap;transform-origin:0 0;transform:scaleX(0.9300);">RecValue</span><span class="abs" style="left:233px;top:390.9px;font-size:11px;line-height:13px;color:#000;white-space:nowrap;transform-origin:0 0;transform:scaleX(0.9300);">Info1</span><span class="abs" style="left:293px;top:390.9px;font-size:11px;line-height:13px;color:#000;white-space:nowrap;transform-origin:0 0;transform:scaleX(0.9300);">Layer1</span><span class="abs" style="left:353px;top:390.9px;font-size:11px;line-height:13px;color:#000;white-space:nowrap;transform-origin:0 0;transform:scaleX(0.9300);">Info2</span><span class="abs" style="left:413px;top:390.9px;font-size:11px;line-height:13px;color:#000;white-space:nowrap;transform-origin:0 0;transform:scaleX(0.9300);">Layer2</span><span class="abs" style="left:474.5px;top:390.9px;font-size:11px;line-height:13px;color:#000;white-space:nowrap;transform-origin:0 0;transform:scaleX(0.9300);">ReMark</span><span class="abs" style="left:29.2px;top:414.4px;font-size:11px;line-height:13px;color:#000;white-space:nowrap;transform-origin:0 0;transform:scaleX(0.9300);">0</span><svg class="abs" style="left:58px;top:412px" width="16" height="15" viewBox="0 0 16 15"><path d="M1 14 L2 5 L4 3 L6 6 L5 9 L9 10 L11 8 L14 12 L14 14Z" fill="#b0b0b0" stroke="#888" stroke-width=".6"/><circle cx="12" cy="4" r="2.3" fill="#fff" stroke="#888" stroke-width=".8"/></svg><div class="abs" style="left:78px;top:415px;width:14px;height:10px;background:#ff0000"></div><span class="abs" style="left:113px;top:414.4px;font-size:11px;line-height:13px;color:#000;white-space:nowrap;transform-origin:0 0;transform:scaleX(0.9300);">0.127mm</span><span class="abs" style="left:173px;top:414.4px;font-size:11px;line-height:13px;color:#000;white-space:nowrap;transform-origin:0 0;transform:scaleX(0.9300);">=>0.15</span><span class="abs" style="left:233px;top:414.4px;font-size:11px;line-height:13px;color:#000;white-space:nowrap;transform-origin:0 0;transform:scaleX(0.9300);">LINE</span><span class="abs" style="left:293px;top:414.4px;font-size:11px;line-height:13px;color:#000;white-space:nowrap;transform-origin:0 0;transform:scaleX(0.9300);">L1</span><span class="abs" style="left:353px;top:414.4px;font-size:11px;line-height:13px;color:#000;white-space:nowrap;transform-origin:0 0;transform:scaleX(0.9300);">LINE</span><span class="abs" style="left:413px;top:414.4px;font-size:11px;line-height:13px;color:#000;white-space:nowrap;transform-origin:0 0;transform:scaleX(0.9300);">L1</span><span class="abs" style="left:29.2px;top:432.4px;font-size:11px;line-height:13px;color:#000;white-space:nowrap;transform-origin:0 0;transform:scaleX(0.9300);">1</span><svg class="abs" style="left:58px;top:430px" width="16" height="15" viewBox="0 0 16 15"><path d="M1 14 L2 5 L4 3 L6 6 L5 9 L9 10 L11 8 L14 12 L14 14Z" fill="#b0b0b0" stroke="#888" stroke-width=".6"/><circle cx="12" cy="4" r="2.3" fill="#fff" stroke="#888" stroke-width=".8"/></svg><div class="abs" style="left:78px;top:433px;width:14px;height:10px;background:#ff0000"></div><span class="abs" style="left:113px;top:432.4px;font-size:11px;line-height:13px;color:#000;white-space:nowrap;transform-origin:0 0;transform:scaleX(0.9300);">0.127mm</span><span class="abs" style="left:173px;top:432.4px;font-size:11px;line-height:13px;color:#000;white-space:nowrap;transform-origin:0 0;transform:scaleX(0.9300);">=>0.15</span><span class="abs" style="left:233px;top:432.4px;font-size:11px;line-height:13px;color:#000;white-space:nowrap;transform-origin:0 0;transform:scaleX(0.9300);">LINE</span><span class="abs" style="left:293px;top:432.4px;font-size:11px;line-height:13px;color:#000;white-space:nowrap;transform-origin:0 0;transform:scaleX(0.9300);">L1</span><span class="abs" style="left:353px;top:432.4px;font-size:11px;line-height:13px;color:#000;white-space:nowrap;transform-origin:0 0;transform:scaleX(0.9300);">LINE</span><span class="abs" style="left:413px;top:432.4px;font-size:11px;line-height:13px;color:#000;white-space:nowrap;transform-origin:0 0;transform:scaleX(0.9300);">L1</span><span class="abs" style="left:29.2px;top:450.4px;font-size:11px;line-height:13px;color:#000;white-space:nowrap;transform-origin:0 0;transform:scaleX(0.9300);">2</span><svg class="abs" style="left:58px;top:448px" width="16" height="15" viewBox="0 0 16 15"><path d="M1 14 L2 5 L4 3 L6 6 L5 9 L9 10 L11 8 L14 12 L14 14Z" fill="#b0b0b0" stroke="#888" stroke-width=".6"/><circle cx="12" cy="4" r="2.3" fill="#fff" stroke="#888" stroke-width=".8"/></svg><div class="abs" style="left:78px;top:451px;width:14px;height:10px;background:#ff0000"></div><span class="abs" style="left:113px;top:450.4px;font-size:11px;line-height:13px;color:#000;white-space:nowrap;transform-origin:0 0;transform:scaleX(0.9300);">0.127mm</span><span class="abs" style="left:173px;top:450.4px;font-size:11px;line-height:13px;color:#000;white-space:nowrap;transform-origin:0 0;transform:scaleX(0.9300);">=>0.15</span><span class="abs" style="left:233px;top:450.4px;font-size:11px;line-height:13px;color:#000;white-space:nowrap;transform-origin:0 0;transform:scaleX(0.9300);">LINE</span><span class="abs" style="left:293px;top:450.4px;font-size:11px;line-height:13px;color:#000;white-space:nowrap;transform-origin:0 0;transform:scaleX(0.9300);">L1</span><span class="abs" style="left:353px;top:450.4px;font-size:11px;line-height:13px;color:#000;white-space:nowrap;transform-origin:0 0;transform:scaleX(0.9300);">LINE</span><span class="abs" style="left:413px;top:450.4px;font-size:11px;line-height:13px;color:#000;white-space:nowrap;transform-origin:0 0;transform:scaleX(0.9300);">L1</span><span class="abs" style="left:29.2px;top:468.4px;font-size:11px;line-height:13px;color:#000;white-space:nowrap;transform-origin:0 0;transform:scaleX(0.9300);">3</span><svg class="abs" style="left:58px;top:466px" width="16" height="15" viewBox="0 0 16 15"><path d="M1 14 L2 5 L4 3 L6 6 L5 9 L9 10 L11 8 L14 12 L14 14Z" fill="#b0b0b0" stroke="#888" stroke-width=".6"/><circle cx="12" cy="4" r="2.3" fill="#fff" stroke="#888" stroke-width=".8"/></svg><div class="abs" style="left:78px;top:469px;width:14px;height:10px;background:#ff0000"></div><span class="abs" style="left:113px;top:468.4px;font-size:11px;line-height:13px;color:#000;white-space:nowrap;transform-origin:0 0;transform:scaleX(0.9300);">0.127mm</span><span class="abs" style="left:173px;top:468.4px;font-size:11px;line-height:13px;color:#000;white-space:nowrap;transform-origin:0 0;transform:scaleX(0.9300);">=>0.15</span><span class="abs" style="left:233px;top:468.4px;font-size:11px;line-height:13px;color:#000;white-space:nowrap;transform-origin:0 0;transform:scaleX(0.9300);">LINE</span><span class="abs" style="left:293px;top:468.4px;font-size:11px;line-height:13px;color:#000;white-space:nowrap;transform-origin:0 0;transform:scaleX(0.9300);">L1</span><span class="abs" style="left:353px;top:468.4px;font-size:11px;line-height:13px;color:#000;white-space:nowrap;transform-origin:0 0;transform:scaleX(0.9300);">LINE</span><span class="abs" style="left:413px;top:468.4px;font-size:11px;line-height:13px;color:#000;white-space:nowrap;transform-origin:0 0;transform:scaleX(0.9300);">L1</span><span class="abs" style="left:29.2px;top:486.4px;font-size:11px;line-height:13px;color:#000;white-space:nowrap;transform-origin:0 0;transform:scaleX(0.9300);">4</span><svg class="abs" style="left:58px;top:484px" width="16" height="15" viewBox="0 0 16 15"><path d="M1 14 L2 5 L4 3 L6 6 L5 9 L9 10 L11 8 L14 12 L14 14Z" fill="#b0b0b0" stroke="#888" stroke-width=".6"/><circle cx="12" cy="4" r="2.3" fill="#fff" stroke="#888" stroke-width=".8"/></svg><div class="abs" style="left:78px;top:487px;width:14px;height:10px;background:#ff0000"></div><span class="abs" style="left:113px;top:486.4px;font-size:11px;line-height:13px;color:#000;white-space:nowrap;transform-origin:0 0;transform:scaleX(0.9300);">0.1431...</span><span class="abs" style="left:173px;top:486.4px;font-size:11px;line-height:13px;color:#000;white-space:nowrap;transform-origin:0 0;transform:scaleX(0.9300);">=>0.15</span><span class="abs" style="left:233px;top:486.4px;font-size:11px;line-height:13px;color:#000;white-space:nowrap;transform-origin:0 0;transform:scaleX(0.9300);">LINE</span><span class="abs" style="left:293px;top:486.4px;font-size:11px;line-height:13px;color:#000;white-space:nowrap;transform-origin:0 0;transform:scaleX(0.9300);">L1</span><span class="abs" style="left:353px;top:486.4px;font-size:11px;line-height:13px;color:#000;white-space:nowrap;transform-origin:0 0;transform:scaleX(0.9300);">LINE</span><span class="abs" style="left:413px;top:486.4px;font-size:11px;line-height:13px;color:#000;white-space:nowrap;transform-origin:0 0;transform:scaleX(0.9300);">L1</span><span class="abs" style="left:29.2px;top:504.4px;font-size:11px;line-height:13px;color:#000;white-space:nowrap;transform-origin:0 0;transform:scaleX(0.9300);">5</span><svg class="abs" style="left:58px;top:502px" width="16" height="15" viewBox="0 0 16 15"><path d="M1 14 L2 5 L4 3 L6 6 L5 9 L9 10 L11 8 L14 12 L14 14Z" fill="#b0b0b0" stroke="#888" stroke-width=".6"/><circle cx="12" cy="4" r="2.3" fill="#fff" stroke="#888" stroke-width=".8"/></svg><div class="abs" style="left:78px;top:505px;width:14px;height:10px;background:#ff0000"></div><span class="abs" style="left:113px;top:504.4px;font-size:11px;line-height:13px;color:#000;white-space:nowrap;transform-origin:0 0;transform:scaleX(0.9300);">0.127mm</span><span class="abs" style="left:173px;top:504.4px;font-size:11px;line-height:13px;color:#000;white-space:nowrap;transform-origin:0 0;transform:scaleX(0.9300);">=>0.15</span><span class="abs" style="left:233px;top:504.4px;font-size:11px;line-height:13px;color:#000;white-space:nowrap;transform-origin:0 0;transform:scaleX(0.9300);">LINE</span><span class="abs" style="left:293px;top:504.4px;font-size:11px;line-height:13px;color:#000;white-space:nowrap;transform-origin:0 0;transform:scaleX(0.9300);">L6</span><span class="abs" style="left:353px;top:504.4px;font-size:11px;line-height:13px;color:#000;white-space:nowrap;transform-origin:0 0;transform:scaleX(0.9300);">LINE</span><span class="abs" style="left:413px;top:504.4px;font-size:11px;line-height:13px;color:#000;white-space:nowrap;transform-origin:0 0;transform:scaleX(0.9300);">L6</span><span class="abs" style="left:29.2px;top:522.4px;font-size:11px;line-height:13px;color:#000;white-space:nowrap;transform-origin:0 0;transform:scaleX(0.9300);">6</span><svg class="abs" style="left:58px;top:520px" width="16" height="15" viewBox="0 0 16 15"><path d="M1 14 L2 5 L4 3 L6 6 L5 9 L9 10 L11 8 L14 12 L14 14Z" fill="#b0b0b0" stroke="#888" stroke-width=".6"/><circle cx="12" cy="4" r="2.3" fill="#fff" stroke="#888" stroke-width=".8"/></svg><div class="abs" style="left:78px;top:523px;width:14px;height:10px;background:#ff0000"></div><span class="abs" style="left:113px;top:522.4px;font-size:11px;line-height:13px;color:#000;white-space:nowrap;transform-origin:0 0;transform:scaleX(0.9300);">0.127mm</span><span class="abs" style="left:173px;top:522.4px;font-size:11px;line-height:13px;color:#000;white-space:nowrap;transform-origin:0 0;transform:scaleX(0.9300);">=>0.15</span><span class="abs" style="left:233px;top:522.4px;font-size:11px;line-height:13px;color:#000;white-space:nowrap;transform-origin:0 0;transform:scaleX(0.9300);">LINE</span><span class="abs" style="left:293px;top:522.4px;font-size:11px;line-height:13px;color:#000;white-space:nowrap;transform-origin:0 0;transform:scaleX(0.9300);">L6</span><span class="abs" style="left:353px;top:522.4px;font-size:11px;line-height:13px;color:#000;white-space:nowrap;transform-origin:0 0;transform:scaleX(0.9300);">LINE</span><span class="abs" style="left:413px;top:522.4px;font-size:11px;line-height:13px;color:#000;white-space:nowrap;transform-origin:0 0;transform:scaleX(0.9300);">L6</span><span class="abs" style="left:29.2px;top:540.4px;font-size:11px;line-height:13px;color:#000;white-space:nowrap;transform-origin:0 0;transform:scaleX(0.9300);">7</span><svg class="abs" style="left:58px;top:538px" width="16" height="15" viewBox="0 0 16 15"><path d="M1 14 L2 5 L4 3 L6 6 L5 9 L9 10 L11 8 L14 12 L14 14Z" fill="#b0b0b0" stroke="#888" stroke-width=".6"/><circle cx="12" cy="4" r="2.3" fill="#fff" stroke="#888" stroke-width=".8"/></svg><div class="abs" style="left:78px;top:541px;width:14px;height:10px;background:#ff0000"></div><span class="abs" style="left:113px;top:540.4px;font-size:11px;line-height:13px;color:#000;white-space:nowrap;transform-origin:0 0;transform:scaleX(0.9300);">0.127mm</span><span class="abs" style="left:173px;top:540.4px;font-size:11px;line-height:13px;color:#000;white-space:nowrap;transform-origin:0 0;transform:scaleX(0.9300);">=>0.15</span><span class="abs" style="left:233px;top:540.4px;font-size:11px;line-height:13px;color:#000;white-space:nowrap;transform-origin:0 0;transform:scaleX(0.9300);">LINE</span><span class="abs" style="left:293px;top:540.4px;font-size:11px;line-height:13px;color:#000;white-space:nowrap;transform-origin:0 0;transform:scaleX(0.9300);">L6</span><span class="abs" style="left:353px;top:540.4px;font-size:11px;line-height:13px;color:#000;white-space:nowrap;transform-origin:0 0;transform:scaleX(0.9300);">LINE</span><span class="abs" style="left:413px;top:540.4px;font-size:11px;line-height:13px;color:#000;white-space:nowrap;transform-origin:0 0;transform:scaleX(0.9300);">L6</span><div class="abs" style="left:6px;top:629px;width:750px;height:41px;background:#fff;border:1px solid #3a94ee"></div><span class="abs" style="left:10px;top:631.9px;font-size:11px;line-height:13px;color:#000;white-space:nowrap;transform-origin:0 0;transform:scaleX(0.9749);">The minimum copper trace distance needs to meet PCB fabricator's capability.</span><svg class="abs" style="left:741px;top:632px" width="10" height="36"><path d="M0 8L5 2L10 8ZM0 26L5 32L10 26Z" fill="#a8a8a8"/></svg><div class="abs" style="left:6px;top:671px;width:189px;height:28px;border:1px solid #c8c8c8"></div><div class="abs" style="left:57px;top:674px;width:1px;height:22px;background:#9a9a9a"></div><div class="abs" style="left:134px;top:674px;width:1px;height:22px;background:#9a9a9a"></div><div class="abs" style="left:165px;top:674px;width:1px;height:22px;background:#9a9a9a"></div><svg class="abs" style="left:6px;top:672px" width="190" height="26" viewBox="212 774 190 26"><circle cx="224" cy="781" r="4" fill="#c8901c" stroke="#6a4a00" stroke-width=".7"/><path d="M217 794c0-6 3-8 7-8s7 2 7 8z" fill="#e8c020" stroke="#6a4a00" stroke-width=".7"/><path d="M225 792h7M228.500 788.500v7" stroke="#20a020" stroke-width="2.2"/><circle cx="246" cy="781" r="4" fill="#9a9a9a"/><path d="M240 794c0-6 3-8 6-8s6 2 6 8z" fill="#9a9a9a"/><path d="M247 794l2-4 6-6 2 2-6 6z" fill="#8a8a8a" stroke="#f0f0f0" stroke-width=".6"/><text x="271" y="791" font-family="Liberation Serif" font-weight="bold" font-size="13" fill="#111">2D</text><text x="295" y="791" font-family="Liberation Serif" font-weight="bold" font-size="13" fill="#111">3D</text><path d="M318 779h10v16h-10z" fill="#fff" stroke="#2a6fd0" stroke-width="1.3"/><path d="M318 778h10" stroke="#2a6fd0" stroke-width="2" stroke-dasharray="1 1"/><path d="M322 789v-5h4v-3l7 5-7 5v-2z" fill="#2a7fe8" stroke="#1a50a8" stroke-width=".5"/><path d="M348.500 779.500h9v11h-9z" fill="#dce9fb" stroke="#3a78d0"/><path d="M353.500 784.500h9v11h-9z" fill="#fff" stroke="#3a78d0"/><rect x="380.500" y="779.500" width="15" height="15" fill="#fff" stroke="#1a8a2a" stroke-width="1.3"/><path d="M385.500 780v15M390.500 780v15M381 784.500h15M381 789.500h15" stroke="#1a8a2a" stroke-width="1"/></svg><span class="abs" style="left:612.5px;top:683.4px;font-size:11px;line-height:13px;color:#000;white-space:nowrap;transform-origin:0 0;transform:scaleX(0.9300);">1/1</span><div class="abs" style="left:632px;top:681px;width:52px;height:16px;background:#fff;border:1px solid #7a7a7a"></div><span class="abs" style="left:635px;top:683.4px;font-size:11px;line-height:13px;color:#000;white-space:nowrap;transform-origin:0 0;transform:scaleX(0.9300);">0</span><svg class="abs" style="left:689px;top:680px" width="60" height="18" viewBox="895 782 60 18"><path d="M898 791a5 5 0 1 1 5 4.500h-2" fill="none" stroke="#9a9a9a" stroke-width="2.600"/><path d="M905 788v7l5-3.500z" fill="#9a9a9a"/><path d="M922 784h5v6h3.500l-6 7-6-7h3.500z" fill="#9a9a9a"/><path d="M941 797h5v-6h3.500l-6-7-6 7h3.500z" fill="#9a9a9a"/></svg><div class="abs" style="left:6px;top:701px;width:750px;height:2px;background:#c4c4c4"></div></div></div>

</body></html>
